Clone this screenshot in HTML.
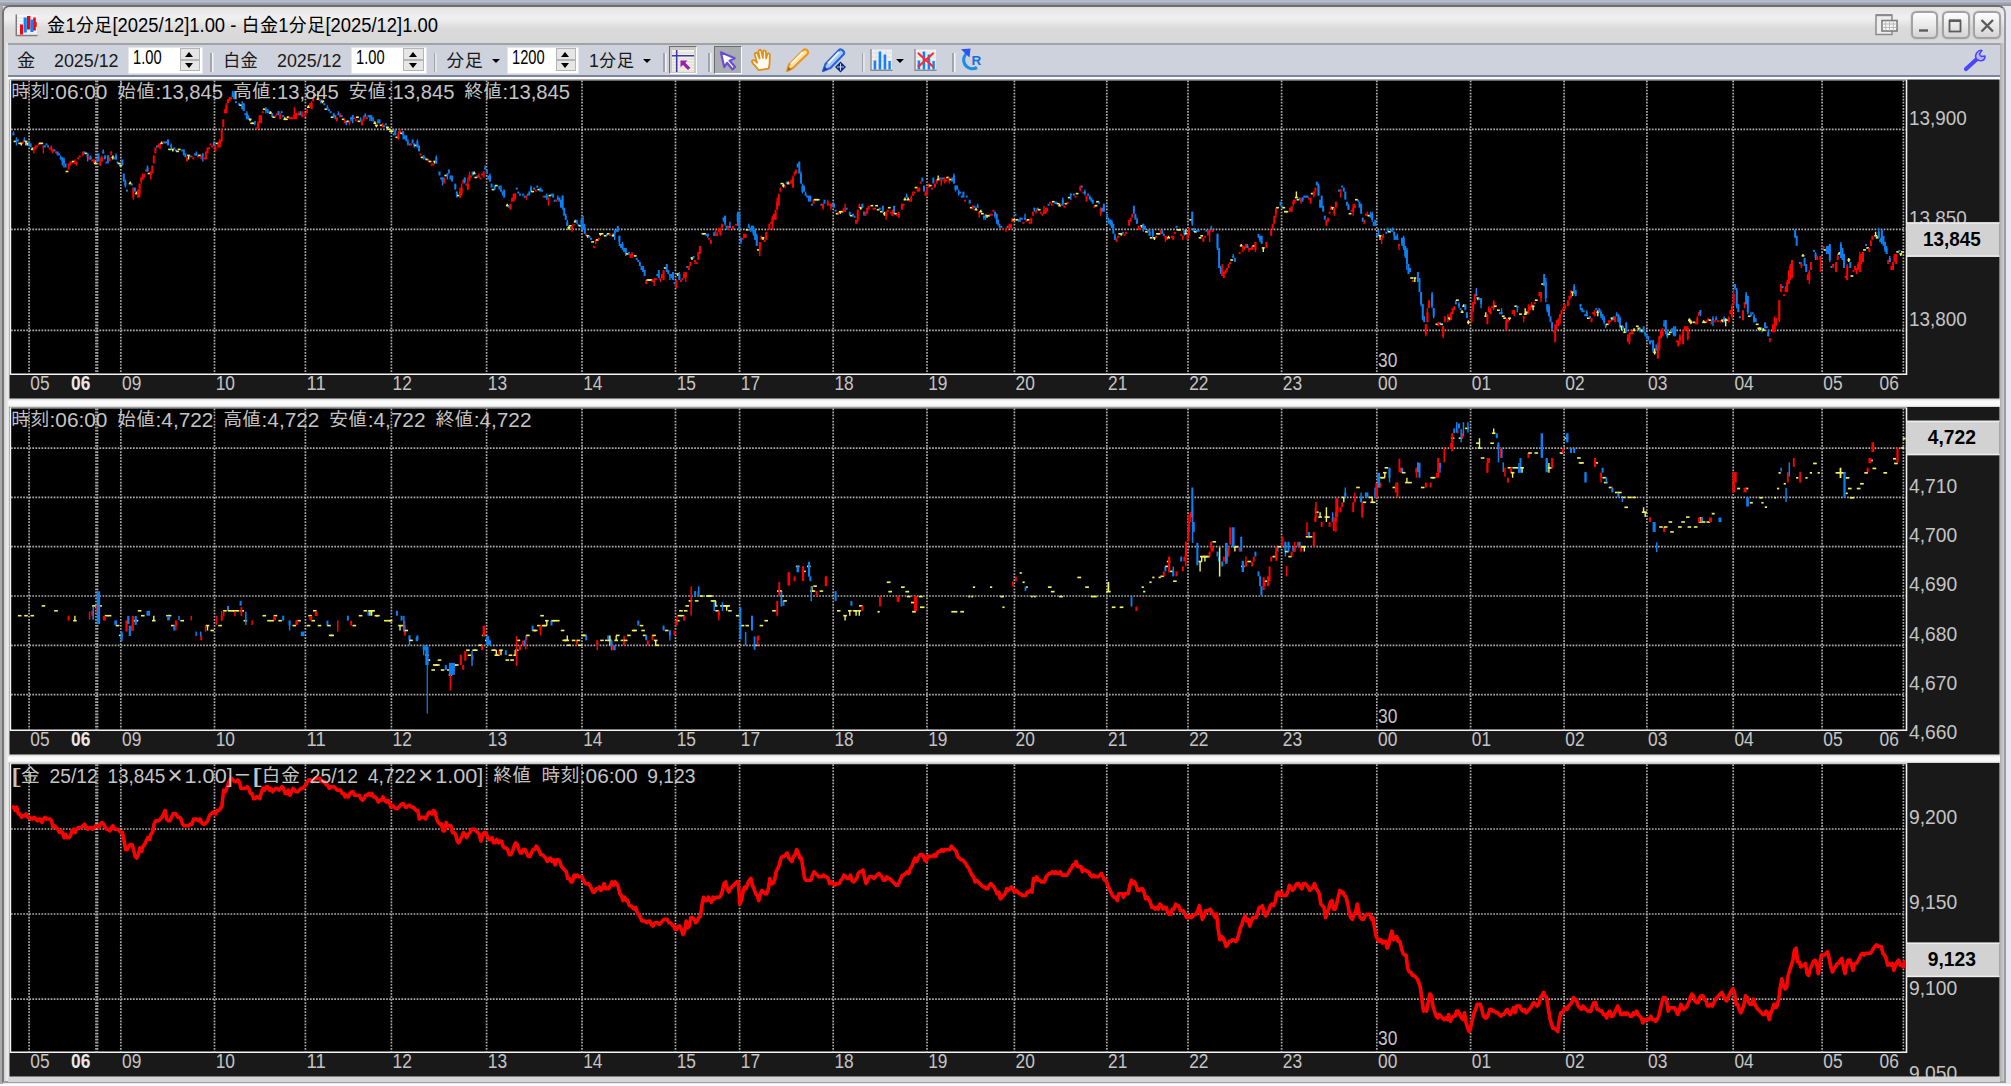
<!DOCTYPE html><html lang="ja"><head><meta charset="utf-8"><title>金1分足[2025/12]1.00 - 白金1分足[2025/12]1.00</title><style>
html,body{margin:0;padding:0;overflow:hidden}
body{width:2011px;height:1086px;overflow:hidden;background:#e7e9f2;font-family:"Liberation Sans","IPAGothic",sans-serif;position:relative}
.abs{position:absolute}
#topstrip{left:0;top:0;width:2011px;height:6px;background:linear-gradient(#aeb4c4 0,#b9bfcf 1.5px,#a0a5b1 3px,#96999f 5px,#8a8a8a 6px)}
#leftstrip{left:0;top:5px;width:3px;height:1081px;background:#a9a9ab}
#win{left:1.5px;top:4.8px;width:2004px;height:1078.7px;box-sizing:border-box;border:2px solid #747474;border-top:2.6px solid #6e6e6e;border-radius:8px 8px 0 0;background:#e2e2e2;border-bottom-color:#a0a0a0;border-right-color:#9c9c9c}
#bottomstrip{left:0;top:1083.5px;width:2011px;height:2.5px;background:#fdfdfd}
#title{left:3.5px;top:7px;width:2000px;height:36px;border-radius:6px 6px 0 0;background:linear-gradient(#e0e0e0 0,#e7e7e7 2px,#efefef 10px,#ededed 13px,#dbdbdb 21px,#d8d8d8 36px)}
#titletext{left:47px;top:13.5px;font-size:20px;line-height:22px;color:#000;white-space:nowrap;transform-origin:0 0}
.wbtn{top:11.3px;width:27.5px;height:27.5px;box-sizing:border-box;border:2px solid #a2a2a2;border-radius:5.5px;background:linear-gradient(#fdfdfd 0,#ececec 45%,#d4d4d4 100%);box-shadow:0 0 1.5px rgba(120,120,120,.55)}
#toolbar{left:8px;top:43px;width:1991.5px;height:33.5px;box-sizing:border-box;border-top:2px solid #a3a3a3;border-bottom:2px solid #7b879e;background:#ced2dc}
#toolunder{left:8px;top:76.5px;width:1991.5px;height:3px;background:#fafafa}
.tl{top:49.5px;font-size:19px;line-height:22px;color:#1a1a1a;white-space:nowrap;transform-origin:0 0}
.spin{top:47px;height:27px;background:#fff;box-sizing:border-box;border:1px solid #e4e6ea}
.spin span{position:absolute;left:4px;top:-0.8px;font-size:19.5px;line-height:20px;color:#000;transform-origin:0 0;white-space:nowrap}
.sb{position:absolute;right:2px;width:20.5px;box-sizing:border-box;border:1px solid #b4b4b4;background:#e6e6e6}
.sb.u{top:0.4px;height:11.3px}
.sb.d{top:12.2px;height:10.8px}
.sb i{position:absolute;left:4.6px;width:0;height:0;border-left:4.8px solid transparent;border-right:4.8px solid transparent}
.sb.u i{top:2.2px;border-bottom:5.2px solid #000}
.sb.d i{top:2.2px;border-top:5.2px solid #000}
.sep{top:53px;width:1.5px;height:19px;background:#a2a4aa;box-shadow:1.5px 0 0 #f4f4f6}
.dd{top:58.5px;width:0;height:0;border-left:4.4px solid transparent;border-right:4.4px solid transparent;border-top:4.6px solid #000}
.pressed{top:45.5px;width:28px;height:28.5px;box-sizing:border-box;border:1.6px solid;border-color:#6c6c6c #fbfbfb #fbfbfb #6c6c6c}
.ico{top:47px;width:26px;height:26px}
.panel{left:9px;width:1992px;overflow:hidden}
.panel svg{display:block}
.gap{left:8px;width:1991.5px;background:#fafafa}
</style></head><body><div class="abs" id="topstrip"></div><div class="abs" id="leftstrip"></div><div class="abs" id="bottomstrip"></div><div class="abs" id="win"></div><div class="abs" id="title"></div><svg class="abs" style="left:15px;top:14px" width="24" height="24" viewBox="0 0 24 24">
<rect x="2" y="1" width="20" height="20" fill="#f7f7f7"/><path d="M2 4H22M2 7H22M2 10H22M2 13H22M2 16H22M2 19H22" stroke="#d9e6e6" stroke-width="1"/>
<path d="M1.3 0.5V21.6H22.5" stroke="#7c7c7c" stroke-width="1.5" fill="none"/>
<rect x="5" y="10.5" width="3" height="10" fill="#ff0000"/><rect x="8.6" y="3.5" width="3.2" height="15" fill="#0a84ff"/><rect x="12" y="2" width="3.4" height="13.5" fill="#ff0000"/><rect x="15.4" y="5.5" width="3" height="12.5" fill="#0a84ff"/><rect x="18.2" y="3.5" width="2.6" height="13" fill="#ff0000"/><rect x="20.3" y="8" width="1.4" height="5" fill="#ff0000"/>
</svg><div class="abs" id="titletext" style="transform:scaleX(0.9207)">金1分足[2025/12]1.00 - 白金1分足[2025/12]1.00</div><svg class="abs" style="left:1875px;top:13px" width="24" height="24" viewBox="0 0 24 24">
<rect x="1" y="2" width="16" height="19.5" fill="#eee" stroke="#8a8a8a" stroke-width="1.5"/><rect x="1" y="1.2" width="16" height="2" fill="#8a8a8a"/>
<rect x="7" y="7.5" width="15" height="10.5" fill="#f4f4f4" stroke="#7a7a7a" stroke-width="1.6"/><path d="M7 11H22M7 14.5H22M10.7 7.5V18M14.5 7.5V18M18.3 7.5V18" stroke="#b4b4b4" stroke-width="0.9"/></svg><div class="abs wbtn" style="left:1910.5px"></div><div class="abs wbtn" style="left:1942px"></div><div class="abs wbtn" style="left:1973px"></div><svg class="abs" style="left:1910.5px;top:11.5px" width="90" height="27" viewBox="0 0 90 27">
<path d="M8 18.5H17" stroke="#5c5c5c" stroke-width="2.4"/>
<rect x="38.5" y="9" width="11" height="10.5" fill="none" stroke="#5c5c5c" stroke-width="1.8"/><path d="M38 8.6H50" stroke="#5c5c5c" stroke-width="2.6"/>
<path d="M70.5 8L82 19.5M82 8L70.5 19.5" stroke="#5c5c5c" stroke-width="2.4"/></svg><div class="abs" id="toolbar"></div><div class="abs" id="toolunder"></div><div class="abs tl" id="t1" style="left:17px;transform:scaleX(0.9789)">金</div><div class="abs tl" id="t2" style="left:53.5px;transform:scaleX(0.939)">2025/12</div><div class="abs spin" style="left:128px;width:75px"><span style="transform:scaleX(0.7536)">1.00</span><div class="sb u"><i></i></div><div class="sb d"><i></i></div></div><div class="abs sep" style="left:210px"></div><div class="abs tl" id="t3" style="left:222.8px;transform:scaleX(0.9263)">白金</div><div class="abs tl" id="t4" style="left:277px;transform:scaleX(0.939)">2025/12</div><div class="abs spin" style="left:351px;width:75.5px"><span style="transform:scaleX(0.7536)">1.00</span><div class="sb u"><i></i></div><div class="sb d"><i></i></div></div><div class="abs sep" style="left:433.7px"></div><div class="abs tl" id="t5" style="left:445.5px;transform:scaleX(0.9737)">分足</div><div class="abs dd" style="left:492px"></div><div class="abs spin" style="left:507px;width:72px"><span style="transform:scaleX(0.7536)">1200</span><div class="sb u"><i></i></div><div class="sb d"><i></i></div></div><div class="abs tl" id="t6" style="left:588.5px;transform:scaleX(0.9305)">1分足</div><div class="abs dd" style="left:643px"></div><div class="abs sep" style="left:663px"></div><div class="abs sep" style="left:708px"></div><div class="abs sep" style="left:861.5px"></div><div class="abs sep" style="left:952px"></div><div class="abs pressed" style="left:668.5px;background:#c9c9c9"></div><svg class="abs" style="left:672px;top:49.5px" width="22" height="22" viewBox="0 0 22 22">
<rect width="22" height="22" fill="#f3f1e4"/><path d="M0 3H22M0 6H22M0 9H22M0 12H22M0 15H22M0 18H22M0 21H22" stroke="#dcdacd" stroke-width="1"/>
<path d="M4.7 0V22M0 5.7H22" stroke="#3b3bb4" stroke-width="1.6"/>
<path d="M8.5 10.5H15.5L13.3 12.7L18.3 17.7L16 20L11 15L8.5 17.3Z" fill="#9a1fb0"/></svg><div class="abs pressed" style="left:713.5px;background:#a9acb0"></div><svg class="abs" style="left:716px;top:48px" width="24" height="24" viewBox="0 0 24 24">
<path transform="translate(1.2 1.5) scale(0.92)" d="M4 3L19 9.5L13.5 12.2L19.5 19L16.5 21.5L10.8 14.6L7.6 19Z" fill="#fff" stroke="#6a4fd0" stroke-width="2.4" stroke-linejoin="round"/></svg><svg class="abs" style="left:749px;top:47px" width="26" height="26" viewBox="0 0 26 26">
<path transform="rotate(-9 13 13) translate(0.5 0.5) scale(0.96)" d="M8 23C6 19 3.5 16.5 2.5 13.5C2 11.8 4 11 5.5 12.5L7.5 15L6.5 6.5C6.3 4.3 9 4 9.5 6L10.7 11L10.8 3.8C10.8 1.6 13.6 1.6 13.8 3.8L14.2 11L15.6 4.8C16 2.8 18.6 3.2 18.4 5.4L17.6 12L19.3 8.2C20.2 6.4 22.4 7.2 21.9 9.2C21 13 21 18 18.5 23Z" fill="#fffaf0" stroke="#e0901c" stroke-width="1.9" stroke-linejoin="round"/></svg><svg class="abs" style="left:785px;top:47px" width="26" height="26" viewBox="0 0 26 26">
<path d="M2 24L4 17.5L18.5 3C20.5 1 24.5 4.5 22.5 7L8 21Z" fill="#ffe1a8" stroke="#e8961e" stroke-width="2" stroke-linejoin="round"/><path d="M2 24L3.4 19.4L6.4 22.4Z" fill="#b06a10"/><path d="M6 17L18 5" stroke="#fff6e0" stroke-width="2"/></svg><svg class="abs" style="left:821px;top:47px" width="27" height="26" viewBox="0 0 27 26">
<path d="M2 24L4.5 17L18 3C20 1 25 5 22.5 7.5L9.5 21Z" fill="#a8c8ff" stroke="#2a66d8" stroke-width="2.2" stroke-linejoin="round"/><path d="M2 24L3.6 19.6L6.6 22.4Z" fill="#1a3f9c"/><path d="M7 16.5L18 5" stroke="#eef4ff" stroke-width="2"/>
<path d="M19.5 14.5L25 20L19.5 25.5L14 20Z" fill="#0b2a7a"/><path d="M19.5 16.5V23.5M16 20H23" stroke="#c8d6ff" stroke-width="1"/></svg><svg class="abs" style="left:869.5px;top:49px" width="23" height="23" viewBox="0 0 23 23">
<rect x="1" y="0.5" width="21" height="20.5" fill="#f0f0f0"/><path d="M1 4H22M1 8H22M1 12H22M1 16H22M6 0.5V21M11 0.5V21M16 0.5V21" stroke="#dcdcdc" stroke-width="0.8"/>
<path d="M1 0V21.3H22.5" stroke="#8c8c8c" stroke-width="1.4" fill="none"/>
<rect x="3.6" y="11.5" width="2.6" height="9" fill="#1482ff"/><rect x="8.6" y="2.5" width="2.6" height="18" fill="#1482ff"/><rect x="13.6" y="5.5" width="2.6" height="15" fill="#1482ff"/><rect x="18.4" y="12" width="2.4" height="8.5" fill="#1482ff"/></svg><div class="abs dd" style="left:896px"></div><svg class="abs" style="left:913.5px;top:49px" width="23" height="23" viewBox="0 0 23 23">
<rect x="1" y="0.5" width="21" height="20.5" fill="#f0f0f0"/><path d="M1 4H22M1 8H22M1 12H22M1 16H22" stroke="#dcdcdc" stroke-width="0.8"/>
<path d="M1 0V21.3H22.5" stroke="#8c8c8c" stroke-width="1.4" fill="none"/>
<rect x="3.6" y="11.5" width="2.6" height="9" fill="#1482ff"/><rect x="8.6" y="2.5" width="2.6" height="18" fill="#1482ff"/><rect x="13.6" y="5.5" width="2.6" height="15" fill="#1482ff"/><rect x="18.4" y="12" width="2.4" height="8.5" fill="#1482ff"/>
<path d="M4.5 4.5L19 17.5M19 4.5L4.5 17.5" stroke="#ff2a2a" stroke-width="2.2" stroke-linecap="round"/></svg><svg class="abs" style="left:958px;top:47px" width="26" height="26" viewBox="0 0 26 26">
<path d="M10 5.2A8.6 8.6 0 1 0 19 20.5" fill="none" stroke="#1a8fe6" stroke-width="3.2"/><path d="M3 2.2L12.5 1.5L11.5 10.5Z" fill="#2a50ff"/>
<text x="13.6" y="17.5" font-family="Liberation Sans, sans-serif" font-weight="bold" font-size="13.5" fill="#1470dc">R</text></svg><svg class="abs" style="left:1963px;top:48px" width="26" height="24" viewBox="0 0 26 24">
<path d="M3 21L14.5 10.5" stroke="#4a46ff" stroke-width="4.2" stroke-linecap="round"/><path d="M13.2 10.8C11.4 6.6 14.4 2 19 2.4L16.4 6L18.2 8.6L22 8C22.4 12.4 17.6 14.6 13.2 10.8Z" fill="#b8b8ff" stroke="#4a46ff" stroke-width="1.5" stroke-linejoin="round"/></svg><div class="abs panel" style="top:79px;height:320px"><svg width="1992" height="320" viewBox="9 79 1992 320" font-family="Liberation Sans, IPAGothic, sans-serif"><rect x="9.5" y="79.5" width="1990" height="319" fill="#191919"/><rect x="10" y="79.5" width="1896.5" height="294.8" fill="#000"/><path d="M10 79.9H1906.5" stroke="#c8c8c8" stroke-width="1.3" fill="none"/><path d="M10.4 79.5V374.3H1906.5V79.5" stroke="#f4f4f4" stroke-width="1.6" fill="none"/><clipPath id="c1"><rect x="11" y="79.5" width="1895" height="294.3"/></clipPath><g stroke="#acacac" stroke-width="1.7" stroke-dasharray="1.7 1.35" fill="none"><path d="M29.1 80.5V374.3"/><path d="M120.8 80.5V374.3"/><path d="M214.5 80.5V374.3"/><path d="M305.4 80.5V374.3"/><path d="M391.4 80.5V374.3"/><path d="M486.6 80.5V374.3"/><path d="M582 80.5V374.3"/><path d="M675.5 80.5V374.3"/><path d="M739.6 80.5V374.3"/><path d="M833.2 80.5V374.3"/><path d="M927 80.5V374.3"/><path d="M1014.4 80.5V374.3"/><path d="M1106.8 80.5V374.3"/><path d="M1188 80.5V374.3"/><path d="M1281.6 80.5V374.3"/><path d="M1376.8 80.5V374.3"/><path d="M1470.6 80.5V374.3"/><path d="M1564.1 80.5V374.3"/><path d="M1646.9 80.5V374.3"/><path d="M1733.2 80.5V374.3"/><path d="M1822.1 80.5V374.3"/><path d="M1903.4 80.5V374.3"/><path d="M96 80.5V374.3"/><path d="M97.5 80.5V374.3"/><path d="M11 129.3H1905.5"/><path d="M11 229.3H1905.5"/><path d="M11 330.3H1905.5"/></g><g clip-path="url(#c1)"><path d="M13.4 131.3V135.3" stroke="#0a80f4" stroke-width="1.4"/><rect x="12.4" y="133.3" width="2" height="2" fill="#0a80f4"/><rect x="13.6" y="140.6" width="2.8" height="1.6" fill="#f0f060"/><path d="M16.5 137.3V145.4" stroke="#0a80f4" stroke-width="1.4"/><rect x="15.5" y="139.4" width="2" height="2" fill="#0a80f4"/><rect x="17.1" y="139.4" width="2" height="2" fill="#0a80f4"/><rect x="18.3" y="142.6" width="2.8" height="1.6" fill="#f0f060"/><path d="M21.3 143.4V145.4" stroke="#f0f060" stroke-width="1.4"/><rect x="19.9" y="142.6" width="2.8" height="1.6" fill="#f0f060"/><rect x="21.8" y="141.4" width="2" height="2" fill="#ff0000"/><path d="M24.4 137.3V141.4" stroke="#0a80f4" stroke-width="1.4"/><rect x="23.4" y="139.4" width="2" height="2" fill="#0a80f4"/><path d="M26 141.4V145.4" stroke="#f0f060" stroke-width="1.4"/><rect x="24.6" y="140.6" width="2.8" height="1.6" fill="#f0f060"/><path d="M27.6 143.4V145.4" stroke="#f0f060" stroke-width="1.4"/><rect x="26.2" y="142.6" width="2.8" height="1.6" fill="#f0f060"/><rect x="28.2" y="141.4" width="2" height="4" fill="#0a80f4"/><rect x="29.7" y="143.4" width="2" height="4" fill="#0a80f4"/><path d="M32.3 147.4V149.4" stroke="#f0f060" stroke-width="1.4"/><rect x="30.9" y="148.6" width="2.8" height="1.6" fill="#f0f060"/><path d="M33.9 147.4V153.4" stroke="#ff0000" stroke-width="1.4"/><rect x="32.9" y="147.4" width="2" height="2" fill="#ff0000"/><rect x="34.5" y="145.4" width="2" height="4" fill="#ff0000"/><rect x="36.1" y="145.4" width="2" height="2" fill="#ff0000"/><rect x="37.6" y="143.4" width="2" height="2" fill="#ff0000"/><rect x="38.8" y="142.6" width="2.8" height="1.6" fill="#f0f060"/><rect x="40.4" y="142.6" width="2.8" height="1.6" fill="#f0f060"/><path d="M43.4 145.4V153.4" stroke="#ff0000" stroke-width="1.4"/><rect x="42.4" y="145.4" width="2" height="2" fill="#ff0000"/><rect x="43.9" y="145.4" width="2" height="2" fill="#0a80f4"/><rect x="45.5" y="143.4" width="2" height="2" fill="#0a80f4"/><rect x="47.1" y="145.4" width="2" height="2" fill="#0a80f4"/><rect x="48.7" y="147.4" width="2" height="2" fill="#ff0000"/><path d="M51.3 145.4V151.4" stroke="#ff0000" stroke-width="1.4"/><rect x="50.3" y="147.4" width="2" height="2" fill="#ff0000"/><path d="M52.8 149.4V153.4" stroke="#ff0000" stroke-width="1.4"/><rect x="51.8" y="149.4" width="2" height="2" fill="#ff0000"/><rect x="53.4" y="149.4" width="2" height="2" fill="#0a80f4"/><rect x="55" y="151.4" width="2" height="2" fill="#ff0000"/><rect x="56.6" y="151.4" width="2" height="4" fill="#0a80f4"/><rect x="58.1" y="153.4" width="2" height="2" fill="#0a80f4"/><path d="M60.7 155.4V159.5" stroke="#0a80f4" stroke-width="1.4"/><rect x="59.7" y="157.4" width="2" height="2" fill="#0a80f4"/><path d="M62.3 157.4V165.5" stroke="#0a80f4" stroke-width="1.4"/><rect x="61.3" y="157.4" width="2" height="4" fill="#0a80f4"/><path d="M63.9 157.4V167.5" stroke="#0a80f4" stroke-width="1.4"/><rect x="62.9" y="159.5" width="2" height="4" fill="#0a80f4"/><rect x="64.5" y="163.5" width="2" height="4" fill="#0a80f4"/><rect x="65.6" y="170.7" width="2.8" height="1.6" fill="#f0f060"/><rect x="67.6" y="163.5" width="2" height="6" fill="#ff0000"/><rect x="69.2" y="161.5" width="2" height="4" fill="#ff0000"/><rect x="70.8" y="161.5" width="2" height="2" fill="#ff0000"/><rect x="71.9" y="160.7" width="2.8" height="1.6" fill="#f0f060"/><path d="M74.9 159.5V163.5" stroke="#ff0000" stroke-width="1.4"/><rect x="73.9" y="161.5" width="2" height="2" fill="#ff0000"/><rect x="75.5" y="161.5" width="2" height="4" fill="#ff0000"/><rect x="77.1" y="157.4" width="2" height="2" fill="#ff0000"/><rect x="78.7" y="155.4" width="2" height="2" fill="#ff0000"/><path d="M82.8 151.4V155.4" stroke="#ff0000" stroke-width="1.4"/><rect x="81.8" y="153.4" width="2" height="2" fill="#ff0000"/><rect x="83.4" y="151.4" width="2" height="2" fill="#0a80f4"/><rect x="84.6" y="152.6" width="2.8" height="1.6" fill="#f0f060"/><path d="M87.6 153.4V161.5" stroke="#0a80f4" stroke-width="1.4"/><rect x="86.6" y="153.4" width="2" height="4" fill="#0a80f4"/><path d="M89.1 155.4V159.5" stroke="#ff0000" stroke-width="1.4"/><rect x="88.1" y="157.4" width="2" height="2" fill="#ff0000"/><path d="M90.7 155.4V159.5" stroke="#0a80f4" stroke-width="1.4"/><rect x="89.7" y="157.4" width="2" height="2" fill="#0a80f4"/><rect x="91.3" y="159.5" width="2" height="2" fill="#ff0000"/><path d="M93.9 159.5V163.5" stroke="#ff0000" stroke-width="1.4"/><rect x="92.9" y="159.5" width="2" height="2" fill="#ff0000"/><path d="M95.4 161.5V163.5" stroke="#f0f060" stroke-width="1.4"/><rect x="94" y="162.7" width="2.8" height="1.6" fill="#f0f060"/><rect x="96" y="159.5" width="2" height="2" fill="#0a80f4"/><rect x="97.6" y="153.4" width="2" height="8" fill="#0a80f4"/><path d="M100.2 157.4V165.5" stroke="#ff0000" stroke-width="1.4"/><rect x="99.2" y="161.5" width="2" height="4" fill="#ff0000"/><path d="M101.8 155.4V161.5" stroke="#ff0000" stroke-width="1.4"/><rect x="100.8" y="157.4" width="2" height="4" fill="#ff0000"/><path d="M103.3 149.4V153.4" stroke="#0a80f4" stroke-width="1.4"/><rect x="102.3" y="151.4" width="2" height="2" fill="#0a80f4"/><rect x="103.9" y="155.4" width="2" height="4" fill="#0a80f4"/><rect x="105.5" y="161.5" width="2" height="2" fill="#0a80f4"/><path d="M108.1 155.4V163.5" stroke="#0a80f4" stroke-width="1.4"/><rect x="107.1" y="155.4" width="2" height="6" fill="#0a80f4"/><rect x="108.6" y="157.4" width="2" height="4" fill="#ff0000"/><path d="M111.2 151.4V155.4" stroke="#ff0000" stroke-width="1.4"/><rect x="110.2" y="151.4" width="2" height="2" fill="#ff0000"/><path d="M112.8 155.4V159.5" stroke="#f0f060" stroke-width="1.4"/><rect x="111.4" y="156.6" width="2.8" height="1.6" fill="#f0f060"/><rect x="113.4" y="157.4" width="2" height="2" fill="#0a80f4"/><path d="M116 153.4V159.5" stroke="#0a80f4" stroke-width="1.4"/><rect x="115" y="155.4" width="2" height="4" fill="#0a80f4"/><rect x="116.5" y="161.5" width="2" height="2" fill="#0a80f4"/><rect x="117.7" y="162.7" width="2.8" height="1.6" fill="#f0f060"/><rect x="119.3" y="164.7" width="2.8" height="1.6" fill="#f0f060"/><rect x="121.3" y="159.5" width="2" height="6" fill="#0a80f4"/><rect x="122.8" y="173.5" width="2" height="8" fill="#0a80f4"/><path d="M125.4 179.6V187.6" stroke="#0a80f4" stroke-width="1.4"/><rect x="124.4" y="181.6" width="2" height="4" fill="#0a80f4"/><rect x="126" y="189.6" width="2" height="2" fill="#0a80f4"/><path d="M130.2 181.6V183.6" stroke="#f0f060" stroke-width="1.4"/><rect x="128.8" y="182.8" width="2.8" height="1.6" fill="#f0f060"/><rect x="130.7" y="183.6" width="2" height="2" fill="#0a80f4"/><path d="M133.3 187.6V199.7" stroke="#ff0000" stroke-width="1.4"/><rect x="132.3" y="187.6" width="2" height="10" fill="#ff0000"/><rect x="133.9" y="187.6" width="2" height="4" fill="#0a80f4"/><path d="M136.5 191.6V193.6" stroke="#f0f060" stroke-width="1.4"/><rect x="135.1" y="192.8" width="2.8" height="1.6" fill="#f0f060"/><rect x="137.1" y="189.6" width="2" height="8" fill="#ff0000"/><path d="M139.6 183.6V197.6" stroke="#ff0000" stroke-width="1.4"/><rect x="138.6" y="183.6" width="2" height="10.1" fill="#ff0000"/><path d="M141.2 177.5V183.6" stroke="#ff0000" stroke-width="1.4"/><rect x="140.2" y="177.5" width="2" height="4" fill="#ff0000"/><path d="M142.8 173.5V179.6" stroke="#ff0000" stroke-width="1.4"/><rect x="141.8" y="175.5" width="2" height="4" fill="#ff0000"/><rect x="143.4" y="173.5" width="2" height="4" fill="#ff0000"/><rect x="144.9" y="169.5" width="2" height="2" fill="#ff0000"/><path d="M147.5 165.5V171.5" stroke="#0a80f4" stroke-width="1.4"/><rect x="146.5" y="167.5" width="2" height="4" fill="#0a80f4"/><rect x="147.7" y="172.7" width="2.8" height="1.6" fill="#f0f060"/><path d="M150.7 171.5V179.6" stroke="#ff0000" stroke-width="1.4"/><rect x="149.7" y="171.5" width="2" height="4" fill="#ff0000"/><rect x="151.3" y="165.5" width="2" height="8" fill="#ff0000"/><rect x="152.8" y="155.4" width="2" height="8" fill="#ff0000"/><rect x="154.4" y="147.4" width="2" height="6" fill="#ff0000"/><rect x="156" y="145.4" width="2" height="2" fill="#0a80f4"/><path d="M158.6 143.4V147.4" stroke="#ff0000" stroke-width="1.4"/><rect x="157.6" y="145.4" width="2" height="2" fill="#ff0000"/><path d="M160.1 143.4V149.4" stroke="#ff0000" stroke-width="1.4"/><rect x="159.1" y="143.4" width="2" height="2" fill="#ff0000"/><path d="M161.7 141.4V143.4" stroke="#f0f060" stroke-width="1.4"/><rect x="160.3" y="142.6" width="2.8" height="1.6" fill="#f0f060"/><rect x="162.3" y="141.4" width="2" height="2" fill="#ff0000"/><rect x="163.9" y="141.4" width="2" height="2" fill="#0a80f4"/><rect x="165.5" y="141.4" width="2" height="2" fill="#0a80f4"/><rect x="167" y="139.4" width="2" height="6" fill="#0a80f4"/><rect x="168.2" y="148.6" width="2.8" height="1.6" fill="#f0f060"/><path d="M171.2 143.4V149.4" stroke="#0a80f4" stroke-width="1.4"/><rect x="170.2" y="145.4" width="2" height="2" fill="#0a80f4"/><path d="M172.8 149.4V151.4" stroke="#f0f060" stroke-width="1.4"/><rect x="171.4" y="148.6" width="2.8" height="1.6" fill="#f0f060"/><rect x="173.3" y="147.4" width="2" height="2" fill="#0a80f4"/><rect x="174.9" y="149.4" width="2" height="2" fill="#0a80f4"/><rect x="176.1" y="150.6" width="2.8" height="1.6" fill="#f0f060"/><rect x="177.7" y="148.6" width="2.8" height="1.6" fill="#f0f060"/><rect x="181.2" y="149.4" width="2" height="2" fill="#0a80f4"/><rect x="182.8" y="149.4" width="2" height="6" fill="#0a80f4"/><rect x="184.4" y="153.4" width="2" height="4" fill="#0a80f4"/><rect x="186" y="157.4" width="2" height="4" fill="#ff0000"/><path d="M188.6 155.4V159.5" stroke="#f0f060" stroke-width="1.4"/><rect x="187.2" y="154.6" width="2.8" height="1.6" fill="#f0f060"/><rect x="189.1" y="155.4" width="2" height="2" fill="#0a80f4"/><rect x="190.7" y="155.4" width="2" height="2" fill="#ff0000"/><rect x="192.3" y="157.4" width="2" height="2" fill="#ff0000"/><rect x="193.9" y="153.4" width="2" height="2" fill="#0a80f4"/><path d="M196.4 151.4V155.4" stroke="#0a80f4" stroke-width="1.4"/><rect x="195.4" y="153.4" width="2" height="2" fill="#0a80f4"/><rect x="197" y="155.4" width="2" height="2" fill="#ff0000"/><rect x="198.2" y="154.6" width="2.8" height="1.6" fill="#f0f060"/><path d="M201.2 155.4V159.5" stroke="#ff0000" stroke-width="1.4"/><rect x="200.2" y="155.4" width="2" height="2" fill="#ff0000"/><path d="M202.8 153.4V161.5" stroke="#0a80f4" stroke-width="1.4"/><rect x="201.8" y="153.4" width="2" height="2" fill="#0a80f4"/><rect x="203.3" y="157.4" width="2" height="2" fill="#ff0000"/><rect x="204.9" y="151.4" width="2" height="8" fill="#ff0000"/><rect x="206.5" y="147.4" width="2" height="6" fill="#ff0000"/><rect x="208.1" y="147.4" width="2" height="2" fill="#ff0000"/><rect x="209.6" y="143.4" width="2" height="2" fill="#ff0000"/><rect x="211.2" y="145.4" width="2" height="2" fill="#ff0000"/><path d="M213.8 141.4V145.4" stroke="#0a80f4" stroke-width="1.4"/><rect x="212.8" y="143.4" width="2" height="2" fill="#0a80f4"/><rect x="214.4" y="145.4" width="2" height="6" fill="#ff0000"/><rect x="215.6" y="142.6" width="2.8" height="1.6" fill="#f0f060"/><path d="M218.5 141.4V147.4" stroke="#ff0000" stroke-width="1.4"/><rect x="217.5" y="143.4" width="2" height="4" fill="#ff0000"/><path d="M220.1 139.4V147.4" stroke="#ff0000" stroke-width="1.4"/><rect x="219.1" y="139.4" width="2" height="4" fill="#ff0000"/><rect x="220.7" y="129.3" width="2" height="12.1" fill="#ff0000"/><rect x="222.3" y="119.3" width="2" height="8" fill="#ff0000"/><rect x="223.9" y="109.2" width="2" height="4" fill="#ff0000"/><path d="M226.4 103.2V113.2" stroke="#ff0000" stroke-width="1.4"/><rect x="225.4" y="105.2" width="2" height="8" fill="#ff0000"/><rect x="227" y="99.2" width="2" height="4" fill="#ff0000"/><rect x="228.6" y="97.1" width="2" height="4" fill="#ff0000"/><rect x="230.2" y="97.1" width="2" height="2" fill="#ff0000"/><path d="M232.7 91.1V97.1" stroke="#0a80f4" stroke-width="1.4"/><rect x="231.7" y="93.1" width="2" height="4" fill="#0a80f4"/><path d="M234.3 91.1V99.2" stroke="#0a80f4" stroke-width="1.4"/><rect x="233.3" y="93.1" width="2" height="6" fill="#0a80f4"/><rect x="234.9" y="101.2" width="2" height="2" fill="#0a80f4"/><rect x="238.1" y="103.2" width="2" height="2" fill="#0a80f4"/><rect x="239.2" y="104.4" width="2.8" height="1.6" fill="#f0f060"/><path d="M242.2 101.2V109.2" stroke="#0a80f4" stroke-width="1.4"/><rect x="241.2" y="105.2" width="2" height="4" fill="#0a80f4"/><rect x="242.8" y="103.2" width="2" height="8" fill="#0a80f4"/><rect x="244.4" y="113.2" width="2" height="2" fill="#0a80f4"/><path d="M246.9 111.2V119.3" stroke="#0a80f4" stroke-width="1.4"/><rect x="245.9" y="113.2" width="2" height="6" fill="#0a80f4"/><path d="M248.5 115.2V119.3" stroke="#0a80f4" stroke-width="1.4"/><rect x="247.5" y="117.2" width="2" height="2" fill="#0a80f4"/><path d="M250.1 119.3V121.3" stroke="#f0f060" stroke-width="1.4"/><rect x="248.7" y="118.5" width="2.8" height="1.6" fill="#f0f060"/><rect x="250.3" y="122.5" width="2.8" height="1.6" fill="#f0f060"/><rect x="251.9" y="122.5" width="2.8" height="1.6" fill="#f0f060"/><path d="M254.8 121.3V125.3" stroke="#0a80f4" stroke-width="1.4"/><rect x="253.8" y="121.3" width="2" height="2" fill="#0a80f4"/><rect x="255.4" y="127.3" width="2" height="2" fill="#ff0000"/><path d="M258 121.3V129.3" stroke="#ff0000" stroke-width="1.4"/><rect x="257" y="123.3" width="2" height="4" fill="#ff0000"/><rect x="258.6" y="115.2" width="2" height="8" fill="#ff0000"/><rect x="260.1" y="115.2" width="2" height="8" fill="#ff0000"/><rect x="261.7" y="111.2" width="2" height="2" fill="#ff0000"/><rect x="262.9" y="108.4" width="2.8" height="1.6" fill="#f0f060"/><path d="M265.9 107.2V113.2" stroke="#0a80f4" stroke-width="1.4"/><rect x="264.9" y="109.2" width="2" height="2" fill="#0a80f4"/><path d="M267.5 109.2V113.2" stroke="#0a80f4" stroke-width="1.4"/><rect x="266.5" y="109.2" width="2" height="2" fill="#0a80f4"/><rect x="268" y="111.2" width="2" height="2" fill="#0a80f4"/><path d="M270.6 111.2V113.2" stroke="#f0f060" stroke-width="1.4"/><rect x="269.2" y="112.4" width="2.8" height="1.6" fill="#f0f060"/><rect x="271.2" y="113.2" width="2" height="4" fill="#0a80f4"/><rect x="272.4" y="116.4" width="2.8" height="1.6" fill="#f0f060"/><rect x="274.4" y="115.2" width="2" height="2" fill="#ff0000"/><rect x="275.9" y="113.2" width="2" height="2" fill="#ff0000"/><path d="M278.5 111.2V115.2" stroke="#0a80f4" stroke-width="1.4"/><rect x="277.5" y="111.2" width="2" height="2" fill="#0a80f4"/><rect x="279.1" y="113.2" width="2" height="6" fill="#ff0000"/><rect x="280.7" y="111.2" width="2" height="2" fill="#0a80f4"/><rect x="282.2" y="115.2" width="2" height="2" fill="#0a80f4"/><path d="M284.8 117.2V119.3" stroke="#f0f060" stroke-width="1.4"/><rect x="283.4" y="118.5" width="2.8" height="1.6" fill="#f0f060"/><rect x="285" y="118.5" width="2.8" height="1.6" fill="#f0f060"/><rect x="286.6" y="116.4" width="2.8" height="1.6" fill="#f0f060"/><rect x="288.6" y="117.2" width="2" height="2" fill="#ff0000"/><rect x="290.1" y="117.2" width="2" height="2" fill="#ff0000"/><rect x="291.7" y="117.2" width="2" height="2" fill="#ff0000"/><path d="M294.3 107.2V119.3" stroke="#ff0000" stroke-width="1.4"/><rect x="293.3" y="115.2" width="2" height="2" fill="#ff0000"/><rect x="294.9" y="113.2" width="2" height="6" fill="#ff0000"/><rect x="296.4" y="113.2" width="2" height="2" fill="#ff0000"/><path d="M299 111.2V115.2" stroke="#ff0000" stroke-width="1.4"/><rect x="298" y="113.2" width="2" height="2" fill="#ff0000"/><path d="M300.6 111.2V115.2" stroke="#0a80f4" stroke-width="1.4"/><rect x="299.6" y="113.2" width="2" height="2" fill="#0a80f4"/><path d="M302.2 111.2V117.2" stroke="#ff0000" stroke-width="1.4"/><rect x="301.2" y="115.2" width="2" height="2" fill="#ff0000"/><rect x="304.3" y="113.2" width="2" height="4" fill="#ff0000"/><rect x="305.9" y="109.2" width="2" height="4" fill="#ff0000"/><path d="M308.5 105.2V107.2" stroke="#f0f060" stroke-width="1.4"/><rect x="307.1" y="106.4" width="2.8" height="1.6" fill="#f0f060"/><rect x="309.1" y="103.2" width="2" height="4" fill="#ff0000"/><path d="M311.6 101.2V109.2" stroke="#ff0000" stroke-width="1.4"/><rect x="310.6" y="103.2" width="2" height="6" fill="#ff0000"/><path d="M313.2 97.1V101.2" stroke="#ff0000" stroke-width="1.4"/><rect x="312.2" y="99.2" width="2" height="2" fill="#ff0000"/><rect x="313.4" y="94.3" width="2.8" height="1.6" fill="#f0f060"/><path d="M318 91.1V99.2" stroke="#f0f060" stroke-width="1.4"/><rect x="316.6" y="98.4" width="2.8" height="1.6" fill="#f0f060"/><rect x="318.5" y="99.2" width="2" height="2" fill="#ff0000"/><path d="M321.1 99.2V103.2" stroke="#0a80f4" stroke-width="1.4"/><rect x="320.1" y="101.2" width="2" height="2" fill="#0a80f4"/><path d="M322.7 101.2V103.2" stroke="#f0f060" stroke-width="1.4"/><rect x="321.3" y="100.4" width="2.8" height="1.6" fill="#f0f060"/><rect x="323.3" y="103.2" width="2" height="2" fill="#0a80f4"/><rect x="324.5" y="108.4" width="2.8" height="1.6" fill="#f0f060"/><path d="M327.4 105.2V109.2" stroke="#0a80f4" stroke-width="1.4"/><rect x="326.4" y="107.2" width="2" height="2" fill="#0a80f4"/><rect x="328" y="109.2" width="2" height="2" fill="#0a80f4"/><rect x="329.6" y="111.2" width="2" height="2" fill="#0a80f4"/><rect x="330.8" y="116.4" width="2.8" height="1.6" fill="#f0f060"/><rect x="332.7" y="113.2" width="2" height="4" fill="#0a80f4"/><path d="M335.3 115.2V119.3" stroke="#0a80f4" stroke-width="1.4"/><rect x="334.3" y="115.2" width="2" height="2" fill="#0a80f4"/><rect x="335.9" y="117.2" width="2" height="4" fill="#ff0000"/><path d="M338.5 111.2V115.2" stroke="#0a80f4" stroke-width="1.4"/><rect x="337.5" y="113.2" width="2" height="2" fill="#0a80f4"/><path d="M340.1 113.2V117.2" stroke="#ff0000" stroke-width="1.4"/><rect x="339.1" y="115.2" width="2" height="2" fill="#ff0000"/><rect x="340.6" y="115.2" width="2" height="2" fill="#0a80f4"/><rect x="341.8" y="118.5" width="2.8" height="1.6" fill="#f0f060"/><rect x="343.8" y="119.3" width="2" height="4" fill="#ff0000"/><path d="M346.4 121.3V125.3" stroke="#0a80f4" stroke-width="1.4"/><rect x="345.4" y="121.3" width="2" height="2" fill="#0a80f4"/><rect x="346.5" y="120.5" width="2.8" height="1.6" fill="#f0f060"/><path d="M349.5 121.3V125.3" stroke="#ff0000" stroke-width="1.4"/><rect x="348.5" y="121.3" width="2" height="2" fill="#ff0000"/><path d="M351.1 117.2V121.3" stroke="#0a80f4" stroke-width="1.4"/><rect x="350.1" y="117.2" width="2" height="2" fill="#0a80f4"/><path d="M352.7 115.2V123.3" stroke="#0a80f4" stroke-width="1.4"/><rect x="351.7" y="115.2" width="2" height="4" fill="#0a80f4"/><rect x="353.3" y="117.2" width="2" height="2" fill="#ff0000"/><rect x="354.8" y="119.3" width="2" height="2" fill="#ff0000"/><rect x="356" y="116.4" width="2.8" height="1.6" fill="#f0f060"/><rect x="357.6" y="120.5" width="2.8" height="1.6" fill="#f0f060"/><path d="M360.6 117.2V121.3" stroke="#0a80f4" stroke-width="1.4"/><rect x="359.6" y="119.3" width="2" height="2" fill="#0a80f4"/><path d="M362.1 119.3V125.3" stroke="#ff0000" stroke-width="1.4"/><rect x="361.1" y="121.3" width="2" height="4" fill="#ff0000"/><path d="M363.7 115.2V121.3" stroke="#ff0000" stroke-width="1.4"/><rect x="362.7" y="117.2" width="2" height="2" fill="#ff0000"/><path d="M365.3 113.2V117.2" stroke="#0a80f4" stroke-width="1.4"/><rect x="364.3" y="115.2" width="2" height="2" fill="#0a80f4"/><rect x="365.9" y="117.2" width="2" height="2" fill="#ff0000"/><rect x="367.5" y="115.2" width="2" height="2" fill="#0a80f4"/><path d="M370 115.2V121.3" stroke="#0a80f4" stroke-width="1.4"/><rect x="369" y="115.2" width="2" height="2" fill="#0a80f4"/><path d="M371.6 115.2V121.3" stroke="#0a80f4" stroke-width="1.4"/><rect x="370.6" y="117.2" width="2" height="2" fill="#0a80f4"/><path d="M373.2 117.2V121.3" stroke="#0a80f4" stroke-width="1.4"/><rect x="372.2" y="119.3" width="2" height="2" fill="#0a80f4"/><path d="M374.8 121.3V123.3" stroke="#f0f060" stroke-width="1.4"/><rect x="373.4" y="122.5" width="2.8" height="1.6" fill="#f0f060"/><path d="M376.4 125.3V127.3" stroke="#f0f060" stroke-width="1.4"/><rect x="375" y="124.5" width="2.8" height="1.6" fill="#f0f060"/><path d="M377.9 119.3V123.3" stroke="#0a80f4" stroke-width="1.4"/><rect x="376.9" y="121.3" width="2" height="2" fill="#0a80f4"/><rect x="378.5" y="119.3" width="2" height="4" fill="#0a80f4"/><rect x="379.7" y="124.5" width="2.8" height="1.6" fill="#f0f060"/><path d="M382.7 123.3V127.3" stroke="#ff0000" stroke-width="1.4"/><rect x="381.7" y="125.3" width="2" height="2" fill="#ff0000"/><rect x="383.2" y="125.3" width="2" height="2" fill="#0a80f4"/><rect x="384.8" y="123.3" width="2" height="2" fill="#0a80f4"/><path d="M387.4 127.3V129.3" stroke="#f0f060" stroke-width="1.4"/><rect x="386" y="126.5" width="2.8" height="1.6" fill="#f0f060"/><rect x="387.6" y="128.5" width="2.8" height="1.6" fill="#f0f060"/><rect x="389.2" y="130.5" width="2.8" height="1.6" fill="#f0f060"/><rect x="390.7" y="130.5" width="2.8" height="1.6" fill="#f0f060"/><rect x="392.7" y="133.3" width="2" height="2" fill="#0a80f4"/><rect x="394.3" y="129.3" width="2" height="6" fill="#0a80f4"/><rect x="395.5" y="136.5" width="2.8" height="1.6" fill="#f0f060"/><path d="M398.4 131.3V139.4" stroke="#ff0000" stroke-width="1.4"/><rect x="397.4" y="133.3" width="2" height="6" fill="#ff0000"/><path d="M400 129.3V133.3" stroke="#ff0000" stroke-width="1.4"/><rect x="399" y="131.3" width="2" height="2" fill="#ff0000"/><rect x="400.2" y="132.5" width="2.8" height="1.6" fill="#f0f060"/><path d="M403.2 131.3V139.4" stroke="#0a80f4" stroke-width="1.4"/><rect x="402.2" y="131.3" width="2" height="4" fill="#0a80f4"/><rect x="403.8" y="135.3" width="2" height="4" fill="#0a80f4"/><rect x="405.3" y="135.3" width="2" height="6" fill="#0a80f4"/><path d="M407.9 139.4V145.4" stroke="#0a80f4" stroke-width="1.4"/><rect x="406.9" y="141.4" width="2" height="2" fill="#0a80f4"/><rect x="408.5" y="143.4" width="2" height="2" fill="#0a80f4"/><rect x="410.1" y="143.4" width="2" height="2" fill="#ff0000"/><rect x="411.6" y="139.4" width="2" height="4" fill="#0a80f4"/><path d="M414.2 143.4V147.4" stroke="#0a80f4" stroke-width="1.4"/><rect x="413.2" y="143.4" width="2" height="2" fill="#0a80f4"/><rect x="414.4" y="144.6" width="2.8" height="1.6" fill="#f0f060"/><path d="M417.4 139.4V147.4" stroke="#0a80f4" stroke-width="1.4"/><rect x="416.4" y="141.4" width="2" height="6" fill="#0a80f4"/><rect x="418" y="145.4" width="2" height="6" fill="#0a80f4"/><rect x="419.5" y="153.4" width="2" height="2" fill="#ff0000"/><rect x="420.7" y="156.6" width="2.8" height="1.6" fill="#f0f060"/><path d="M423.7 155.4V159.5" stroke="#0a80f4" stroke-width="1.4"/><rect x="422.7" y="155.4" width="2" height="2" fill="#0a80f4"/><rect x="424.3" y="157.4" width="2" height="2" fill="#0a80f4"/><rect x="425.5" y="158.7" width="2.8" height="1.6" fill="#f0f060"/><rect x="427.4" y="159.5" width="2" height="2" fill="#ff0000"/><rect x="428.6" y="160.7" width="2.8" height="1.6" fill="#f0f060"/><rect x="430.6" y="163.5" width="2" height="2" fill="#ff0000"/><rect x="432.2" y="163.5" width="2" height="2" fill="#ff0000"/><path d="M434.7 161.5V163.5" stroke="#f0f060" stroke-width="1.4"/><rect x="433.3" y="160.7" width="2.8" height="1.6" fill="#f0f060"/><path d="M436.3 155.4V163.5" stroke="#0a80f4" stroke-width="1.4"/><rect x="435.3" y="157.4" width="2" height="6" fill="#0a80f4"/><rect x="438.5" y="171.5" width="2" height="4" fill="#0a80f4"/><rect x="440.1" y="177.5" width="2" height="2" fill="#0a80f4"/><path d="M442.6 177.5V185.6" stroke="#0a80f4" stroke-width="1.4"/><rect x="441.6" y="177.5" width="2" height="4" fill="#0a80f4"/><rect x="443.2" y="177.5" width="2" height="6" fill="#ff0000"/><rect x="444.4" y="174.7" width="2.8" height="1.6" fill="#f0f060"/><path d="M447.4 173.5V179.6" stroke="#0a80f4" stroke-width="1.4"/><rect x="446.4" y="173.5" width="2" height="2" fill="#0a80f4"/><rect x="447.9" y="169.5" width="2" height="4" fill="#0a80f4"/><rect x="449.5" y="175.5" width="2" height="4" fill="#0a80f4"/><rect x="451.1" y="175.5" width="2" height="6" fill="#0a80f4"/><rect x="454.3" y="183.6" width="2" height="6" fill="#0a80f4"/><path d="M456.8 191.6V197.6" stroke="#0a80f4" stroke-width="1.4"/><rect x="455.8" y="191.6" width="2" height="4" fill="#0a80f4"/><rect x="457" y="194.8" width="2.8" height="1.6" fill="#f0f060"/><path d="M460 187.6V197.6" stroke="#ff0000" stroke-width="1.4"/><rect x="459" y="191.6" width="2" height="6" fill="#ff0000"/><path d="M461.6 183.6V195.6" stroke="#ff0000" stroke-width="1.4"/><rect x="460.6" y="187.6" width="2" height="6" fill="#ff0000"/><rect x="462.2" y="179.6" width="2" height="4" fill="#ff0000"/><path d="M464.7 177.5V183.6" stroke="#0a80f4" stroke-width="1.4"/><rect x="463.7" y="177.5" width="2" height="4" fill="#0a80f4"/><rect x="465.3" y="183.6" width="2" height="2" fill="#ff0000"/><path d="M467.9 177.5V189.6" stroke="#ff0000" stroke-width="1.4"/><rect x="466.9" y="183.6" width="2" height="6" fill="#ff0000"/><path d="M469.5 171.5V181.6" stroke="#ff0000" stroke-width="1.4"/><rect x="468.5" y="175.5" width="2" height="4" fill="#ff0000"/><rect x="470" y="175.5" width="2" height="2" fill="#ff0000"/><rect x="471.6" y="171.5" width="2" height="4" fill="#0a80f4"/><path d="M474.2 171.5V173.5" stroke="#f0f060" stroke-width="1.4"/><rect x="472.8" y="172.7" width="2.8" height="1.6" fill="#f0f060"/><rect x="474.4" y="176.7" width="2.8" height="1.6" fill="#f0f060"/><rect x="476.4" y="175.5" width="2" height="2" fill="#0a80f4"/><path d="M478.9 173.5V177.5" stroke="#ff0000" stroke-width="1.4"/><rect x="477.9" y="175.5" width="2" height="2" fill="#ff0000"/><rect x="479.5" y="177.5" width="2" height="2" fill="#ff0000"/><rect x="481.1" y="173.5" width="2" height="2" fill="#ff0000"/><rect x="482.7" y="171.5" width="2" height="6" fill="#ff0000"/><path d="M485.2 165.5V169.5" stroke="#0a80f4" stroke-width="1.4"/><rect x="484.2" y="167.5" width="2" height="2" fill="#0a80f4"/><rect x="485.8" y="169.5" width="2" height="4" fill="#0a80f4"/><rect x="487.4" y="175.5" width="2" height="4" fill="#0a80f4"/><path d="M490 173.5V181.6" stroke="#0a80f4" stroke-width="1.4"/><rect x="489" y="175.5" width="2" height="6" fill="#0a80f4"/><rect x="490.6" y="183.6" width="2" height="4" fill="#0a80f4"/><rect x="491.7" y="188.8" width="2.8" height="1.6" fill="#f0f060"/><rect x="493.7" y="185.6" width="2" height="4" fill="#0a80f4"/><rect x="494.9" y="184.8" width="2.8" height="1.6" fill="#f0f060"/><rect x="498.4" y="185.6" width="2" height="4" fill="#0a80f4"/><path d="M501 185.6V191.6" stroke="#0a80f4" stroke-width="1.4"/><rect x="500" y="189.6" width="2" height="2" fill="#0a80f4"/><path d="M502.6 191.6V195.6" stroke="#0a80f4" stroke-width="1.4"/><rect x="501.6" y="191.6" width="2" height="2" fill="#0a80f4"/><rect x="503.2" y="189.6" width="2" height="8" fill="#0a80f4"/><path d="M507.3 203.7V205.7" stroke="#f0f060" stroke-width="1.4"/><rect x="505.9" y="204.9" width="2.8" height="1.6" fill="#f0f060"/><rect x="507.9" y="205.7" width="2" height="2" fill="#0a80f4"/><rect x="509.5" y="203.7" width="2" height="6" fill="#ff0000"/><rect x="511.1" y="197.6" width="2" height="4" fill="#ff0000"/><rect x="512.7" y="193.6" width="2" height="8" fill="#ff0000"/><path d="M515.2 193.6V199.7" stroke="#ff0000" stroke-width="1.4"/><rect x="514.2" y="193.6" width="2" height="4" fill="#ff0000"/><rect x="515.8" y="187.6" width="2" height="2" fill="#0a80f4"/><rect x="517.4" y="191.6" width="2" height="2" fill="#0a80f4"/><rect x="519" y="193.6" width="2" height="2" fill="#0a80f4"/><rect x="522.1" y="193.6" width="2" height="2" fill="#0a80f4"/><rect x="523.7" y="195.6" width="2" height="2" fill="#0a80f4"/><path d="M526.3 195.6V199.7" stroke="#ff0000" stroke-width="1.4"/><rect x="525.3" y="195.6" width="2" height="2" fill="#ff0000"/><rect x="526.9" y="193.6" width="2" height="2" fill="#0a80f4"/><path d="M529.4 191.6V195.6" stroke="#0a80f4" stroke-width="1.4"/><rect x="528.4" y="191.6" width="2" height="2" fill="#0a80f4"/><path d="M531 185.6V191.6" stroke="#0a80f4" stroke-width="1.4"/><rect x="530" y="187.6" width="2" height="4" fill="#0a80f4"/><rect x="531.2" y="190.8" width="2.8" height="1.6" fill="#f0f060"/><rect x="533.2" y="187.6" width="2" height="2" fill="#0a80f4"/><rect x="534.7" y="189.6" width="2" height="2" fill="#ff0000"/><rect x="536.3" y="185.6" width="2" height="2" fill="#0a80f4"/><rect x="537.5" y="188.8" width="2.8" height="1.6" fill="#f0f060"/><rect x="539.5" y="187.6" width="2" height="4" fill="#0a80f4"/><rect x="541.1" y="189.6" width="2" height="2" fill="#0a80f4"/><rect x="542.6" y="195.6" width="2" height="2" fill="#ff0000"/><rect x="544.2" y="195.6" width="2" height="2" fill="#0a80f4"/><path d="M546.8 193.6V199.7" stroke="#0a80f4" stroke-width="1.4"/><rect x="545.8" y="195.6" width="2" height="2" fill="#0a80f4"/><path d="M548.4 197.6V205.7" stroke="#ff0000" stroke-width="1.4"/><rect x="547.4" y="197.6" width="2" height="2" fill="#ff0000"/><rect x="548.5" y="194.8" width="2.8" height="1.6" fill="#f0f060"/><rect x="550.5" y="193.6" width="2" height="2" fill="#0a80f4"/><rect x="552.1" y="193.6" width="2" height="4" fill="#0a80f4"/><rect x="553.7" y="199.7" width="2" height="2" fill="#0a80f4"/><rect x="555.3" y="199.7" width="2" height="2" fill="#ff0000"/><path d="M557.8 195.6V199.7" stroke="#0a80f4" stroke-width="1.4"/><rect x="556.8" y="197.6" width="2" height="2" fill="#0a80f4"/><rect x="558.4" y="197.6" width="2" height="4" fill="#0a80f4"/><rect x="560" y="199.7" width="2" height="8" fill="#0a80f4"/><path d="M562.6 195.6V209.7" stroke="#0a80f4" stroke-width="1.4"/><rect x="561.6" y="195.6" width="2" height="12.1" fill="#0a80f4"/><rect x="563.2" y="207.7" width="2" height="8" fill="#0a80f4"/><path d="M565.7 213.7V219.8" stroke="#0a80f4" stroke-width="1.4"/><rect x="564.7" y="215.7" width="2" height="4" fill="#0a80f4"/><path d="M567.3 219.8V225.8" stroke="#0a80f4" stroke-width="1.4"/><rect x="566.3" y="221.8" width="2" height="4" fill="#0a80f4"/><path d="M568.9 225.8V229.8" stroke="#f0f060" stroke-width="1.4"/><rect x="567.5" y="227" width="2.8" height="1.6" fill="#f0f060"/><rect x="569.1" y="225" width="2.8" height="1.6" fill="#f0f060"/><path d="M572 225.8V231.8" stroke="#ff0000" stroke-width="1.4"/><rect x="571" y="225.8" width="2" height="4" fill="#ff0000"/><rect x="572.6" y="223.8" width="2" height="2" fill="#ff0000"/><path d="M575.2 219.8V221.8" stroke="#f0f060" stroke-width="1.4"/><rect x="573.8" y="221" width="2.8" height="1.6" fill="#f0f060"/><rect x="575.8" y="219.8" width="2" height="4" fill="#0a80f4"/><rect x="577.4" y="223.8" width="2" height="2" fill="#0a80f4"/><rect x="578.5" y="225" width="2.8" height="1.6" fill="#f0f060"/><path d="M581.5 217.7V229.8" stroke="#0a80f4" stroke-width="1.4"/><rect x="580.5" y="219.8" width="2" height="6" fill="#0a80f4"/><path d="M583.1 215.7V229.8" stroke="#0a80f4" stroke-width="1.4"/><rect x="582.1" y="223.8" width="2" height="6" fill="#0a80f4"/><path d="M584.7 223.8V233.8" stroke="#0a80f4" stroke-width="1.4"/><rect x="583.7" y="227.8" width="2" height="6" fill="#0a80f4"/><rect x="585.2" y="233.8" width="2" height="2" fill="#ff0000"/><path d="M587.8 235.8V237.8" stroke="#f0f060" stroke-width="1.4"/><rect x="586.4" y="235" width="2.8" height="1.6" fill="#f0f060"/><rect x="588.4" y="235.8" width="2" height="2" fill="#0a80f4"/><rect x="590" y="237.8" width="2" height="2" fill="#0a80f4"/><rect x="591.2" y="241.1" width="2.8" height="1.6" fill="#f0f060"/><rect x="593.1" y="245.9" width="2" height="2" fill="#ff0000"/><path d="M595.7 239.9V243.9" stroke="#ff0000" stroke-width="1.4"/><rect x="594.7" y="239.9" width="2" height="2" fill="#ff0000"/><rect x="595.9" y="239.1" width="2.8" height="1.6" fill="#f0f060"/><rect x="597.9" y="237.8" width="2" height="2" fill="#ff0000"/><path d="M600.4 233.8V235.8" stroke="#f0f060" stroke-width="1.4"/><rect x="599" y="233" width="2.8" height="1.6" fill="#f0f060"/><rect x="600.6" y="233" width="2.8" height="1.6" fill="#f0f060"/><rect x="603.8" y="235" width="2.8" height="1.6" fill="#f0f060"/><rect x="605.8" y="233.8" width="2" height="2" fill="#0a80f4"/><rect x="606.9" y="233" width="2.8" height="1.6" fill="#f0f060"/><rect x="608.9" y="233.8" width="2" height="2" fill="#ff0000"/><path d="M613.1 233.8V235.8" stroke="#f0f060" stroke-width="1.4"/><rect x="611.7" y="235" width="2.8" height="1.6" fill="#f0f060"/><path d="M614.7 229.8V239.9" stroke="#0a80f4" stroke-width="1.4"/><rect x="613.7" y="231.8" width="2" height="2" fill="#0a80f4"/><rect x="615.2" y="229.8" width="2" height="2" fill="#0a80f4"/><rect x="616.8" y="225.8" width="2" height="6" fill="#0a80f4"/><path d="M619.4 235.8V245.9" stroke="#0a80f4" stroke-width="1.4"/><rect x="618.4" y="235.8" width="2" height="6" fill="#0a80f4"/><rect x="620" y="243.9" width="2" height="4" fill="#0a80f4"/><path d="M622.5 241.9V249.9" stroke="#0a80f4" stroke-width="1.4"/><rect x="621.5" y="243.9" width="2" height="4" fill="#0a80f4"/><rect x="623.1" y="247.9" width="2" height="4" fill="#0a80f4"/><path d="M625.7 247.9V255.9" stroke="#0a80f4" stroke-width="1.4"/><rect x="624.7" y="247.9" width="2" height="6" fill="#0a80f4"/><rect x="625.9" y="253.1" width="2.8" height="1.6" fill="#f0f060"/><rect x="627.9" y="251.9" width="2" height="2" fill="#0a80f4"/><path d="M630.4 253.9V257.9" stroke="#ff0000" stroke-width="1.4"/><rect x="629.4" y="253.9" width="2" height="2" fill="#ff0000"/><path d="M632 251.9V257.9" stroke="#ff0000" stroke-width="1.4"/><rect x="631" y="253.9" width="2" height="2" fill="#ff0000"/><rect x="633.8" y="255.1" width="2.8" height="1.6" fill="#f0f060"/><rect x="635.7" y="257.9" width="2" height="2" fill="#0a80f4"/><rect x="637.3" y="260" width="2" height="2" fill="#0a80f4"/><rect x="638.9" y="262" width="2" height="4" fill="#0a80f4"/><rect x="640.5" y="266" width="2" height="4" fill="#0a80f4"/><rect x="642.1" y="266" width="2" height="6" fill="#0a80f4"/><rect x="643.6" y="270" width="2" height="6" fill="#0a80f4"/><rect x="645.2" y="280.1" width="2" height="4" fill="#ff0000"/><rect x="646.4" y="279.2" width="2.8" height="1.6" fill="#f0f060"/><rect x="648" y="279.2" width="2.8" height="1.6" fill="#f0f060"/><rect x="649.6" y="279.2" width="2.8" height="1.6" fill="#f0f060"/><rect x="651.5" y="280.1" width="2" height="2" fill="#ff0000"/><path d="M654.1 278V286.1" stroke="#ff0000" stroke-width="1.4"/><rect x="653.1" y="280.1" width="2" height="2" fill="#ff0000"/><rect x="654.7" y="278" width="2" height="2" fill="#ff0000"/><rect x="656.3" y="274" width="2" height="2" fill="#0a80f4"/><rect x="657.8" y="270" width="2" height="8" fill="#0a80f4"/><path d="M660.4 278V282.1" stroke="#ff0000" stroke-width="1.4"/><rect x="659.4" y="278" width="2" height="2" fill="#ff0000"/><rect x="661" y="274" width="2" height="4" fill="#ff0000"/><rect x="662.6" y="270" width="2" height="10.1" fill="#ff0000"/><rect x="663.8" y="267.2" width="2.8" height="1.6" fill="#f0f060"/><rect x="665.7" y="264" width="2" height="8" fill="#0a80f4"/><rect x="667.3" y="270" width="2" height="4" fill="#0a80f4"/><path d="M669.9 274V280.1" stroke="#0a80f4" stroke-width="1.4"/><rect x="668.9" y="274" width="2" height="2" fill="#0a80f4"/><path d="M671.5 274V278" stroke="#0a80f4" stroke-width="1.4"/><rect x="670.5" y="276" width="2" height="2" fill="#0a80f4"/><rect x="672" y="272" width="2" height="8" fill="#0a80f4"/><rect x="673.6" y="282.1" width="2" height="2" fill="#0a80f4"/><rect x="675.2" y="280.1" width="2" height="8" fill="#ff0000"/><path d="M677.8 274V276" stroke="#f0f060" stroke-width="1.4"/><rect x="676.4" y="273.2" width="2.8" height="1.6" fill="#f0f060"/><path d="M679.4 272V280.1" stroke="#0a80f4" stroke-width="1.4"/><rect x="678.4" y="274" width="2" height="6" fill="#0a80f4"/><rect x="679.9" y="280.1" width="2" height="2" fill="#ff0000"/><rect x="681.5" y="278" width="2" height="2" fill="#ff0000"/><path d="M684.1 272V278" stroke="#ff0000" stroke-width="1.4"/><rect x="683.1" y="274" width="2" height="4" fill="#ff0000"/><path d="M685.7 272V282.1" stroke="#ff0000" stroke-width="1.4"/><rect x="684.7" y="272" width="2" height="6" fill="#ff0000"/><rect x="686.2" y="266" width="2" height="2" fill="#0a80f4"/><rect x="687.8" y="266" width="2" height="4" fill="#ff0000"/><rect x="689.4" y="262" width="2" height="4" fill="#ff0000"/><path d="M692 257.9V260" stroke="#f0f060" stroke-width="1.4"/><rect x="690.6" y="257.1" width="2.8" height="1.6" fill="#f0f060"/><rect x="692.6" y="255.9" width="2" height="2" fill="#0a80f4"/><path d="M695.1 260V264" stroke="#ff0000" stroke-width="1.4"/><rect x="694.1" y="260" width="2" height="2" fill="#ff0000"/><rect x="695.7" y="262" width="2" height="2" fill="#ff0000"/><rect x="697.3" y="251.9" width="2" height="8" fill="#ff0000"/><rect x="698.9" y="245.9" width="2" height="8" fill="#ff0000"/><rect x="701.6" y="233" width="2.8" height="1.6" fill="#f0f060"/><rect x="703.2" y="233" width="2.8" height="1.6" fill="#f0f060"/><rect x="705.2" y="233.8" width="2" height="2" fill="#0a80f4"/><path d="M707.8 233.8V237.8" stroke="#0a80f4" stroke-width="1.4"/><rect x="706.8" y="233.8" width="2" height="2" fill="#0a80f4"/><rect x="708.3" y="237.8" width="2" height="2" fill="#ff0000"/><rect x="709.9" y="239.9" width="2" height="4" fill="#ff0000"/><path d="M714.1 231.8V235.8" stroke="#0a80f4" stroke-width="1.4"/><rect x="713.1" y="233.8" width="2" height="2" fill="#0a80f4"/><path d="M715.7 229.8V235.8" stroke="#ff0000" stroke-width="1.4"/><rect x="714.7" y="233.8" width="2" height="2" fill="#ff0000"/><path d="M717.2 231.8V235.8" stroke="#ff0000" stroke-width="1.4"/><rect x="716.2" y="233.8" width="2" height="2" fill="#ff0000"/><path d="M718.8 227.8V231.8" stroke="#ff0000" stroke-width="1.4"/><rect x="717.8" y="229.8" width="2" height="2" fill="#ff0000"/><path d="M720.4 227.8V235.8" stroke="#ff0000" stroke-width="1.4"/><rect x="719.4" y="227.8" width="2" height="6" fill="#ff0000"/><rect x="721" y="223.8" width="2" height="4" fill="#ff0000"/><path d="M723.5 217.7V221.8" stroke="#0a80f4" stroke-width="1.4"/><rect x="722.5" y="217.7" width="2" height="2" fill="#0a80f4"/><path d="M725.1 215.7V225.8" stroke="#0a80f4" stroke-width="1.4"/><rect x="724.1" y="215.7" width="2" height="8" fill="#0a80f4"/><path d="M726.7 225.8V229.8" stroke="#0a80f4" stroke-width="1.4"/><rect x="725.7" y="225.8" width="2" height="2" fill="#0a80f4"/><path d="M728.3 225.8V229.8" stroke="#ff0000" stroke-width="1.4"/><rect x="727.3" y="227.8" width="2" height="2" fill="#ff0000"/><path d="M729.9 221.8V227.8" stroke="#0a80f4" stroke-width="1.4"/><rect x="728.9" y="225.8" width="2" height="2" fill="#0a80f4"/><rect x="732" y="225.8" width="2" height="4" fill="#ff0000"/><rect x="735.2" y="223.8" width="2" height="2" fill="#ff0000"/><path d="M737.7 211.7V225.8" stroke="#0a80f4" stroke-width="1.4"/><rect x="736.7" y="213.7" width="2" height="8" fill="#0a80f4"/><rect x="738.3" y="211.7" width="2" height="18.1" fill="#0a80f4"/><path d="M740.9 237.8V243.9" stroke="#0a80f4" stroke-width="1.4"/><rect x="739.9" y="237.8" width="2" height="4" fill="#0a80f4"/><rect x="741.5" y="237.8" width="2" height="2" fill="#ff0000"/><rect x="743.1" y="233.8" width="2" height="4" fill="#ff0000"/><rect x="744.6" y="233.8" width="2" height="4" fill="#ff0000"/><rect x="745.8" y="229" width="2.8" height="1.6" fill="#f0f060"/><path d="M748.8 223.8V227.8" stroke="#0a80f4" stroke-width="1.4"/><rect x="747.8" y="225.8" width="2" height="2" fill="#0a80f4"/><path d="M750.4 227.8V231.8" stroke="#0a80f4" stroke-width="1.4"/><rect x="749.4" y="227.8" width="2" height="2" fill="#0a80f4"/><path d="M752 225.8V231.8" stroke="#0a80f4" stroke-width="1.4"/><rect x="751" y="225.8" width="2" height="4" fill="#0a80f4"/><path d="M753.5 225.8V235.8" stroke="#0a80f4" stroke-width="1.4"/><rect x="752.5" y="227.8" width="2" height="6" fill="#0a80f4"/><rect x="754.1" y="229.8" width="2" height="10.1" fill="#0a80f4"/><path d="M756.7 233.8V245.9" stroke="#0a80f4" stroke-width="1.4"/><rect x="755.7" y="235.8" width="2" height="10" fill="#0a80f4"/><rect x="756.9" y="249.1" width="2.8" height="1.6" fill="#f0f060"/><path d="M759.8 241.9V255.9" stroke="#ff0000" stroke-width="1.4"/><rect x="758.8" y="241.9" width="2" height="8" fill="#ff0000"/><rect x="760.4" y="235.8" width="2" height="4" fill="#ff0000"/><path d="M763 237.8V239.9" stroke="#f0f060" stroke-width="1.4"/><rect x="761.6" y="237" width="2.8" height="1.6" fill="#f0f060"/><rect x="763.6" y="239.9" width="2" height="2" fill="#ff0000"/><rect x="765.2" y="231.8" width="2" height="8" fill="#ff0000"/><rect x="768.3" y="223.8" width="2" height="6" fill="#ff0000"/><rect x="769.9" y="221.8" width="2" height="2" fill="#ff0000"/><path d="M772.5 215.7V229.8" stroke="#ff0000" stroke-width="1.4"/><rect x="771.5" y="217.7" width="2" height="6" fill="#ff0000"/><rect x="773" y="213.7" width="2" height="6" fill="#ff0000"/><rect x="774.6" y="209.7" width="2" height="10.1" fill="#ff0000"/><path d="M777.2 197.6V209.7" stroke="#ff0000" stroke-width="1.4"/><rect x="776.2" y="201.7" width="2" height="8" fill="#ff0000"/><rect x="777.8" y="193.6" width="2" height="12.1" fill="#ff0000"/><rect x="779.4" y="187.6" width="2" height="4" fill="#ff0000"/><rect x="780.5" y="182.8" width="2.8" height="1.6" fill="#f0f060"/><path d="M783.5 183.6V187.6" stroke="#f0f060" stroke-width="1.4"/><rect x="782.1" y="184.8" width="2.8" height="1.6" fill="#f0f060"/><rect x="784.1" y="185.6" width="2" height="2" fill="#ff0000"/><rect x="785.7" y="181.6" width="2" height="2" fill="#0a80f4"/><path d="M788.2 181.6V183.6" stroke="#f0f060" stroke-width="1.4"/><rect x="786.8" y="182.8" width="2.8" height="1.6" fill="#f0f060"/><rect x="788.8" y="181.6" width="2" height="2" fill="#ff0000"/><rect x="790.4" y="179.6" width="2" height="4" fill="#ff0000"/><path d="M793 175.5V187.6" stroke="#ff0000" stroke-width="1.4"/><rect x="792" y="177.5" width="2" height="10.1" fill="#ff0000"/><rect x="793.6" y="171.5" width="2" height="4" fill="#ff0000"/><rect x="795.1" y="169.5" width="2" height="4" fill="#ff0000"/><rect x="796.7" y="163.5" width="2" height="4" fill="#0a80f4"/><rect x="798.3" y="161.5" width="2" height="12.1" fill="#0a80f4"/><path d="M800.9 171.5V183.6" stroke="#0a80f4" stroke-width="1.4"/><rect x="799.9" y="173.5" width="2" height="10" fill="#0a80f4"/><path d="M802.5 183.6V193.6" stroke="#0a80f4" stroke-width="1.4"/><rect x="801.5" y="185.6" width="2" height="6" fill="#0a80f4"/><rect x="803" y="185.6" width="2" height="6" fill="#0a80f4"/><path d="M805.6 191.6V195.6" stroke="#0a80f4" stroke-width="1.4"/><rect x="804.6" y="193.6" width="2" height="2" fill="#0a80f4"/><rect x="806.2" y="195.6" width="2" height="2" fill="#0a80f4"/><rect x="807.8" y="195.6" width="2" height="6" fill="#0a80f4"/><rect x="809.3" y="195.6" width="2" height="6" fill="#0a80f4"/><rect x="810.9" y="203.7" width="2" height="2" fill="#0a80f4"/><rect x="812.5" y="199.7" width="2" height="4" fill="#ff0000"/><rect x="813.7" y="198.9" width="2.8" height="1.6" fill="#f0f060"/><rect x="815.3" y="198.9" width="2.8" height="1.6" fill="#f0f060"/><rect x="816.8" y="198.9" width="2.8" height="1.6" fill="#f0f060"/><rect x="820.4" y="203.7" width="2" height="2" fill="#0a80f4"/><path d="M823 203.7V209.7" stroke="#ff0000" stroke-width="1.4"/><rect x="822" y="203.7" width="2" height="4" fill="#ff0000"/><rect x="823.5" y="199.7" width="2" height="4" fill="#0a80f4"/><path d="M827.7 199.7V205.7" stroke="#ff0000" stroke-width="1.4"/><rect x="826.7" y="201.7" width="2" height="2" fill="#ff0000"/><rect x="828.3" y="203.7" width="2" height="2" fill="#ff0000"/><path d="M830.9 203.7V209.7" stroke="#ff0000" stroke-width="1.4"/><rect x="829.9" y="203.7" width="2" height="4" fill="#ff0000"/><rect x="831.4" y="203.7" width="2" height="2" fill="#0a80f4"/><rect x="833" y="203.7" width="2" height="4" fill="#0a80f4"/><rect x="834.6" y="209.7" width="2" height="2" fill="#0a80f4"/><rect x="835.8" y="212.9" width="2.8" height="1.6" fill="#f0f060"/><rect x="837.7" y="211.7" width="2" height="2" fill="#ff0000"/><path d="M840.3 211.7V213.7" stroke="#f0f060" stroke-width="1.4"/><rect x="838.9" y="210.9" width="2.8" height="1.6" fill="#f0f060"/><rect x="840.5" y="210.9" width="2.8" height="1.6" fill="#f0f060"/><path d="M843.5 207.7V211.7" stroke="#ff0000" stroke-width="1.4"/><rect x="842.5" y="209.7" width="2" height="2" fill="#ff0000"/><path d="M845.1 203.7V211.7" stroke="#ff0000" stroke-width="1.4"/><rect x="844.1" y="209.7" width="2" height="2" fill="#ff0000"/><rect x="845.6" y="207.7" width="2" height="2" fill="#0a80f4"/><rect x="848.8" y="211.7" width="2" height="4" fill="#0a80f4"/><rect x="850" y="214.9" width="2.8" height="1.6" fill="#f0f060"/><rect x="852" y="213.7" width="2" height="2" fill="#0a80f4"/><rect x="853.5" y="215.7" width="2" height="2" fill="#0a80f4"/><rect x="855.1" y="219.8" width="2" height="4" fill="#ff0000"/><path d="M857.7 209.7V221.8" stroke="#ff0000" stroke-width="1.4"/><rect x="856.7" y="209.7" width="2" height="10.1" fill="#ff0000"/><path d="M859.3 203.7V207.7" stroke="#ff0000" stroke-width="1.4"/><rect x="858.3" y="205.7" width="2" height="2" fill="#ff0000"/><path d="M860.8 207.7V209.7" stroke="#f0f060" stroke-width="1.4"/><rect x="859.4" y="206.9" width="2.8" height="1.6" fill="#f0f060"/><rect x="861.4" y="203.7" width="2" height="4" fill="#0a80f4"/><path d="M864 211.7V215.7" stroke="#0a80f4" stroke-width="1.4"/><rect x="863" y="211.7" width="2" height="2" fill="#0a80f4"/><rect x="864.6" y="211.7" width="2" height="4" fill="#ff0000"/><rect x="866.2" y="207.7" width="2" height="6" fill="#ff0000"/><rect x="867.7" y="205.7" width="2" height="4" fill="#ff0000"/><rect x="870.5" y="204.9" width="2.8" height="1.6" fill="#f0f060"/><rect x="872.5" y="207.7" width="2" height="2" fill="#ff0000"/><rect x="874" y="207.7" width="2" height="2" fill="#ff0000"/><rect x="875.2" y="204.9" width="2.8" height="1.6" fill="#f0f060"/><rect x="876.8" y="208.9" width="2.8" height="1.6" fill="#f0f060"/><rect x="878.8" y="207.7" width="2" height="2" fill="#0a80f4"/><rect x="880" y="210.9" width="2.8" height="1.6" fill="#f0f060"/><rect x="881.9" y="205.7" width="2" height="6" fill="#0a80f4"/><path d="M884.5 211.7V215.7" stroke="#f0f060" stroke-width="1.4"/><rect x="883.1" y="212.9" width="2.8" height="1.6" fill="#f0f060"/><path d="M886.1 211.7V219.8" stroke="#ff0000" stroke-width="1.4"/><rect x="885.1" y="211.7" width="2" height="4" fill="#ff0000"/><rect x="886.7" y="209.7" width="2" height="2" fill="#ff0000"/><rect x="887.9" y="206.9" width="2.8" height="1.6" fill="#f0f060"/><rect x="889.8" y="211.7" width="2" height="2" fill="#ff0000"/><path d="M892.4 209.7V215.7" stroke="#ff0000" stroke-width="1.4"/><rect x="891.4" y="211.7" width="2" height="4" fill="#ff0000"/><rect x="893" y="205.7" width="2" height="8" fill="#0a80f4"/><rect x="894.2" y="212.9" width="2.8" height="1.6" fill="#f0f060"/><rect x="896.1" y="213.7" width="2" height="2" fill="#ff0000"/><rect x="897.7" y="211.7" width="2" height="6" fill="#ff0000"/><rect x="900.9" y="203.7" width="2" height="6" fill="#ff0000"/><rect x="902.5" y="203.7" width="2" height="2" fill="#ff0000"/><path d="M905 197.6V199.7" stroke="#f0f060" stroke-width="1.4"/><rect x="903.6" y="198.9" width="2.8" height="1.6" fill="#f0f060"/><path d="M906.6 193.6V197.6" stroke="#0a80f4" stroke-width="1.4"/><rect x="905.6" y="195.6" width="2" height="2" fill="#0a80f4"/><path d="M908.2 197.6V199.7" stroke="#f0f060" stroke-width="1.4"/><rect x="906.8" y="198.9" width="2.8" height="1.6" fill="#f0f060"/><rect x="908.8" y="199.7" width="2" height="2" fill="#ff0000"/><path d="M911.3 195.6V201.7" stroke="#ff0000" stroke-width="1.4"/><rect x="910.3" y="197.6" width="2" height="2" fill="#ff0000"/><path d="M912.9 191.6V195.6" stroke="#ff0000" stroke-width="1.4"/><rect x="911.9" y="193.6" width="2" height="2" fill="#ff0000"/><rect x="913.5" y="191.6" width="2" height="2" fill="#ff0000"/><rect x="914.7" y="186.8" width="2.8" height="1.6" fill="#f0f060"/><rect x="916.7" y="187.6" width="2" height="4" fill="#ff0000"/><rect x="918.2" y="187.6" width="2" height="4" fill="#ff0000"/><rect x="919.8" y="181.6" width="2" height="2" fill="#ff0000"/><rect x="921.4" y="177.5" width="2" height="4" fill="#0a80f4"/><rect x="923" y="185.6" width="2" height="6" fill="#0a80f4"/><path d="M925.5 191.6V195.6" stroke="#ff0000" stroke-width="1.4"/><rect x="924.5" y="193.6" width="2" height="2" fill="#ff0000"/><rect x="926.1" y="187.6" width="2" height="8" fill="#ff0000"/><rect x="927.7" y="183.6" width="2" height="4" fill="#ff0000"/><rect x="928.9" y="184.8" width="2.8" height="1.6" fill="#f0f060"/><rect x="930.9" y="187.6" width="2" height="2" fill="#ff0000"/><rect x="932.4" y="177.5" width="2" height="6" fill="#0a80f4"/><rect x="934" y="183.6" width="2" height="4" fill="#ff0000"/><rect x="935.6" y="179.6" width="2" height="4" fill="#ff0000"/><path d="M938.2 175.5V179.6" stroke="#f0f060" stroke-width="1.4"/><rect x="936.8" y="178.8" width="2.8" height="1.6" fill="#f0f060"/><rect x="938.8" y="177.5" width="2" height="2" fill="#0a80f4"/><path d="M941.3 177.5V185.6" stroke="#ff0000" stroke-width="1.4"/><rect x="940.3" y="179.6" width="2" height="2" fill="#ff0000"/><rect x="941.9" y="177.5" width="2" height="2" fill="#0a80f4"/><path d="M944.5 177.5V183.6" stroke="#ff0000" stroke-width="1.4"/><rect x="943.5" y="179.6" width="2" height="2" fill="#ff0000"/><rect x="945.1" y="179.6" width="2" height="2" fill="#ff0000"/><rect x="946.2" y="176.7" width="2.8" height="1.6" fill="#f0f060"/><path d="M949.2 177.5V183.6" stroke="#ff0000" stroke-width="1.4"/><rect x="948.2" y="177.5" width="2" height="2" fill="#ff0000"/><rect x="949.4" y="178.8" width="2.8" height="1.6" fill="#f0f060"/><rect x="951.4" y="177.5" width="2" height="4" fill="#0a80f4"/><path d="M954 173.5V183.6" stroke="#0a80f4" stroke-width="1.4"/><rect x="953" y="175.5" width="2" height="8" fill="#0a80f4"/><path d="M955.5 185.6V191.6" stroke="#0a80f4" stroke-width="1.4"/><rect x="954.5" y="185.6" width="2" height="4" fill="#0a80f4"/><rect x="956.1" y="185.6" width="2" height="4" fill="#0a80f4"/><path d="M958.7 189.6V195.6" stroke="#0a80f4" stroke-width="1.4"/><rect x="957.7" y="191.6" width="2" height="2" fill="#0a80f4"/><rect x="959.3" y="191.6" width="2" height="2" fill="#0a80f4"/><rect x="960.8" y="195.6" width="2" height="2" fill="#0a80f4"/><rect x="962.4" y="191.6" width="2" height="6" fill="#0a80f4"/><rect x="964" y="199.7" width="2" height="2" fill="#ff0000"/><rect x="965.6" y="195.6" width="2" height="2" fill="#0a80f4"/><rect x="968.7" y="199.7" width="2" height="4" fill="#0a80f4"/><rect x="969.9" y="206.9" width="2.8" height="1.6" fill="#f0f060"/><path d="M972.9 205.7V209.7" stroke="#ff0000" stroke-width="1.4"/><rect x="971.9" y="205.7" width="2" height="2" fill="#ff0000"/><rect x="973.5" y="205.7" width="2" height="2" fill="#0a80f4"/><path d="M976 207.7V209.7" stroke="#f0f060" stroke-width="1.4"/><rect x="974.6" y="208.9" width="2.8" height="1.6" fill="#f0f060"/><path d="M977.6 203.7V207.7" stroke="#0a80f4" stroke-width="1.4"/><rect x="976.6" y="205.7" width="2" height="2" fill="#0a80f4"/><path d="M979.2 211.7V217.7" stroke="#ff0000" stroke-width="1.4"/><rect x="978.2" y="211.7" width="2" height="2" fill="#ff0000"/><path d="M980.8 209.7V211.7" stroke="#f0f060" stroke-width="1.4"/><rect x="979.4" y="210.9" width="2.8" height="1.6" fill="#f0f060"/><rect x="981" y="212.9" width="2.8" height="1.6" fill="#f0f060"/><path d="M983.9 215.7V219.8" stroke="#0a80f4" stroke-width="1.4"/><rect x="982.9" y="215.7" width="2" height="2" fill="#0a80f4"/><path d="M985.5 213.7V219.8" stroke="#0a80f4" stroke-width="1.4"/><rect x="984.5" y="215.7" width="2" height="2" fill="#0a80f4"/><path d="M987.1 215.7V217.7" stroke="#f0f060" stroke-width="1.4"/><rect x="985.7" y="214.9" width="2.8" height="1.6" fill="#f0f060"/><rect x="987.3" y="214.9" width="2.8" height="1.6" fill="#f0f060"/><rect x="989.3" y="213.7" width="2" height="2" fill="#ff0000"/><rect x="990.8" y="213.7" width="2" height="2" fill="#ff0000"/><rect x="992.4" y="209.7" width="2" height="2" fill="#ff0000"/><path d="M995 211.7V217.7" stroke="#0a80f4" stroke-width="1.4"/><rect x="994" y="211.7" width="2" height="4" fill="#0a80f4"/><path d="M996.6 213.7V223.8" stroke="#0a80f4" stroke-width="1.4"/><rect x="995.6" y="213.7" width="2" height="6" fill="#0a80f4"/><path d="M998.1 219.8V225.8" stroke="#0a80f4" stroke-width="1.4"/><rect x="997.1" y="219.8" width="2" height="4" fill="#0a80f4"/><path d="M999.7 223.8V227.8" stroke="#0a80f4" stroke-width="1.4"/><rect x="998.7" y="225.8" width="2" height="2" fill="#0a80f4"/><rect x="1000.3" y="225.8" width="2" height="2" fill="#0a80f4"/><rect x="1001.9" y="227.8" width="2" height="2" fill="#ff0000"/><path d="M1006 227.8V231.8" stroke="#ff0000" stroke-width="1.4"/><rect x="1005" y="227.8" width="2" height="2" fill="#ff0000"/><rect x="1006.6" y="225.8" width="2" height="2" fill="#0a80f4"/><path d="M1009.2 223.8V227.8" stroke="#ff0000" stroke-width="1.4"/><rect x="1008.2" y="225.8" width="2" height="2" fill="#ff0000"/><path d="M1010.8 223.8V229.8" stroke="#ff0000" stroke-width="1.4"/><rect x="1009.8" y="223.8" width="2" height="4" fill="#ff0000"/><path d="M1012.3 217.7V221.8" stroke="#ff0000" stroke-width="1.4"/><rect x="1011.3" y="219.8" width="2" height="2" fill="#ff0000"/><rect x="1012.5" y="219" width="2.8" height="1.6" fill="#f0f060"/><rect x="1014.5" y="213.7" width="2" height="2" fill="#0a80f4"/><rect x="1015.7" y="219" width="2.8" height="1.6" fill="#f0f060"/><rect x="1017.7" y="219.8" width="2" height="2" fill="#0a80f4"/><path d="M1020.2 217.7V221.8" stroke="#0a80f4" stroke-width="1.4"/><rect x="1019.2" y="217.7" width="2" height="2" fill="#0a80f4"/><rect x="1020.8" y="217.7" width="2" height="2" fill="#0a80f4"/><rect x="1022.4" y="221.8" width="2" height="2" fill="#ff0000"/><path d="M1025 213.7V219.8" stroke="#0a80f4" stroke-width="1.4"/><rect x="1024" y="217.7" width="2" height="2" fill="#0a80f4"/><rect x="1025.5" y="219.8" width="2" height="2" fill="#ff0000"/><rect x="1026.7" y="219" width="2.8" height="1.6" fill="#f0f060"/><rect x="1028.7" y="221.8" width="2" height="2" fill="#ff0000"/><rect x="1030.3" y="217.7" width="2" height="6" fill="#ff0000"/><rect x="1031.9" y="211.7" width="2" height="4" fill="#ff0000"/><path d="M1034.4 207.7V211.7" stroke="#0a80f4" stroke-width="1.4"/><rect x="1033.4" y="207.7" width="2" height="2" fill="#0a80f4"/><path d="M1036 209.7V213.7" stroke="#ff0000" stroke-width="1.4"/><rect x="1035" y="209.7" width="2" height="2" fill="#ff0000"/><rect x="1036.6" y="207.7" width="2" height="2" fill="#0a80f4"/><rect x="1037.8" y="208.9" width="2.8" height="1.6" fill="#f0f060"/><rect x="1039.8" y="211.7" width="2" height="2" fill="#ff0000"/><rect x="1041.3" y="213.7" width="2" height="2" fill="#ff0000"/><path d="M1043.9 205.7V213.7" stroke="#ff0000" stroke-width="1.4"/><rect x="1042.9" y="211.7" width="2" height="2" fill="#ff0000"/><path d="M1045.5 207.7V213.7" stroke="#ff0000" stroke-width="1.4"/><rect x="1044.5" y="209.7" width="2" height="4" fill="#ff0000"/><rect x="1046.1" y="207.7" width="2" height="4" fill="#ff0000"/><rect x="1047.6" y="203.7" width="2" height="2" fill="#0a80f4"/><rect x="1049.2" y="201.7" width="2" height="2" fill="#ff0000"/><rect x="1050.8" y="203.7" width="2" height="2" fill="#ff0000"/><rect x="1052" y="200.9" width="2.8" height="1.6" fill="#f0f060"/><rect x="1054" y="201.7" width="2" height="2" fill="#0a80f4"/><rect x="1055.5" y="201.7" width="2" height="2" fill="#0a80f4"/><rect x="1056.7" y="202.9" width="2.8" height="1.6" fill="#f0f060"/><path d="M1059.7 203.7V205.7" stroke="#f0f060" stroke-width="1.4"/><rect x="1058.3" y="204.9" width="2.8" height="1.6" fill="#f0f060"/><rect x="1060.3" y="203.7" width="2" height="2" fill="#ff0000"/><path d="M1062.8 197.6V205.7" stroke="#0a80f4" stroke-width="1.4"/><rect x="1061.8" y="199.7" width="2" height="4" fill="#0a80f4"/><rect x="1063.4" y="205.7" width="2" height="2" fill="#ff0000"/><rect x="1064.6" y="202.9" width="2.8" height="1.6" fill="#f0f060"/><rect x="1066.6" y="201.7" width="2" height="2" fill="#ff0000"/><rect x="1067.8" y="196.8" width="2.8" height="1.6" fill="#f0f060"/><path d="M1070.7 193.6V199.7" stroke="#0a80f4" stroke-width="1.4"/><rect x="1069.7" y="193.6" width="2" height="2" fill="#0a80f4"/><rect x="1072.9" y="193.6" width="2" height="2" fill="#0a80f4"/><rect x="1074.5" y="195.6" width="2" height="2" fill="#ff0000"/><rect x="1075.7" y="192.8" width="2.8" height="1.6" fill="#f0f060"/><path d="M1080.2 185.6V191.6" stroke="#ff0000" stroke-width="1.4"/><rect x="1079.2" y="187.6" width="2" height="2" fill="#ff0000"/><rect x="1080.8" y="185.6" width="2" height="2" fill="#0a80f4"/><rect x="1082.4" y="191.6" width="2" height="2" fill="#ff0000"/><path d="M1084.9 189.6V195.6" stroke="#0a80f4" stroke-width="1.4"/><rect x="1083.9" y="191.6" width="2" height="2" fill="#0a80f4"/><rect x="1085.5" y="195.6" width="2" height="6" fill="#ff0000"/><rect x="1087.1" y="193.6" width="2" height="2" fill="#0a80f4"/><rect x="1088.7" y="195.6" width="2" height="4" fill="#0a80f4"/><rect x="1090.3" y="197.6" width="2" height="4" fill="#0a80f4"/><rect x="1091.8" y="199.7" width="2" height="4" fill="#0a80f4"/><rect x="1093.4" y="205.7" width="2" height="2" fill="#ff0000"/><rect x="1094.6" y="204.9" width="2.8" height="1.6" fill="#f0f060"/><rect x="1096.2" y="200.9" width="2.8" height="1.6" fill="#f0f060"/><rect x="1098.1" y="201.7" width="2" height="2" fill="#0a80f4"/><path d="M1100.7 207.7V215.7" stroke="#ff0000" stroke-width="1.4"/><rect x="1099.7" y="207.7" width="2" height="6" fill="#ff0000"/><rect x="1101.3" y="207.7" width="2" height="4" fill="#0a80f4"/><rect x="1102.9" y="203.7" width="2" height="8" fill="#0a80f4"/><rect x="1106" y="213.7" width="2" height="4" fill="#0a80f4"/><path d="M1108.6 217.7V223.8" stroke="#0a80f4" stroke-width="1.4"/><rect x="1107.6" y="219.8" width="2" height="2" fill="#0a80f4"/><path d="M1110.2 219.8V225.8" stroke="#0a80f4" stroke-width="1.4"/><rect x="1109.2" y="219.8" width="2" height="4" fill="#0a80f4"/><path d="M1111.8 219.8V227.8" stroke="#0a80f4" stroke-width="1.4"/><rect x="1110.8" y="221.8" width="2" height="6" fill="#0a80f4"/><rect x="1112.3" y="223.8" width="2" height="10" fill="#0a80f4"/><path d="M1114.9 233.8V239.9" stroke="#0a80f4" stroke-width="1.4"/><rect x="1113.9" y="235.8" width="2" height="4" fill="#0a80f4"/><rect x="1115.5" y="237.8" width="2" height="4" fill="#ff0000"/><rect x="1117.1" y="235.8" width="2" height="2" fill="#ff0000"/><rect x="1118.3" y="233" width="2.8" height="1.6" fill="#f0f060"/><path d="M1121.2 233.8V235.8" stroke="#f0f060" stroke-width="1.4"/><rect x="1119.8" y="233" width="2.8" height="1.6" fill="#f0f060"/><rect x="1121.8" y="231.8" width="2" height="2" fill="#0a80f4"/><rect x="1123.4" y="233.8" width="2" height="2" fill="#ff0000"/><rect x="1125" y="231.8" width="2" height="2" fill="#ff0000"/><rect x="1128.1" y="219.8" width="2" height="6" fill="#ff0000"/><rect x="1129.7" y="217.7" width="2" height="4" fill="#ff0000"/><rect x="1131.3" y="213.7" width="2" height="4" fill="#ff0000"/><rect x="1132.9" y="205.7" width="2" height="8" fill="#0a80f4"/><rect x="1134.4" y="213.7" width="2" height="6" fill="#0a80f4"/><path d="M1137 217.7V223.8" stroke="#0a80f4" stroke-width="1.4"/><rect x="1136" y="219.8" width="2" height="4" fill="#0a80f4"/><rect x="1137.6" y="225.8" width="2" height="4" fill="#ff0000"/><rect x="1139.2" y="227.8" width="2" height="2" fill="#ff0000"/><path d="M1141.8 225.8V227.8" stroke="#f0f060" stroke-width="1.4"/><rect x="1140.4" y="225" width="2.8" height="1.6" fill="#f0f060"/><path d="M1143.3 223.8V231.8" stroke="#0a80f4" stroke-width="1.4"/><rect x="1142.3" y="223.8" width="2" height="4" fill="#0a80f4"/><rect x="1143.9" y="225.8" width="2" height="4" fill="#0a80f4"/><rect x="1145.1" y="231" width="2.8" height="1.6" fill="#f0f060"/><rect x="1147.1" y="229.8" width="2" height="2" fill="#0a80f4"/><path d="M1149.6 229.8V235.8" stroke="#0a80f4" stroke-width="1.4"/><rect x="1148.6" y="231.8" width="2" height="4" fill="#0a80f4"/><rect x="1149.8" y="237" width="2.8" height="1.6" fill="#f0f060"/><path d="M1152.8 229.8V237.8" stroke="#0a80f4" stroke-width="1.4"/><rect x="1151.8" y="229.8" width="2" height="6" fill="#0a80f4"/><path d="M1154.4 237.8V239.9" stroke="#f0f060" stroke-width="1.4"/><rect x="1153" y="237" width="2.8" height="1.6" fill="#f0f060"/><rect x="1155" y="235.8" width="2" height="2" fill="#ff0000"/><rect x="1156.1" y="233" width="2.8" height="1.6" fill="#f0f060"/><rect x="1157.7" y="233" width="2.8" height="1.6" fill="#f0f060"/><path d="M1160.7 229.8V233.8" stroke="#ff0000" stroke-width="1.4"/><rect x="1159.7" y="229.8" width="2" height="2" fill="#ff0000"/><path d="M1162.3 229.8V233.8" stroke="#0a80f4" stroke-width="1.4"/><rect x="1161.3" y="231.8" width="2" height="2" fill="#0a80f4"/><rect x="1162.8" y="233.8" width="2" height="2" fill="#0a80f4"/><path d="M1165.4 235.8V241.9" stroke="#ff0000" stroke-width="1.4"/><rect x="1164.4" y="235.8" width="2" height="2" fill="#ff0000"/><path d="M1167 235.8V239.9" stroke="#ff0000" stroke-width="1.4"/><rect x="1166" y="237.8" width="2" height="2" fill="#ff0000"/><path d="M1168.6 235.8V237.8" stroke="#f0f060" stroke-width="1.4"/><rect x="1167.2" y="237" width="2.8" height="1.6" fill="#f0f060"/><rect x="1170.7" y="235.8" width="2" height="2" fill="#ff0000"/><rect x="1172.3" y="235.8" width="2" height="4" fill="#ff0000"/><rect x="1173.9" y="231.8" width="2" height="2" fill="#ff0000"/><rect x="1175.5" y="225.8" width="2" height="2" fill="#0a80f4"/><rect x="1176.7" y="229" width="2.8" height="1.6" fill="#f0f060"/><rect x="1178.2" y="229" width="2.8" height="1.6" fill="#f0f060"/><rect x="1180.2" y="233.8" width="2" height="2" fill="#ff0000"/><path d="M1182.8 235.8V239.9" stroke="#ff0000" stroke-width="1.4"/><rect x="1181.8" y="235.8" width="2" height="2" fill="#ff0000"/><path d="M1184.4 229.8V235.8" stroke="#0a80f4" stroke-width="1.4"/><rect x="1183.4" y="229.8" width="2" height="4" fill="#0a80f4"/><path d="M1185.9 229.8V233.8" stroke="#f0f060" stroke-width="1.4"/><rect x="1184.5" y="233" width="2.8" height="1.6" fill="#f0f060"/><rect x="1186.5" y="233.8" width="2" height="6" fill="#ff0000"/><rect x="1188.1" y="227.8" width="2" height="8" fill="#ff0000"/><rect x="1189.3" y="219" width="2.8" height="1.6" fill="#f0f060"/><path d="M1192.3 211.7V225.8" stroke="#0a80f4" stroke-width="1.4"/><rect x="1191.3" y="211.7" width="2" height="12.1" fill="#0a80f4"/><rect x="1192.8" y="227.8" width="2" height="4" fill="#0a80f4"/><rect x="1194" y="231" width="2.8" height="1.6" fill="#f0f060"/><rect x="1196" y="229.8" width="2" height="2" fill="#0a80f4"/><rect x="1197.6" y="229.8" width="2" height="2" fill="#0a80f4"/><rect x="1198.7" y="237" width="2.8" height="1.6" fill="#f0f060"/><rect x="1200.3" y="235" width="2.8" height="1.6" fill="#f0f060"/><rect x="1202.3" y="237.8" width="2" height="4" fill="#ff0000"/><rect x="1203.9" y="235.8" width="2" height="2" fill="#ff0000"/><rect x="1205.5" y="229.8" width="2" height="2" fill="#0a80f4"/><path d="M1208 229.8V235.8" stroke="#ff0000" stroke-width="1.4"/><rect x="1207" y="231.8" width="2" height="2" fill="#ff0000"/><path d="M1209.6 229.8V241.9" stroke="#ff0000" stroke-width="1.4"/><rect x="1208.6" y="229.8" width="2" height="2" fill="#ff0000"/><path d="M1211.2 225.8V229.8" stroke="#0a80f4" stroke-width="1.4"/><rect x="1210.2" y="227.8" width="2" height="2" fill="#0a80f4"/><rect x="1211.8" y="229.8" width="2" height="2" fill="#ff0000"/><path d="M1217.5 233.8V249.9" stroke="#0a80f4" stroke-width="1.4"/><rect x="1216.5" y="233.8" width="2" height="14.1" fill="#0a80f4"/><rect x="1218.1" y="247.9" width="2" height="20.1" fill="#0a80f4"/><path d="M1220.7 266V274" stroke="#0a80f4" stroke-width="1.4"/><rect x="1219.7" y="268" width="2" height="4" fill="#0a80f4"/><path d="M1222.2 264V276" stroke="#ff0000" stroke-width="1.4"/><rect x="1221.2" y="270" width="2" height="6" fill="#ff0000"/><rect x="1222.8" y="272" width="2" height="6" fill="#ff0000"/><rect x="1224.4" y="270" width="2" height="4" fill="#ff0000"/><path d="M1227 268V272" stroke="#ff0000" stroke-width="1.4"/><rect x="1226" y="268" width="2" height="2" fill="#ff0000"/><rect x="1227.6" y="264" width="2" height="4" fill="#ff0000"/><rect x="1229.1" y="262" width="2" height="2" fill="#ff0000"/><rect x="1230.3" y="259.2" width="2.8" height="1.6" fill="#f0f060"/><path d="M1233.3 253.9V257.9" stroke="#0a80f4" stroke-width="1.4"/><rect x="1232.3" y="255.9" width="2" height="2" fill="#0a80f4"/><rect x="1233.9" y="257.9" width="2" height="4" fill="#0a80f4"/><rect x="1238.6" y="251.9" width="2" height="2" fill="#ff0000"/><path d="M1241.2 243.9V245.9" stroke="#f0f060" stroke-width="1.4"/><rect x="1239.8" y="245.1" width="2.8" height="1.6" fill="#f0f060"/><path d="M1242.8 245.9V251.9" stroke="#ff0000" stroke-width="1.4"/><rect x="1241.8" y="245.9" width="2" height="2" fill="#ff0000"/><path d="M1244.3 245.9V249.9" stroke="#ff0000" stroke-width="1.4"/><rect x="1243.3" y="245.9" width="2" height="2" fill="#ff0000"/><rect x="1244.9" y="243.9" width="2" height="4" fill="#ff0000"/><path d="M1247.5 243.9V247.9" stroke="#0a80f4" stroke-width="1.4"/><rect x="1246.5" y="245.9" width="2" height="2" fill="#0a80f4"/><path d="M1249.1 247.9V251.9" stroke="#ff0000" stroke-width="1.4"/><rect x="1248.1" y="247.9" width="2" height="2" fill="#ff0000"/><rect x="1249.6" y="247.9" width="2" height="2" fill="#ff0000"/><rect x="1251.2" y="245.9" width="2" height="4" fill="#ff0000"/><rect x="1252.4" y="245.1" width="2.8" height="1.6" fill="#f0f060"/><path d="M1255.4 241.9V251.9" stroke="#ff0000" stroke-width="1.4"/><rect x="1254.4" y="241.9" width="2" height="8" fill="#ff0000"/><rect x="1257.5" y="233.8" width="2" height="4" fill="#0a80f4"/><path d="M1260.1 235.8V241.9" stroke="#0a80f4" stroke-width="1.4"/><rect x="1259.1" y="235.8" width="2" height="4" fill="#0a80f4"/><rect x="1260.7" y="235.8" width="2" height="8" fill="#0a80f4"/><path d="M1263.3 247.9V251.9" stroke="#f0f060" stroke-width="1.4"/><rect x="1261.9" y="247.1" width="2.8" height="1.6" fill="#f0f060"/><rect x="1265.4" y="241.9" width="2" height="6" fill="#ff0000"/><rect x="1270.2" y="229.8" width="2" height="6" fill="#ff0000"/><rect x="1271.7" y="223.8" width="2" height="6" fill="#ff0000"/><rect x="1273.3" y="215.7" width="2" height="8" fill="#ff0000"/><path d="M1275.9 207.7V217.7" stroke="#ff0000" stroke-width="1.4"/><rect x="1274.9" y="209.7" width="2" height="4" fill="#ff0000"/><rect x="1276.1" y="206.9" width="2.8" height="1.6" fill="#f0f060"/><rect x="1279.6" y="201.7" width="2" height="4" fill="#0a80f4"/><rect x="1281.2" y="205.7" width="2" height="2" fill="#0a80f4"/><rect x="1282.4" y="206.9" width="2.8" height="1.6" fill="#f0f060"/><rect x="1284" y="210.9" width="2.8" height="1.6" fill="#f0f060"/><rect x="1285.5" y="210.9" width="2.8" height="1.6" fill="#f0f060"/><rect x="1289.1" y="207.7" width="2" height="4" fill="#ff0000"/><rect x="1290.7" y="205.7" width="2" height="6" fill="#ff0000"/><path d="M1293.3 199.7V205.7" stroke="#ff0000" stroke-width="1.4"/><rect x="1292.3" y="201.7" width="2" height="2" fill="#ff0000"/><path d="M1294.8 199.7V203.7" stroke="#ff0000" stroke-width="1.4"/><rect x="1293.8" y="199.7" width="2" height="2" fill="#ff0000"/><path d="M1296.4 191.6V197.6" stroke="#f0f060" stroke-width="1.4"/><rect x="1295" y="196.8" width="2.8" height="1.6" fill="#f0f060"/><rect x="1296.6" y="198.9" width="2.8" height="1.6" fill="#f0f060"/><rect x="1298.6" y="197.6" width="2" height="2" fill="#0a80f4"/><path d="M1301.1 197.6V203.7" stroke="#ff0000" stroke-width="1.4"/><rect x="1300.1" y="199.7" width="2" height="2" fill="#ff0000"/><path d="M1302.7 197.6V201.7" stroke="#0a80f4" stroke-width="1.4"/><rect x="1301.7" y="197.6" width="2" height="2" fill="#0a80f4"/><rect x="1303.3" y="195.6" width="2" height="2" fill="#0a80f4"/><rect x="1304.9" y="195.6" width="2" height="2" fill="#0a80f4"/><rect x="1306.5" y="195.6" width="2" height="2" fill="#0a80f4"/><rect x="1308" y="197.6" width="2" height="2" fill="#ff0000"/><rect x="1309.6" y="197.6" width="2" height="6" fill="#ff0000"/><rect x="1310.8" y="192.8" width="2.8" height="1.6" fill="#f0f060"/><path d="M1313.8 191.6V197.6" stroke="#ff0000" stroke-width="1.4"/><rect x="1312.8" y="191.6" width="2" height="4" fill="#ff0000"/><rect x="1314.4" y="187.6" width="2" height="4" fill="#ff0000"/><rect x="1315.9" y="181.6" width="2" height="4" fill="#0a80f4"/><path d="M1318.5 183.6V195.6" stroke="#0a80f4" stroke-width="1.4"/><rect x="1317.5" y="185.6" width="2" height="10" fill="#0a80f4"/><rect x="1319.1" y="199.7" width="2" height="8" fill="#0a80f4"/><rect x="1320.7" y="195.6" width="2" height="12.1" fill="#0a80f4"/><rect x="1322.2" y="205.7" width="2" height="6" fill="#0a80f4"/><rect x="1323.8" y="215.7" width="2" height="4" fill="#0a80f4"/><rect x="1325.4" y="219.8" width="2" height="6" fill="#ff0000"/><rect x="1327" y="217.7" width="2" height="4" fill="#ff0000"/><rect x="1328.6" y="211.7" width="2" height="2" fill="#ff0000"/><path d="M1331.1 205.7V209.7" stroke="#ff0000" stroke-width="1.4"/><rect x="1330.1" y="207.7" width="2" height="2" fill="#ff0000"/><path d="M1332.7 207.7V209.7" stroke="#f0f060" stroke-width="1.4"/><rect x="1331.3" y="206.9" width="2.8" height="1.6" fill="#f0f060"/><path d="M1334.3 207.7V215.7" stroke="#ff0000" stroke-width="1.4"/><rect x="1333.3" y="207.7" width="2" height="6" fill="#ff0000"/><rect x="1334.9" y="201.7" width="2" height="6" fill="#ff0000"/><rect x="1338" y="189.6" width="2" height="2" fill="#0a80f4"/><path d="M1340.6 189.6V197.6" stroke="#ff0000" stroke-width="1.4"/><rect x="1339.6" y="189.6" width="2" height="2" fill="#ff0000"/><rect x="1341.2" y="185.6" width="2" height="2" fill="#0a80f4"/><rect x="1342.8" y="187.6" width="2" height="4" fill="#0a80f4"/><rect x="1344.3" y="191.6" width="2" height="8" fill="#0a80f4"/><rect x="1345.9" y="201.7" width="2" height="4" fill="#0a80f4"/><path d="M1348.5 203.7V209.7" stroke="#0a80f4" stroke-width="1.4"/><rect x="1347.5" y="205.7" width="2" height="4" fill="#0a80f4"/><rect x="1348.7" y="212.9" width="2.8" height="1.6" fill="#f0f060"/><rect x="1350.6" y="209.7" width="2" height="2" fill="#ff0000"/><path d="M1353.2 203.7V215.7" stroke="#ff0000" stroke-width="1.4"/><rect x="1352.2" y="207.7" width="2" height="4" fill="#ff0000"/><path d="M1354.8 203.7V207.7" stroke="#ff0000" stroke-width="1.4"/><rect x="1353.8" y="205.7" width="2" height="2" fill="#ff0000"/><rect x="1355" y="198.9" width="2.8" height="1.6" fill="#f0f060"/><rect x="1357" y="199.7" width="2" height="2" fill="#0a80f4"/><rect x="1358.5" y="201.7" width="2" height="6" fill="#0a80f4"/><rect x="1360.1" y="203.7" width="2" height="10.1" fill="#0a80f4"/><rect x="1361.7" y="217.7" width="2" height="4" fill="#0a80f4"/><rect x="1363.3" y="219.8" width="2" height="4" fill="#ff0000"/><rect x="1364.9" y="213.7" width="2" height="2" fill="#ff0000"/><path d="M1367.4 211.7V215.7" stroke="#ff0000" stroke-width="1.4"/><rect x="1366.4" y="213.7" width="2" height="2" fill="#ff0000"/><rect x="1367.6" y="214.9" width="2.8" height="1.6" fill="#f0f060"/><path d="M1370.6 211.7V217.7" stroke="#0a80f4" stroke-width="1.4"/><rect x="1369.6" y="213.7" width="2" height="4" fill="#0a80f4"/><path d="M1372.2 211.7V221.8" stroke="#0a80f4" stroke-width="1.4"/><rect x="1371.2" y="213.7" width="2" height="6" fill="#0a80f4"/><rect x="1372.7" y="221.8" width="2" height="4" fill="#0a80f4"/><rect x="1374.3" y="219.8" width="2" height="6" fill="#0a80f4"/><rect x="1375.9" y="233.8" width="2" height="2" fill="#0a80f4"/><path d="M1378.5 229.8V235.8" stroke="#0a80f4" stroke-width="1.4"/><rect x="1377.5" y="233.8" width="2" height="2" fill="#0a80f4"/><path d="M1380.1 235.8V239.9" stroke="#f0f060" stroke-width="1.4"/><rect x="1378.7" y="235" width="2.8" height="1.6" fill="#f0f060"/><path d="M1381.6 237.8V243.9" stroke="#ff0000" stroke-width="1.4"/><rect x="1380.6" y="237.8" width="2" height="2" fill="#ff0000"/><path d="M1383.2 233.8V237.8" stroke="#ff0000" stroke-width="1.4"/><rect x="1382.2" y="235.8" width="2" height="2" fill="#ff0000"/><rect x="1385.4" y="231.8" width="2" height="2" fill="#0a80f4"/><path d="M1387.9 227.8V231.8" stroke="#0a80f4" stroke-width="1.4"/><rect x="1386.9" y="229.8" width="2" height="2" fill="#0a80f4"/><rect x="1388.1" y="231" width="2.8" height="1.6" fill="#f0f060"/><rect x="1390.1" y="229.8" width="2" height="2" fill="#0a80f4"/><path d="M1392.7 227.8V231.8" stroke="#0a80f4" stroke-width="1.4"/><rect x="1391.7" y="227.8" width="2" height="2" fill="#0a80f4"/><path d="M1394.3 231.8V239.9" stroke="#0a80f4" stroke-width="1.4"/><rect x="1393.3" y="231.8" width="2" height="4" fill="#0a80f4"/><rect x="1394.8" y="235.8" width="2" height="4" fill="#0a80f4"/><path d="M1397.4 233.8V239.9" stroke="#0a80f4" stroke-width="1.4"/><rect x="1396.4" y="237.8" width="2" height="2" fill="#0a80f4"/><path d="M1399 243.9V249.9" stroke="#ff0000" stroke-width="1.4"/><rect x="1398" y="243.9" width="2" height="2" fill="#ff0000"/><path d="M1402.1 237.8V245.9" stroke="#0a80f4" stroke-width="1.4"/><rect x="1401.1" y="237.8" width="2" height="6" fill="#0a80f4"/><path d="M1403.7 235.8V249.9" stroke="#0a80f4" stroke-width="1.4"/><rect x="1402.7" y="237.8" width="2" height="10" fill="#0a80f4"/><path d="M1405.3 245.9V257.9" stroke="#0a80f4" stroke-width="1.4"/><rect x="1404.3" y="245.9" width="2" height="10" fill="#0a80f4"/><path d="M1406.9 247.9V270" stroke="#0a80f4" stroke-width="1.4"/><rect x="1405.9" y="249.9" width="2" height="14.1" fill="#0a80f4"/><rect x="1407.5" y="264" width="2" height="10.1" fill="#0a80f4"/><rect x="1409" y="268" width="2" height="4" fill="#0a80f4"/><rect x="1410.2" y="277.2" width="2.8" height="1.6" fill="#f0f060"/><rect x="1412.2" y="280.1" width="2" height="2" fill="#ff0000"/><path d="M1414.8 278V282.1" stroke="#f0f060" stroke-width="1.4"/><rect x="1413.4" y="277.2" width="2.8" height="1.6" fill="#f0f060"/><rect x="1416.9" y="272" width="2" height="10.1" fill="#0a80f4"/><rect x="1418.5" y="278" width="2" height="14.1" fill="#0a80f4"/><path d="M1421.1 292.1V306.2" stroke="#0a80f4" stroke-width="1.4"/><rect x="1420.1" y="292.1" width="2" height="12.1" fill="#0a80f4"/><path d="M1422.7 304.2V320.2" stroke="#0a80f4" stroke-width="1.4"/><rect x="1421.7" y="304.2" width="2" height="14.1" fill="#0a80f4"/><rect x="1423.2" y="316.2" width="2" height="6" fill="#0a80f4"/><path d="M1425.8 324.3V336.3" stroke="#ff0000" stroke-width="1.4"/><rect x="1424.8" y="324.3" width="2" height="10" fill="#ff0000"/><path d="M1427.4 308.2V322.3" stroke="#ff0000" stroke-width="1.4"/><rect x="1426.4" y="312.2" width="2" height="10" fill="#ff0000"/><rect x="1428" y="300.2" width="2" height="8" fill="#ff0000"/><path d="M1432.1 292.1V308.2" stroke="#0a80f4" stroke-width="1.4"/><rect x="1431.1" y="294.1" width="2" height="12.1" fill="#0a80f4"/><path d="M1433.7 308.2V318.2" stroke="#0a80f4" stroke-width="1.4"/><rect x="1432.7" y="308.2" width="2" height="8" fill="#0a80f4"/><rect x="1435.5" y="323.5" width="2.8" height="1.6" fill="#f0f060"/><path d="M1438.4 322.3V326.3" stroke="#ff0000" stroke-width="1.4"/><rect x="1437.4" y="322.3" width="2" height="2" fill="#ff0000"/><rect x="1439" y="322.3" width="2" height="2" fill="#0a80f4"/><rect x="1440.2" y="323.5" width="2.8" height="1.6" fill="#f0f060"/><path d="M1443.2 326.3V338.3" stroke="#ff0000" stroke-width="1.4"/><rect x="1442.2" y="326.3" width="2" height="10" fill="#ff0000"/><rect x="1443.8" y="316.2" width="2" height="6" fill="#ff0000"/><path d="M1447.9 314.2V322.3" stroke="#ff0000" stroke-width="1.4"/><rect x="1446.9" y="316.2" width="2" height="2" fill="#ff0000"/><path d="M1449.5 318.2V320.2" stroke="#f0f060" stroke-width="1.4"/><rect x="1448.1" y="317.4" width="2.8" height="1.6" fill="#f0f060"/><rect x="1450.1" y="312.2" width="2" height="8" fill="#ff0000"/><rect x="1451.6" y="308.2" width="2" height="6" fill="#ff0000"/><rect x="1453.2" y="306.2" width="2" height="4" fill="#ff0000"/><path d="M1455.8 300.2V304.2" stroke="#0a80f4" stroke-width="1.4"/><rect x="1454.8" y="302.2" width="2" height="2" fill="#0a80f4"/><rect x="1456" y="299.4" width="2.8" height="1.6" fill="#f0f060"/><path d="M1459 302.2V308.2" stroke="#0a80f4" stroke-width="1.4"/><rect x="1458" y="304.2" width="2" height="2" fill="#0a80f4"/><rect x="1459.5" y="308.2" width="2" height="2" fill="#0a80f4"/><path d="M1462.1 310.2V312.2" stroke="#f0f060" stroke-width="1.4"/><rect x="1460.7" y="311.4" width="2.8" height="1.6" fill="#f0f060"/><path d="M1463.7 304.2V306.2" stroke="#f0f060" stroke-width="1.4"/><rect x="1462.3" y="305.4" width="2.8" height="1.6" fill="#f0f060"/><rect x="1464.3" y="304.2" width="2" height="6" fill="#0a80f4"/><rect x="1465.9" y="312.2" width="2" height="6" fill="#0a80f4"/><path d="M1468.4 320.2V324.3" stroke="#f0f060" stroke-width="1.4"/><rect x="1467" y="321.5" width="2.8" height="1.6" fill="#f0f060"/><rect x="1470.6" y="310.2" width="2" height="12.1" fill="#ff0000"/><path d="M1473.2 302.2V312.2" stroke="#ff0000" stroke-width="1.4"/><rect x="1472.2" y="302.2" width="2" height="8" fill="#ff0000"/><rect x="1473.7" y="294.1" width="2" height="10.1" fill="#ff0000"/><path d="M1476.3 288.1V296.1" stroke="#0a80f4" stroke-width="1.4"/><rect x="1475.3" y="294.1" width="2" height="2" fill="#0a80f4"/><path d="M1477.9 298.1V300.2" stroke="#f0f060" stroke-width="1.4"/><rect x="1476.5" y="297.3" width="2.8" height="1.6" fill="#f0f060"/><rect x="1478.5" y="298.1" width="2" height="2" fill="#0a80f4"/><path d="M1481.1 298.1V308.2" stroke="#0a80f4" stroke-width="1.4"/><rect x="1480.1" y="298.1" width="2" height="6" fill="#0a80f4"/><path d="M1485.8 312.2V316.2" stroke="#f0f060" stroke-width="1.4"/><rect x="1484.4" y="315.4" width="2.8" height="1.6" fill="#f0f060"/><rect x="1486.4" y="314.2" width="2" height="10.1" fill="#ff0000"/><path d="M1488.9 306.2V312.2" stroke="#ff0000" stroke-width="1.4"/><rect x="1487.9" y="308.2" width="2" height="4" fill="#ff0000"/><path d="M1490.5 308.2V314.2" stroke="#ff0000" stroke-width="1.4"/><rect x="1489.5" y="310.2" width="2" height="4" fill="#ff0000"/><rect x="1491.1" y="306.2" width="2" height="2" fill="#ff0000"/><path d="M1493.7 300.2V310.2" stroke="#ff0000" stroke-width="1.4"/><rect x="1492.7" y="302.2" width="2" height="6" fill="#ff0000"/><rect x="1493.9" y="305.4" width="2.8" height="1.6" fill="#f0f060"/><rect x="1497" y="309.4" width="2.8" height="1.6" fill="#f0f060"/><rect x="1499" y="312.2" width="2" height="2" fill="#0a80f4"/><path d="M1501.6 308.2V314.2" stroke="#0a80f4" stroke-width="1.4"/><rect x="1500.6" y="312.2" width="2" height="2" fill="#0a80f4"/><rect x="1501.8" y="315.4" width="2.8" height="1.6" fill="#f0f060"/><rect x="1503.3" y="317.4" width="2.8" height="1.6" fill="#f0f060"/><path d="M1506.3 318.2V330.3" stroke="#ff0000" stroke-width="1.4"/><rect x="1505.3" y="320.2" width="2" height="10.1" fill="#ff0000"/><path d="M1507.9 318.2V322.3" stroke="#ff0000" stroke-width="1.4"/><rect x="1506.9" y="320.2" width="2" height="2" fill="#ff0000"/><path d="M1509.5 318.2V320.2" stroke="#f0f060" stroke-width="1.4"/><rect x="1508.1" y="317.4" width="2.8" height="1.6" fill="#f0f060"/><rect x="1511.6" y="310.2" width="2" height="4" fill="#ff0000"/><path d="M1514.2 310.2V316.2" stroke="#ff0000" stroke-width="1.4"/><rect x="1513.2" y="310.2" width="2" height="4" fill="#ff0000"/><rect x="1514.4" y="305.4" width="2.8" height="1.6" fill="#f0f060"/><path d="M1517.4 306.2V312.2" stroke="#0a80f4" stroke-width="1.4"/><rect x="1516.4" y="306.2" width="2" height="2" fill="#0a80f4"/><rect x="1519.1" y="313.4" width="2.8" height="1.6" fill="#f0f060"/><path d="M1523.7 316.2V322.3" stroke="#ff0000" stroke-width="1.4"/><rect x="1522.7" y="316.2" width="2" height="2" fill="#ff0000"/><path d="M1525.2 308.2V314.2" stroke="#f0f060" stroke-width="1.4"/><rect x="1523.8" y="313.4" width="2.8" height="1.6" fill="#f0f060"/><path d="M1526.8 312.2V314.2" stroke="#f0f060" stroke-width="1.4"/><rect x="1525.4" y="311.4" width="2.8" height="1.6" fill="#f0f060"/><path d="M1528.4 304.2V314.2" stroke="#ff0000" stroke-width="1.4"/><rect x="1527.4" y="310.2" width="2" height="2" fill="#ff0000"/><rect x="1529" y="306.2" width="2" height="4" fill="#ff0000"/><path d="M1531.6 302.2V308.2" stroke="#ff0000" stroke-width="1.4"/><rect x="1530.6" y="304.2" width="2" height="4" fill="#ff0000"/><path d="M1533.1 306.2V310.2" stroke="#f0f060" stroke-width="1.4"/><rect x="1531.7" y="305.4" width="2.8" height="1.6" fill="#f0f060"/><rect x="1533.7" y="302.2" width="2" height="2" fill="#ff0000"/><rect x="1534.9" y="299.4" width="2.8" height="1.6" fill="#f0f060"/><rect x="1538.4" y="292.1" width="2" height="4" fill="#ff0000"/><path d="M1541 292.1V302.2" stroke="#ff0000" stroke-width="1.4"/><rect x="1540" y="292.1" width="2" height="6" fill="#ff0000"/><rect x="1541.2" y="283.3" width="2.8" height="1.6" fill="#f0f060"/><rect x="1543.2" y="274" width="2" height="12.1" fill="#0a80f4"/><path d="M1545.8 278V302.2" stroke="#0a80f4" stroke-width="1.4"/><rect x="1544.8" y="282.1" width="2" height="16.1" fill="#0a80f4"/><path d="M1547.3 304.2V312.2" stroke="#0a80f4" stroke-width="1.4"/><rect x="1546.3" y="304.2" width="2" height="6" fill="#0a80f4"/><path d="M1548.9 304.2V316.2" stroke="#0a80f4" stroke-width="1.4"/><rect x="1547.9" y="306.2" width="2" height="10.1" fill="#0a80f4"/><rect x="1549.5" y="316.2" width="2" height="6" fill="#0a80f4"/><path d="M1552.1 322.3V330.3" stroke="#0a80f4" stroke-width="1.4"/><rect x="1551.1" y="322.3" width="2" height="6" fill="#0a80f4"/><rect x="1552.7" y="330.3" width="2" height="2" fill="#ff0000"/><rect x="1554.2" y="324.3" width="2" height="18.1" fill="#ff0000"/><path d="M1556.8 320.2V330.3" stroke="#ff0000" stroke-width="1.4"/><rect x="1555.8" y="320.2" width="2" height="2" fill="#ff0000"/><rect x="1557.4" y="318.2" width="2" height="8" fill="#ff0000"/><path d="M1560 314.2V324.3" stroke="#ff0000" stroke-width="1.4"/><rect x="1559" y="314.2" width="2" height="4" fill="#ff0000"/><rect x="1560.5" y="310.2" width="2" height="4" fill="#ff0000"/><rect x="1562.1" y="308.2" width="2" height="2" fill="#ff0000"/><path d="M1564.7 304.2V310.2" stroke="#ff0000" stroke-width="1.4"/><rect x="1563.7" y="304.2" width="2" height="4" fill="#ff0000"/><rect x="1566.9" y="300.2" width="2" height="6" fill="#ff0000"/><rect x="1568.4" y="296.1" width="2" height="4" fill="#ff0000"/><path d="M1571 290.1V298.1" stroke="#ff0000" stroke-width="1.4"/><rect x="1570" y="296.1" width="2" height="2" fill="#ff0000"/><path d="M1572.6 292.1V296.1" stroke="#f0f060" stroke-width="1.4"/><rect x="1571.2" y="291.3" width="2.8" height="1.6" fill="#f0f060"/><path d="M1574.2 284.1V294.1" stroke="#0a80f4" stroke-width="1.4"/><rect x="1573.2" y="286.1" width="2" height="6" fill="#0a80f4"/><rect x="1574.7" y="290.1" width="2" height="6" fill="#0a80f4"/><path d="M1580.5 304.2V310.2" stroke="#0a80f4" stroke-width="1.4"/><rect x="1579.5" y="304.2" width="2" height="2" fill="#0a80f4"/><path d="M1582.1 308.2V312.2" stroke="#0a80f4" stroke-width="1.4"/><rect x="1581.1" y="308.2" width="2" height="2" fill="#0a80f4"/><rect x="1582.6" y="310.2" width="2" height="2" fill="#0a80f4"/><rect x="1584.2" y="314.2" width="2" height="2" fill="#0a80f4"/><path d="M1586.8 310.2V316.2" stroke="#0a80f4" stroke-width="1.4"/><rect x="1585.8" y="312.2" width="2" height="4" fill="#0a80f4"/><rect x="1587" y="317.4" width="2.8" height="1.6" fill="#f0f060"/><rect x="1588.9" y="316.2" width="2" height="2" fill="#0a80f4"/><rect x="1590.5" y="318.2" width="2" height="4" fill="#ff0000"/><rect x="1592.1" y="312.2" width="2" height="2" fill="#ff0000"/><path d="M1594.7 310.2V316.2" stroke="#ff0000" stroke-width="1.4"/><rect x="1593.7" y="314.2" width="2" height="2" fill="#ff0000"/><rect x="1595.3" y="308.2" width="2" height="2" fill="#0a80f4"/><path d="M1597.8 310.2V316.2" stroke="#f0f060" stroke-width="1.4"/><rect x="1596.4" y="311.4" width="2.8" height="1.6" fill="#f0f060"/><rect x="1598.4" y="308.2" width="2" height="4" fill="#0a80f4"/><path d="M1601 310.2V318.2" stroke="#0a80f4" stroke-width="1.4"/><rect x="1600" y="312.2" width="2" height="4" fill="#0a80f4"/><path d="M1602.6 314.2V320.2" stroke="#0a80f4" stroke-width="1.4"/><rect x="1601.6" y="314.2" width="2" height="4" fill="#0a80f4"/><path d="M1604.2 316.2V324.3" stroke="#0a80f4" stroke-width="1.4"/><rect x="1603.2" y="318.2" width="2" height="4" fill="#0a80f4"/><path d="M1605.7 324.3V328.3" stroke="#0a80f4" stroke-width="1.4"/><rect x="1604.7" y="324.3" width="2" height="2" fill="#0a80f4"/><rect x="1605.9" y="323.5" width="2.8" height="1.6" fill="#f0f060"/><rect x="1607.9" y="320.2" width="2" height="4" fill="#ff0000"/><rect x="1609.5" y="320.2" width="2" height="2" fill="#ff0000"/><path d="M1612 318.2V320.2" stroke="#f0f060" stroke-width="1.4"/><rect x="1610.6" y="317.4" width="2.8" height="1.6" fill="#f0f060"/><path d="M1613.6 316.2V320.2" stroke="#0a80f4" stroke-width="1.4"/><rect x="1612.6" y="318.2" width="2" height="2" fill="#0a80f4"/><rect x="1614.2" y="316.2" width="2" height="6" fill="#ff0000"/><path d="M1616.8 312.2V316.2" stroke="#0a80f4" stroke-width="1.4"/><rect x="1615.8" y="314.2" width="2" height="2" fill="#0a80f4"/><rect x="1617.4" y="314.2" width="2" height="8" fill="#0a80f4"/><path d="M1619.9 316.2V328.3" stroke="#0a80f4" stroke-width="1.4"/><rect x="1618.9" y="318.2" width="2" height="8" fill="#0a80f4"/><path d="M1621.5 326.3V330.3" stroke="#f0f060" stroke-width="1.4"/><rect x="1620.1" y="325.5" width="2.8" height="1.6" fill="#f0f060"/><path d="M1623.1 326.3V330.3" stroke="#0a80f4" stroke-width="1.4"/><rect x="1622.1" y="326.3" width="2" height="2" fill="#0a80f4"/><path d="M1624.7 328.3V332.3" stroke="#f0f060" stroke-width="1.4"/><rect x="1623.3" y="331.5" width="2.8" height="1.6" fill="#f0f060"/><rect x="1625.2" y="322.3" width="2" height="10.1" fill="#0a80f4"/><path d="M1627.8 334.3V342.4" stroke="#ff0000" stroke-width="1.4"/><rect x="1626.8" y="338.3" width="2" height="2" fill="#ff0000"/><path d="M1629.4 332.3V344.4" stroke="#ff0000" stroke-width="1.4"/><rect x="1628.4" y="334.3" width="2" height="8" fill="#ff0000"/><rect x="1630" y="332.3" width="2" height="2" fill="#ff0000"/><rect x="1631.6" y="330.3" width="2" height="4" fill="#ff0000"/><path d="M1634.1 328.3V330.3" stroke="#f0f060" stroke-width="1.4"/><rect x="1632.7" y="329.5" width="2.8" height="1.6" fill="#f0f060"/><rect x="1635.9" y="325.5" width="2.8" height="1.6" fill="#f0f060"/><path d="M1638.9 328.3V330.3" stroke="#f0f060" stroke-width="1.4"/><rect x="1637.5" y="327.5" width="2.8" height="1.6" fill="#f0f060"/><rect x="1639.4" y="328.3" width="2" height="4" fill="#0a80f4"/><path d="M1642 330.3V332.3" stroke="#f0f060" stroke-width="1.4"/><rect x="1640.6" y="329.5" width="2.8" height="1.6" fill="#f0f060"/><rect x="1642.6" y="326.3" width="2" height="6" fill="#0a80f4"/><path d="M1645.2 332.3V336.3" stroke="#0a80f4" stroke-width="1.4"/><rect x="1644.2" y="332.3" width="2" height="2" fill="#0a80f4"/><path d="M1646.8 334.3V338.3" stroke="#0a80f4" stroke-width="1.4"/><rect x="1645.8" y="336.3" width="2" height="2" fill="#0a80f4"/><path d="M1648.3 336.3V340.4" stroke="#0a80f4" stroke-width="1.4"/><rect x="1647.3" y="336.3" width="2" height="2" fill="#0a80f4"/><rect x="1648.9" y="340.4" width="2" height="4" fill="#0a80f4"/><rect x="1650.5" y="340.4" width="2" height="2" fill="#0a80f4"/><path d="M1653.1 340.4V352.4" stroke="#0a80f4" stroke-width="1.4"/><rect x="1652.1" y="340.4" width="2" height="10.1" fill="#0a80f4"/><path d="M1654.7 348.4V354.4" stroke="#f0f060" stroke-width="1.4"/><rect x="1653.3" y="351.6" width="2.8" height="1.6" fill="#f0f060"/><path d="M1656.2 344.4V350.4" stroke="#0a80f4" stroke-width="1.4"/><rect x="1655.2" y="348.4" width="2" height="2" fill="#0a80f4"/><path d="M1657.8 342.4V358.4" stroke="#ff0000" stroke-width="1.4"/><rect x="1656.8" y="346.4" width="2" height="12.1" fill="#ff0000"/><path d="M1659.4 336.3V350.4" stroke="#ff0000" stroke-width="1.4"/><rect x="1658.4" y="336.3" width="2" height="12.1" fill="#ff0000"/><rect x="1660" y="330.3" width="2" height="8" fill="#ff0000"/><rect x="1661.5" y="328.3" width="2" height="8" fill="#ff0000"/><path d="M1664.1 320.2V326.3" stroke="#0a80f4" stroke-width="1.4"/><rect x="1663.1" y="324.3" width="2" height="2" fill="#0a80f4"/><path d="M1665.7 320.2V334.3" stroke="#0a80f4" stroke-width="1.4"/><rect x="1664.7" y="320.2" width="2" height="10.1" fill="#0a80f4"/><path d="M1667.3 330.3V338.3" stroke="#0a80f4" stroke-width="1.4"/><rect x="1666.3" y="330.3" width="2" height="6" fill="#0a80f4"/><rect x="1667.5" y="333.5" width="2.8" height="1.6" fill="#f0f060"/><rect x="1669" y="331.5" width="2.8" height="1.6" fill="#f0f060"/><rect x="1671" y="328.3" width="2" height="4" fill="#0a80f4"/><path d="M1673.6 326.3V336.3" stroke="#0a80f4" stroke-width="1.4"/><rect x="1672.6" y="330.3" width="2" height="4" fill="#0a80f4"/><rect x="1674.2" y="326.3" width="2" height="10" fill="#0a80f4"/><rect x="1675.7" y="340.4" width="2" height="2" fill="#ff0000"/><rect x="1677.3" y="340.4" width="2" height="6" fill="#ff0000"/><path d="M1679.9 334.3V344.4" stroke="#ff0000" stroke-width="1.4"/><rect x="1678.9" y="336.3" width="2" height="4" fill="#ff0000"/><rect x="1682.1" y="330.3" width="2" height="14.1" fill="#ff0000"/><path d="M1684.6 326.3V330.3" stroke="#ff0000" stroke-width="1.4"/><rect x="1683.6" y="328.3" width="2" height="2" fill="#ff0000"/><rect x="1685.2" y="326.3" width="2" height="4" fill="#ff0000"/><path d="M1687.8 326.3V340.4" stroke="#ff0000" stroke-width="1.4"/><rect x="1686.8" y="328.3" width="2" height="10.1" fill="#ff0000"/><path d="M1689.4 318.2V322.3" stroke="#f0f060" stroke-width="1.4"/><rect x="1688" y="319.4" width="2.8" height="1.6" fill="#f0f060"/><path d="M1690.9 320.2V324.3" stroke="#f0f060" stroke-width="1.4"/><rect x="1689.5" y="321.5" width="2.8" height="1.6" fill="#f0f060"/><rect x="1692.7" y="321.5" width="2.8" height="1.6" fill="#f0f060"/><rect x="1694.7" y="322.3" width="2" height="2" fill="#ff0000"/><path d="M1697.3 316.2V324.3" stroke="#ff0000" stroke-width="1.4"/><rect x="1696.3" y="318.2" width="2" height="6" fill="#ff0000"/><path d="M1698.8 312.2V316.2" stroke="#ff0000" stroke-width="1.4"/><rect x="1697.8" y="312.2" width="2" height="2" fill="#ff0000"/><path d="M1700.4 310.2V316.2" stroke="#0a80f4" stroke-width="1.4"/><rect x="1699.4" y="310.2" width="2" height="4" fill="#0a80f4"/><path d="M1703.6 320.2V322.3" stroke="#f0f060" stroke-width="1.4"/><rect x="1702.2" y="321.5" width="2.8" height="1.6" fill="#f0f060"/><rect x="1703.8" y="321.5" width="2.8" height="1.6" fill="#f0f060"/><rect x="1705.7" y="320.2" width="2" height="2" fill="#ff0000"/><rect x="1707.3" y="318.2" width="2" height="2" fill="#ff0000"/><rect x="1708.5" y="319.4" width="2.8" height="1.6" fill="#f0f060"/><path d="M1711.5 320.2V324.3" stroke="#ff0000" stroke-width="1.4"/><rect x="1710.5" y="322.3" width="2" height="2" fill="#ff0000"/><path d="M1713 316.2V326.3" stroke="#0a80f4" stroke-width="1.4"/><rect x="1712" y="318.2" width="2" height="2" fill="#0a80f4"/><rect x="1713.6" y="320.2" width="2" height="2" fill="#ff0000"/><path d="M1716.2 316.2V320.2" stroke="#0a80f4" stroke-width="1.4"/><rect x="1715.2" y="318.2" width="2" height="2" fill="#0a80f4"/><rect x="1716.8" y="320.2" width="2" height="2" fill="#ff0000"/><rect x="1719.9" y="320.2" width="2" height="2" fill="#ff0000"/><path d="M1722.5 320.2V322.3" stroke="#f0f060" stroke-width="1.4"/><rect x="1721.1" y="319.4" width="2.8" height="1.6" fill="#f0f060"/><path d="M1724.1 316.2V322.3" stroke="#0a80f4" stroke-width="1.4"/><rect x="1723.1" y="318.2" width="2" height="4" fill="#0a80f4"/><path d="M1725.7 318.2V326.3" stroke="#f0f060" stroke-width="1.4"/><rect x="1724.3" y="319.4" width="2.8" height="1.6" fill="#f0f060"/><rect x="1725.8" y="319.4" width="2.8" height="1.6" fill="#f0f060"/><path d="M1728.8 316.2V322.3" stroke="#ff0000" stroke-width="1.4"/><rect x="1727.8" y="318.2" width="2" height="4" fill="#ff0000"/><rect x="1729.4" y="310.2" width="2" height="4" fill="#ff0000"/><path d="M1732 304.2V318.2" stroke="#ff0000" stroke-width="1.4"/><rect x="1731" y="306.2" width="2" height="10.1" fill="#ff0000"/><path d="M1733.6 290.1V304.2" stroke="#ff0000" stroke-width="1.4"/><rect x="1732.6" y="294.1" width="2" height="10.1" fill="#ff0000"/><path d="M1735.1 284.1V290.1" stroke="#0a80f4" stroke-width="1.4"/><rect x="1734.1" y="284.1" width="2" height="4" fill="#0a80f4"/><path d="M1736.7 288.1V308.2" stroke="#0a80f4" stroke-width="1.4"/><rect x="1735.7" y="290.1" width="2" height="16.1" fill="#0a80f4"/><rect x="1737.3" y="304.2" width="2" height="8" fill="#0a80f4"/><rect x="1738.9" y="316.2" width="2" height="2" fill="#0a80f4"/><rect x="1742" y="310.2" width="2" height="10.1" fill="#ff0000"/><path d="M1744.6 302.2V308.2" stroke="#ff0000" stroke-width="1.4"/><rect x="1743.6" y="302.2" width="2" height="2" fill="#ff0000"/><path d="M1746.2 292.1V304.2" stroke="#0a80f4" stroke-width="1.4"/><rect x="1745.2" y="294.1" width="2" height="10.1" fill="#0a80f4"/><path d="M1747.8 296.1V314.2" stroke="#0a80f4" stroke-width="1.4"/><rect x="1746.8" y="296.1" width="2" height="16.1" fill="#0a80f4"/><rect x="1747.9" y="315.4" width="2.8" height="1.6" fill="#f0f060"/><path d="M1750.9 312.2V316.2" stroke="#0a80f4" stroke-width="1.4"/><rect x="1749.9" y="314.2" width="2" height="2" fill="#0a80f4"/><rect x="1751.5" y="312.2" width="2" height="2" fill="#0a80f4"/><path d="M1754.1 314.2V322.3" stroke="#0a80f4" stroke-width="1.4"/><rect x="1753.1" y="316.2" width="2" height="6" fill="#0a80f4"/><rect x="1754.7" y="318.2" width="2" height="4" fill="#0a80f4"/><rect x="1755.8" y="323.5" width="2.8" height="1.6" fill="#f0f060"/><path d="M1758.8 328.3V330.3" stroke="#f0f060" stroke-width="1.4"/><rect x="1757.4" y="327.5" width="2.8" height="1.6" fill="#f0f060"/><path d="M1760.4 328.3V330.3" stroke="#f0f060" stroke-width="1.4"/><rect x="1759" y="327.5" width="2.8" height="1.6" fill="#f0f060"/><path d="M1762 328.3V332.3" stroke="#0a80f4" stroke-width="1.4"/><rect x="1761" y="328.3" width="2" height="2" fill="#0a80f4"/><path d="M1763.5 328.3V330.3" stroke="#f0f060" stroke-width="1.4"/><rect x="1762.1" y="329.5" width="2.8" height="1.6" fill="#f0f060"/><rect x="1764.1" y="322.3" width="2" height="6" fill="#0a80f4"/><rect x="1765.7" y="326.3" width="2" height="2" fill="#0a80f4"/><path d="M1768.3 330.3V336.3" stroke="#0a80f4" stroke-width="1.4"/><rect x="1767.3" y="332.3" width="2" height="4" fill="#0a80f4"/><path d="M1769.9 338.3V342.4" stroke="#ff0000" stroke-width="1.4"/><rect x="1768.9" y="338.3" width="2" height="2" fill="#ff0000"/><rect x="1772" y="324.3" width="2" height="8" fill="#ff0000"/><path d="M1774.6 316.2V332.3" stroke="#ff0000" stroke-width="1.4"/><rect x="1773.6" y="318.2" width="2" height="12.1" fill="#ff0000"/><path d="M1776.2 318.2V326.3" stroke="#ff0000" stroke-width="1.4"/><rect x="1775.2" y="318.2" width="2" height="6" fill="#ff0000"/><path d="M1779.3 300.2V322.3" stroke="#ff0000" stroke-width="1.4"/><rect x="1778.3" y="300.2" width="2" height="20.1" fill="#ff0000"/><rect x="1779.9" y="284.1" width="2" height="8" fill="#ff0000"/><rect x="1781.5" y="286.1" width="2" height="2" fill="#0a80f4"/><rect x="1783.1" y="294.1" width="2" height="2" fill="#ff0000"/><path d="M1785.6 286.1V292.1" stroke="#ff0000" stroke-width="1.4"/><rect x="1784.6" y="288.1" width="2" height="4" fill="#ff0000"/><path d="M1787.2 280.1V292.1" stroke="#ff0000" stroke-width="1.4"/><rect x="1786.2" y="282.1" width="2" height="10.1" fill="#ff0000"/><path d="M1788.8 270V284.1" stroke="#ff0000" stroke-width="1.4"/><rect x="1787.8" y="272" width="2" height="12.1" fill="#ff0000"/><path d="M1790.4 264V280.1" stroke="#ff0000" stroke-width="1.4"/><rect x="1789.4" y="266" width="2" height="12.1" fill="#ff0000"/><rect x="1791" y="260" width="2" height="18.1" fill="#ff0000"/><rect x="1794.1" y="229.8" width="2" height="8" fill="#0a80f4"/><rect x="1795.7" y="235.8" width="2" height="10" fill="#0a80f4"/><rect x="1798.8" y="262" width="2" height="2" fill="#0a80f4"/><path d="M1801.4 262V268" stroke="#ff0000" stroke-width="1.4"/><rect x="1800.4" y="264" width="2" height="2" fill="#ff0000"/><path d="M1803 253.9V255.9" stroke="#f0f060" stroke-width="1.4"/><rect x="1801.6" y="255.1" width="2.8" height="1.6" fill="#f0f060"/><rect x="1803.6" y="257.9" width="2" height="8" fill="#0a80f4"/><rect x="1805.2" y="264" width="2" height="8" fill="#0a80f4"/><path d="M1807.7 274V280.1" stroke="#ff0000" stroke-width="1.4"/><rect x="1806.7" y="276" width="2" height="4" fill="#ff0000"/><path d="M1809.3 270V284.1" stroke="#ff0000" stroke-width="1.4"/><rect x="1808.3" y="272" width="2" height="8" fill="#ff0000"/><rect x="1809.9" y="262" width="2" height="8" fill="#ff0000"/><rect x="1813" y="249.9" width="2" height="2" fill="#0a80f4"/><path d="M1815.6 251.9V260" stroke="#0a80f4" stroke-width="1.4"/><rect x="1814.6" y="253.9" width="2" height="4" fill="#0a80f4"/><path d="M1817.2 255.9V260" stroke="#ff0000" stroke-width="1.4"/><rect x="1816.2" y="257.9" width="2" height="2" fill="#ff0000"/><path d="M1820.4 255.9V272" stroke="#ff0000" stroke-width="1.4"/><rect x="1819.4" y="255.9" width="2" height="4" fill="#ff0000"/><rect x="1820.9" y="247.9" width="2" height="2" fill="#0a80f4"/><path d="M1823.5 245.9V249.9" stroke="#ff0000" stroke-width="1.4"/><rect x="1822.5" y="245.9" width="2" height="2" fill="#ff0000"/><rect x="1823.7" y="249.1" width="2.8" height="1.6" fill="#f0f060"/><path d="M1826.7 245.9V253.9" stroke="#0a80f4" stroke-width="1.4"/><rect x="1825.7" y="247.9" width="2" height="4" fill="#0a80f4"/><rect x="1827.2" y="245.9" width="2" height="8" fill="#0a80f4"/><path d="M1829.8 243.9V262" stroke="#0a80f4" stroke-width="1.4"/><rect x="1828.8" y="243.9" width="2" height="16.1" fill="#0a80f4"/><rect x="1830.4" y="266" width="2" height="2" fill="#0a80f4"/><path d="M1833 264V268" stroke="#ff0000" stroke-width="1.4"/><rect x="1832" y="264" width="2" height="2" fill="#ff0000"/><rect x="1835.1" y="262" width="2" height="10" fill="#ff0000"/><path d="M1837.7 253.9V260" stroke="#ff0000" stroke-width="1.4"/><rect x="1836.7" y="255.9" width="2" height="4" fill="#ff0000"/><path d="M1839.3 251.9V253.9" stroke="#f0f060" stroke-width="1.4"/><rect x="1837.9" y="253.1" width="2.8" height="1.6" fill="#f0f060"/><path d="M1840.9 241.9V257.9" stroke="#0a80f4" stroke-width="1.4"/><rect x="1839.9" y="243.9" width="2" height="14.1" fill="#0a80f4"/><rect x="1841.5" y="247.9" width="2" height="12.1" fill="#0a80f4"/><rect x="1843" y="253.9" width="2" height="14.1" fill="#0a80f4"/><rect x="1844.6" y="276" width="2" height="2" fill="#ff0000"/><path d="M1847.2 264V280.1" stroke="#ff0000" stroke-width="1.4"/><rect x="1846.2" y="266" width="2" height="14.1" fill="#ff0000"/><path d="M1848.8 257.9V262" stroke="#f0f060" stroke-width="1.4"/><rect x="1847.4" y="259.2" width="2.8" height="1.6" fill="#f0f060"/><rect x="1849.3" y="262" width="2" height="6" fill="#0a80f4"/><rect x="1850.5" y="275.2" width="2.8" height="1.6" fill="#f0f060"/><rect x="1852.5" y="270" width="2" height="2" fill="#ff0000"/><rect x="1854.1" y="266" width="2" height="4" fill="#ff0000"/><rect x="1855.7" y="268" width="2" height="6" fill="#ff0000"/><path d="M1858.2 262V270" stroke="#ff0000" stroke-width="1.4"/><rect x="1857.2" y="264" width="2" height="6" fill="#ff0000"/><path d="M1859.8 251.9V272" stroke="#ff0000" stroke-width="1.4"/><rect x="1858.8" y="255.9" width="2" height="16.1" fill="#ff0000"/><path d="M1861.4 253.9V264" stroke="#ff0000" stroke-width="1.4"/><rect x="1860.4" y="253.9" width="2" height="6" fill="#ff0000"/><rect x="1862" y="251.9" width="2" height="10.1" fill="#ff0000"/><rect x="1863.1" y="249.1" width="2.8" height="1.6" fill="#f0f060"/><rect x="1865.1" y="243.9" width="2" height="2" fill="#0a80f4"/><rect x="1866.3" y="247.1" width="2.8" height="1.6" fill="#f0f060"/><rect x="1868.3" y="247.9" width="2" height="4" fill="#ff0000"/><path d="M1870.9 239.9V245.9" stroke="#ff0000" stroke-width="1.4"/><rect x="1869.9" y="241.9" width="2" height="4" fill="#ff0000"/><rect x="1871.4" y="235.8" width="2" height="4" fill="#ff0000"/><path d="M1875.6 231.8V235.8" stroke="#f0f060" stroke-width="1.4"/><rect x="1874.2" y="235" width="2.8" height="1.6" fill="#f0f060"/><path d="M1877.2 235.8V237.8" stroke="#f0f060" stroke-width="1.4"/><rect x="1875.8" y="237" width="2.8" height="1.6" fill="#f0f060"/><path d="M1878.7 227.8V237.8" stroke="#0a80f4" stroke-width="1.4"/><rect x="1877.7" y="231.8" width="2" height="6" fill="#0a80f4"/><path d="M1880.3 237.8V241.9" stroke="#0a80f4" stroke-width="1.4"/><rect x="1879.3" y="239.9" width="2" height="2" fill="#0a80f4"/><rect x="1880.9" y="229.8" width="2" height="14.1" fill="#0a80f4"/><rect x="1882.5" y="235.8" width="2" height="10" fill="#0a80f4"/><path d="M1885.1 241.9V251.9" stroke="#0a80f4" stroke-width="1.4"/><rect x="1884.1" y="241.9" width="2" height="8" fill="#0a80f4"/><path d="M1886.6 245.9V253.9" stroke="#0a80f4" stroke-width="1.4"/><rect x="1885.6" y="247.9" width="2" height="6" fill="#0a80f4"/><rect x="1887.2" y="260" width="2" height="4" fill="#ff0000"/><path d="M1889.8 255.9V262" stroke="#0a80f4" stroke-width="1.4"/><rect x="1888.8" y="257.9" width="2" height="4" fill="#0a80f4"/><rect x="1890.4" y="266" width="2" height="4" fill="#ff0000"/><rect x="1892" y="262" width="2" height="8" fill="#ff0000"/><path d="M1894.5 253.9V262" stroke="#ff0000" stroke-width="1.4"/><rect x="1893.5" y="255.9" width="2" height="6" fill="#ff0000"/><rect x="1895.1" y="253.9" width="2" height="10.1" fill="#ff0000"/><rect x="1896.3" y="251.1" width="2.8" height="1.6" fill="#f0f060"/><rect x="1898.3" y="249.9" width="2" height="2" fill="#0a80f4"/><path d="M1900.8 253.9V255.9" stroke="#f0f060" stroke-width="1.4"/><rect x="1899.4" y="253.1" width="2.8" height="1.6" fill="#f0f060"/><rect x="1901" y="251.1" width="2.8" height="1.6" fill="#f0f060"/></g><text fill="#c4c4c4"><tspan x="11" y="98" font-size="19.2" textLength="38.4" lengthAdjust="spacingAndGlyphs">時刻</tspan><tspan x="49.6" y="98.5" font-size="20" textLength="57.8" lengthAdjust="spacingAndGlyphs">:06:00</tspan> <tspan x="117" y="98" font-size="19.2" textLength="38.4" lengthAdjust="spacingAndGlyphs">始値</tspan><tspan x="155.6" y="98.5" font-size="20" textLength="67.5" lengthAdjust="spacingAndGlyphs">:13,845</tspan> <tspan x="232.7" y="98" font-size="19.2" textLength="38.4" lengthAdjust="spacingAndGlyphs">高値</tspan><tspan x="271.3" y="98.5" font-size="20" textLength="67.5" lengthAdjust="spacingAndGlyphs">:13,845</tspan> <tspan x="348.4" y="98" font-size="19.2" textLength="38.4" lengthAdjust="spacingAndGlyphs">安値</tspan><tspan x="387" y="98.5" font-size="20" textLength="67.5" lengthAdjust="spacingAndGlyphs">:13,845</tspan> <tspan x="464.1" y="98" font-size="19.2" textLength="38.4" lengthAdjust="spacingAndGlyphs">終値</tspan><tspan x="502.6" y="98.5" font-size="20" textLength="67.5" lengthAdjust="spacingAndGlyphs">:13,845</tspan></text><text x="1909" y="124.7" font-size="20.6" fill="#c4c4c4" textLength="57.8" lengthAdjust="spacingAndGlyphs">13,900</text><text x="1909" y="224.7" font-size="20.6" fill="#c4c4c4" textLength="57.8" lengthAdjust="spacingAndGlyphs">13,850</text><text x="1909" y="325.7" font-size="20.6" fill="#c4c4c4" textLength="57.8" lengthAdjust="spacingAndGlyphs">13,800</text><text x="30.3" y="389.8" font-size="20" fill="#c4c4c4" textLength="19.3" lengthAdjust="spacingAndGlyphs">05</text><text x="122" y="389.8" font-size="20" fill="#c4c4c4" textLength="19.3" lengthAdjust="spacingAndGlyphs">09</text><text x="215.7" y="389.8" font-size="20" fill="#c4c4c4" textLength="19.3" lengthAdjust="spacingAndGlyphs">10</text><text x="306.6" y="389.8" font-size="20" fill="#c4c4c4" textLength="19.3" lengthAdjust="spacingAndGlyphs">11</text><text x="392.6" y="389.8" font-size="20" fill="#c4c4c4" textLength="19.3" lengthAdjust="spacingAndGlyphs">12</text><text x="487.8" y="389.8" font-size="20" fill="#c4c4c4" textLength="19.3" lengthAdjust="spacingAndGlyphs">13</text><text x="583.2" y="389.8" font-size="20" fill="#c4c4c4" textLength="19.3" lengthAdjust="spacingAndGlyphs">14</text><text x="676.7" y="389.8" font-size="20" fill="#c4c4c4" textLength="19.3" lengthAdjust="spacingAndGlyphs">15</text><text x="740.8" y="389.8" font-size="20" fill="#c4c4c4" textLength="19.3" lengthAdjust="spacingAndGlyphs">17</text><text x="834.4" y="389.8" font-size="20" fill="#c4c4c4" textLength="19.3" lengthAdjust="spacingAndGlyphs">18</text><text x="928.2" y="389.8" font-size="20" fill="#c4c4c4" textLength="19.3" lengthAdjust="spacingAndGlyphs">19</text><text x="1015.6" y="389.8" font-size="20" fill="#c4c4c4" textLength="19.3" lengthAdjust="spacingAndGlyphs">20</text><text x="1108" y="389.8" font-size="20" fill="#c4c4c4" textLength="19.3" lengthAdjust="spacingAndGlyphs">21</text><text x="1189.2" y="389.8" font-size="20" fill="#c4c4c4" textLength="19.3" lengthAdjust="spacingAndGlyphs">22</text><text x="1282.8" y="389.8" font-size="20" fill="#c4c4c4" textLength="19.3" lengthAdjust="spacingAndGlyphs">23</text><text x="1378" y="389.8" font-size="20" fill="#c4c4c4" textLength="19.3" lengthAdjust="spacingAndGlyphs">00</text><text x="1471.8" y="389.8" font-size="20" fill="#c4c4c4" textLength="19.3" lengthAdjust="spacingAndGlyphs">01</text><text x="1565.3" y="389.8" font-size="20" fill="#c4c4c4" textLength="19.3" lengthAdjust="spacingAndGlyphs">02</text><text x="1648.1" y="389.8" font-size="20" fill="#c4c4c4" textLength="19.3" lengthAdjust="spacingAndGlyphs">03</text><text x="1734.4" y="389.8" font-size="20" fill="#c4c4c4" textLength="19.3" lengthAdjust="spacingAndGlyphs">04</text><text x="1823.3" y="389.8" font-size="20" fill="#c4c4c4" textLength="19.3" lengthAdjust="spacingAndGlyphs">05</text><text x="71" y="389.8" font-size="20" font-weight="bold" fill="#e8e8e8" textLength="19.3" lengthAdjust="spacingAndGlyphs">06</text><text x="1879.5" y="389.8" font-size="20" fill="#c4c4c4" textLength="19.3" lengthAdjust="spacingAndGlyphs">06</text><text x="1378" y="366.6" font-size="20" fill="#c4c4c4" textLength="19.3" lengthAdjust="spacingAndGlyphs">30</text><rect x="1906.5" y="222.3" width="93" height="34.5" fill="#d2d2d2"/><rect x="1906.5" y="222.3" width="93" height="1.5" fill="#ededed"/><rect x="1906.5" y="255.3" width="93" height="1.5" fill="#ededed"/><text x="1922.9" y="245.5" font-size="20.5" font-weight="bold" fill="#000" textLength="57.8" lengthAdjust="spacingAndGlyphs">13,845</text></svg></div><div class="abs panel" style="top:406px;height:349px"><svg width="1992" height="349" viewBox="9 406 1992 349" font-family="Liberation Sans, IPAGothic, sans-serif"><rect x="9.5" y="406.8" width="1990" height="347.7" fill="#191919"/><rect x="10" y="407.5" width="1896.5" height="322.8" fill="#000"/><path d="M10 407.9H1906.5" stroke="#c8c8c8" stroke-width="1.3" fill="none"/><path d="M10.4 407.5V730.3H1906.5V407.5" stroke="#f4f4f4" stroke-width="1.6" fill="none"/><clipPath id="c2"><rect x="11" y="407.5" width="1895" height="322.3"/></clipPath><g stroke="#acacac" stroke-width="1.7" stroke-dasharray="1.7 1.35" fill="none"><path d="M29.1 408.5V730.3"/><path d="M120.8 408.5V730.3"/><path d="M214.5 408.5V730.3"/><path d="M305.4 408.5V730.3"/><path d="M391.4 408.5V730.3"/><path d="M486.6 408.5V730.3"/><path d="M582 408.5V730.3"/><path d="M675.5 408.5V730.3"/><path d="M739.6 408.5V730.3"/><path d="M833.2 408.5V730.3"/><path d="M927 408.5V730.3"/><path d="M1014.4 408.5V730.3"/><path d="M1106.8 408.5V730.3"/><path d="M1188 408.5V730.3"/><path d="M1281.6 408.5V730.3"/><path d="M1376.8 408.5V730.3"/><path d="M1470.6 408.5V730.3"/><path d="M1564.1 408.5V730.3"/><path d="M1646.9 408.5V730.3"/><path d="M1733.2 408.5V730.3"/><path d="M1822.1 408.5V730.3"/><path d="M1903.4 408.5V730.3"/><path d="M96 408.5V730.3"/><path d="M97.5 408.5V730.3"/><path d="M11 448.1H1905.5"/><path d="M11 497.4H1905.5"/><path d="M11 546.7H1905.5"/><path d="M11 596H1905.5"/><path d="M11 645.3H1905.5"/><path d="M11 694.6H1905.5"/></g><g clip-path="url(#c2)"><rect x="17.9" y="614.9" width="3.6" height="1.6" fill="#f0f060"/><rect x="24.2" y="614.9" width="3.6" height="1.6" fill="#f0f060"/><rect x="30.5" y="614.9" width="3.6" height="1.6" fill="#f0f060"/><rect x="41.6" y="605.1" width="3.6" height="1.6" fill="#f0f060"/><rect x="54.2" y="610" width="3.6" height="1.6" fill="#f0f060"/><rect x="67.6" y="615.7" width="2" height="4.9" fill="#ff0000"/><path d="M74.9 615.7V620.6" stroke="#f0f060" stroke-width="1.4"/><rect x="73.1" y="619.9" width="3.6" height="1.6" fill="#f0f060"/><rect x="91.3" y="610.8" width="2" height="4.9" fill="#ff0000"/><rect x="92.1" y="605.1" width="3.6" height="1.6" fill="#f0f060"/><rect x="96" y="605.9" width="2" height="4.9" fill="#ff0000"/><rect x="98.4" y="605.1" width="3.6" height="1.6" fill="#f0f060"/><rect x="104.7" y="614.9" width="3.6" height="1.6" fill="#f0f060"/><rect x="107.8" y="614.9" width="3.6" height="1.6" fill="#f0f060"/><rect x="115.7" y="624.8" width="3.6" height="1.6" fill="#f0f060"/><rect x="118.9" y="634.6" width="3.6" height="1.6" fill="#f0f060"/><rect x="130.7" y="625.6" width="2" height="4.9" fill="#ff0000"/><rect x="133.1" y="619.9" width="3.6" height="1.6" fill="#f0f060"/><rect x="134.7" y="619.9" width="3.6" height="1.6" fill="#f0f060"/><rect x="137.8" y="610" width="3.6" height="1.6" fill="#f0f060"/><rect x="141" y="614.9" width="3.6" height="1.6" fill="#f0f060"/><rect x="146.5" y="610.8" width="2" height="4.9" fill="#0a80f4"/><rect x="148.1" y="610.8" width="2" height="4.9" fill="#0a80f4"/><path d="M153.8 615.7V620.6" stroke="#f0f060" stroke-width="1.4"/><rect x="152" y="619.9" width="3.6" height="1.6" fill="#f0f060"/><rect x="166.2" y="614.9" width="3.6" height="1.6" fill="#f0f060"/><rect x="167.8" y="614.9" width="3.6" height="1.6" fill="#f0f060"/><rect x="171" y="624.8" width="3.6" height="1.6" fill="#f0f060"/><rect x="173.3" y="625.6" width="2" height="4.9" fill="#0a80f4"/><path d="M175.9 620.6V630.5" stroke="#ff0000" stroke-width="1.4"/><rect x="174.9" y="620.6" width="2" height="4.9" fill="#ff0000"/><rect x="180.4" y="619.9" width="3.6" height="1.6" fill="#f0f060"/><rect x="200.2" y="635.4" width="2" height="4.9" fill="#ff0000"/><path d="M207.5 625.6V630.5" stroke="#f0f060" stroke-width="1.4"/><rect x="205.7" y="624.8" width="3.6" height="1.6" fill="#f0f060"/><rect x="210.4" y="629.7" width="3.6" height="1.6" fill="#f0f060"/><rect x="218.3" y="624.8" width="3.6" height="1.6" fill="#f0f060"/><path d="M221.7 610.8V620.6" stroke="#ff0000" stroke-width="1.4"/><rect x="220.7" y="615.7" width="2" height="4.9" fill="#ff0000"/><rect x="223.1" y="610" width="3.6" height="1.6" fill="#f0f060"/><rect x="227" y="605.9" width="2" height="4.9" fill="#0a80f4"/><rect x="227.8" y="610" width="3.6" height="1.6" fill="#f0f060"/><rect x="230.9" y="610" width="3.6" height="1.6" fill="#f0f060"/><rect x="232.5" y="610" width="3.6" height="1.6" fill="#f0f060"/><rect x="235.7" y="610" width="3.6" height="1.6" fill="#f0f060"/><rect x="239.6" y="600.9" width="2" height="4.9" fill="#0a80f4"/><rect x="240.4" y="610" width="3.6" height="1.6" fill="#f0f060"/><rect x="243.6" y="619.9" width="3.6" height="1.6" fill="#f0f060"/><rect x="262.5" y="614.9" width="3.6" height="1.6" fill="#f0f060"/><rect x="267.2" y="619.9" width="3.6" height="1.6" fill="#f0f060"/><rect x="270.4" y="619.9" width="3.6" height="1.6" fill="#f0f060"/><rect x="273.6" y="614.9" width="3.6" height="1.6" fill="#f0f060"/><rect x="278.3" y="619.9" width="3.6" height="1.6" fill="#f0f060"/><rect x="282.2" y="615.7" width="2" height="4.9" fill="#0a80f4"/><path d="M289.6 620.6V630.5" stroke="#0a80f4" stroke-width="1.4"/><rect x="288.6" y="620.6" width="2" height="4.9" fill="#0a80f4"/><rect x="292.5" y="624.8" width="3.6" height="1.6" fill="#f0f060"/><rect x="297.2" y="619.9" width="3.6" height="1.6" fill="#f0f060"/><rect x="306.7" y="624.8" width="3.6" height="1.6" fill="#f0f060"/><rect x="308.3" y="614.9" width="3.6" height="1.6" fill="#f0f060"/><rect x="311.4" y="619.9" width="3.6" height="1.6" fill="#f0f060"/><rect x="313" y="610" width="3.6" height="1.6" fill="#f0f060"/><rect x="317.7" y="624.8" width="3.6" height="1.6" fill="#f0f060"/><rect x="326.4" y="620.6" width="2" height="4.9" fill="#0a80f4"/><rect x="327.2" y="624.8" width="3.6" height="1.6" fill="#f0f060"/><rect x="328.8" y="634.6" width="3.6" height="1.6" fill="#f0f060"/><rect x="330.4" y="634.6" width="3.6" height="1.6" fill="#f0f060"/><rect x="346.9" y="615.7" width="2" height="4.9" fill="#0a80f4"/><rect x="350.1" y="620.6" width="2" height="4.9" fill="#ff0000"/><rect x="352.5" y="624.8" width="3.6" height="1.6" fill="#f0f060"/><rect x="358.8" y="614.9" width="3.6" height="1.6" fill="#f0f060"/><rect x="363.5" y="610" width="3.6" height="1.6" fill="#f0f060"/><rect x="367.5" y="610.8" width="2" height="4.9" fill="#0a80f4"/><path d="M370 610.8V615.7" stroke="#f0f060" stroke-width="1.4"/><rect x="368.2" y="610" width="3.6" height="1.6" fill="#f0f060"/><path d="M371.6 610.8V615.7" stroke="#f0f060" stroke-width="1.4"/><rect x="369.8" y="610" width="3.6" height="1.6" fill="#f0f060"/><rect x="371.4" y="610" width="3.6" height="1.6" fill="#f0f060"/><rect x="374.6" y="614.9" width="3.6" height="1.6" fill="#f0f060"/><rect x="376.1" y="614.9" width="3.6" height="1.6" fill="#f0f060"/><rect x="384" y="619.9" width="3.6" height="1.6" fill="#f0f060"/><rect x="387.2" y="619.9" width="3.6" height="1.6" fill="#f0f060"/><rect x="388.8" y="619.9" width="3.6" height="1.6" fill="#f0f060"/><rect x="395.9" y="610.8" width="2" height="4.9" fill="#0a80f4"/><path d="M400 625.6V630.5" stroke="#f0f060" stroke-width="1.4"/><rect x="398.2" y="624.8" width="3.6" height="1.6" fill="#f0f060"/><rect x="400.6" y="615.7" width="2" height="4.9" fill="#0a80f4"/><rect x="401.4" y="624.8" width="3.6" height="1.6" fill="#f0f060"/><path d="M404.8 620.6V635.4" stroke="#ff0000" stroke-width="1.4"/><rect x="403.8" y="625.6" width="2" height="9.9" fill="#ff0000"/><rect x="404.5" y="629.7" width="3.6" height="1.6" fill="#f0f060"/><path d="M409.5 635.4V645.3" stroke="#0a80f4" stroke-width="1.4"/><rect x="408.5" y="635.4" width="2" height="4.9" fill="#0a80f4"/><rect x="409.3" y="639.6" width="3.6" height="1.6" fill="#f0f060"/><rect x="416.4" y="635.4" width="2" height="4.9" fill="#0a80f4"/><path d="M423.7 645.3V655.2" stroke="#0a80f4" stroke-width="1.4"/><rect x="422.7" y="645.3" width="2" height="4.9" fill="#0a80f4"/><rect x="424.3" y="645.3" width="2" height="4.9" fill="#0a80f4"/><rect x="425.1" y="654.4" width="3.6" height="1.6" fill="#f0f060"/><rect x="426.6" y="659.3" width="3.6" height="1.6" fill="#f0f060"/><rect x="431.4" y="669.2" width="3.6" height="1.6" fill="#f0f060"/><rect x="432.9" y="664.2" width="3.6" height="1.6" fill="#f0f060"/><rect x="434.5" y="664.2" width="3.6" height="1.6" fill="#f0f060"/><rect x="436.1" y="664.2" width="3.6" height="1.6" fill="#f0f060"/><rect x="437.7" y="659.3" width="3.6" height="1.6" fill="#f0f060"/><rect x="440.8" y="669.2" width="3.6" height="1.6" fill="#f0f060"/><rect x="444.8" y="665" width="2" height="4.9" fill="#0a80f4"/><rect x="447.1" y="669.2" width="3.6" height="1.6" fill="#f0f060"/><path d="M450.5 670V674.9" stroke="#f0f060" stroke-width="1.4"/><rect x="448.7" y="674.1" width="3.6" height="1.6" fill="#f0f060"/><path d="M452.1 665V674.9" stroke="#ff0000" stroke-width="1.4"/><rect x="451.1" y="670" width="2" height="4.9" fill="#ff0000"/><rect x="451.9" y="664.2" width="3.6" height="1.6" fill="#f0f060"/><rect x="455" y="664.2" width="3.6" height="1.6" fill="#f0f060"/><rect x="462.2" y="665" width="2" height="4.9" fill="#ff0000"/><rect x="466.1" y="649.4" width="3.6" height="1.6" fill="#f0f060"/><rect x="467.7" y="654.4" width="3.6" height="1.6" fill="#f0f060"/><rect x="471.6" y="655.2" width="2" height="4.9" fill="#ff0000"/><rect x="472.4" y="649.4" width="3.6" height="1.6" fill="#f0f060"/><rect x="474" y="649.4" width="3.6" height="1.6" fill="#f0f060"/><rect x="478.7" y="644.5" width="3.6" height="1.6" fill="#f0f060"/><rect x="481.1" y="645.3" width="2" height="4.9" fill="#ff0000"/><rect x="481.9" y="634.6" width="3.6" height="1.6" fill="#f0f060"/><rect x="485" y="639.6" width="3.6" height="1.6" fill="#f0f060"/><rect x="489" y="640.4" width="2" height="4.9" fill="#0a80f4"/><rect x="491.3" y="649.4" width="3.6" height="1.6" fill="#f0f060"/><rect x="492.9" y="649.4" width="3.6" height="1.6" fill="#f0f060"/><path d="M496.3 650.2V655.2" stroke="#f0f060" stroke-width="1.4"/><rect x="494.5" y="654.4" width="3.6" height="1.6" fill="#f0f060"/><rect x="496.1" y="654.4" width="3.6" height="1.6" fill="#f0f060"/><rect x="498.4" y="650.2" width="2" height="4.9" fill="#ff0000"/><path d="M501 650.2V655.2" stroke="#f0f060" stroke-width="1.4"/><rect x="499.2" y="649.4" width="3.6" height="1.6" fill="#f0f060"/><rect x="504.8" y="650.2" width="2" height="4.9" fill="#0a80f4"/><rect x="505.5" y="659.3" width="3.6" height="1.6" fill="#f0f060"/><rect x="508.7" y="654.4" width="3.6" height="1.6" fill="#f0f060"/><rect x="510.3" y="659.3" width="3.6" height="1.6" fill="#f0f060"/><path d="M515.2 650.2V655.2" stroke="#f0f060" stroke-width="1.4"/><rect x="513.4" y="654.4" width="3.6" height="1.6" fill="#f0f060"/><rect x="515" y="649.4" width="3.6" height="1.6" fill="#f0f060"/><rect x="516.6" y="639.6" width="3.6" height="1.6" fill="#f0f060"/><rect x="519" y="645.3" width="2" height="4.9" fill="#ff0000"/><rect x="522.1" y="640.4" width="2" height="4.9" fill="#ff0000"/><rect x="523.7" y="640.4" width="2" height="4.9" fill="#0a80f4"/><rect x="525.3" y="635.4" width="2" height="4.9" fill="#0a80f4"/><rect x="526.1" y="634.6" width="3.6" height="1.6" fill="#f0f060"/><rect x="531.6" y="625.6" width="2" height="4.9" fill="#0a80f4"/><rect x="532.4" y="629.7" width="3.6" height="1.6" fill="#f0f060"/><rect x="533.9" y="629.7" width="3.6" height="1.6" fill="#f0f060"/><rect x="537.1" y="624.8" width="3.6" height="1.6" fill="#f0f060"/><path d="M540.5 625.6V635.4" stroke="#ff0000" stroke-width="1.4"/><rect x="539.5" y="625.6" width="2" height="4.9" fill="#ff0000"/><rect x="540.3" y="614.9" width="3.6" height="1.6" fill="#f0f060"/><rect x="541.8" y="624.8" width="3.6" height="1.6" fill="#f0f060"/><rect x="543.4" y="624.8" width="3.6" height="1.6" fill="#f0f060"/><path d="M546.8 620.6V625.6" stroke="#f0f060" stroke-width="1.4"/><rect x="545" y="619.9" width="3.6" height="1.6" fill="#f0f060"/><rect x="550.5" y="620.6" width="2" height="4.9" fill="#0a80f4"/><rect x="551.3" y="619.9" width="3.6" height="1.6" fill="#f0f060"/><rect x="552.9" y="619.9" width="3.6" height="1.6" fill="#f0f060"/><rect x="556" y="619.9" width="3.6" height="1.6" fill="#f0f060"/><rect x="560.8" y="629.7" width="3.6" height="1.6" fill="#f0f060"/><rect x="562.4" y="639.6" width="3.6" height="1.6" fill="#f0f060"/><rect x="563.9" y="639.6" width="3.6" height="1.6" fill="#f0f060"/><path d="M567.3 635.4V640.4" stroke="#f0f060" stroke-width="1.4"/><rect x="565.5" y="639.6" width="3.6" height="1.6" fill="#f0f060"/><rect x="567.1" y="644.5" width="3.6" height="1.6" fill="#f0f060"/><rect x="571.8" y="639.6" width="3.6" height="1.6" fill="#f0f060"/><rect x="575.8" y="640.4" width="2" height="4.9" fill="#ff0000"/><rect x="576.6" y="639.6" width="3.6" height="1.6" fill="#f0f060"/><rect x="578.1" y="644.5" width="3.6" height="1.6" fill="#f0f060"/><rect x="581.3" y="634.6" width="3.6" height="1.6" fill="#f0f060"/><rect x="582.9" y="634.6" width="3.6" height="1.6" fill="#f0f060"/><rect x="585.2" y="635.4" width="2" height="4.9" fill="#0a80f4"/><path d="M597.3 640.4V650.2" stroke="#ff0000" stroke-width="1.4"/><rect x="596.3" y="640.4" width="2" height="4.9" fill="#ff0000"/><rect x="600.2" y="639.6" width="3.6" height="1.6" fill="#f0f060"/><rect x="605" y="639.6" width="3.6" height="1.6" fill="#f0f060"/><rect x="607.3" y="635.4" width="2" height="4.9" fill="#0a80f4"/><path d="M609.9 635.4V645.3" stroke="#f0f060" stroke-width="1.4"/><rect x="608.1" y="639.6" width="3.6" height="1.6" fill="#f0f060"/><path d="M611.5 640.4V650.2" stroke="#0a80f4" stroke-width="1.4"/><rect x="610.5" y="640.4" width="2" height="4.9" fill="#0a80f4"/><rect x="612.1" y="645.3" width="2" height="4.9" fill="#ff0000"/><rect x="613.7" y="645.3" width="2" height="4.9" fill="#0a80f4"/><path d="M616.2 635.4V640.4" stroke="#f0f060" stroke-width="1.4"/><rect x="614.4" y="639.6" width="3.6" height="1.6" fill="#f0f060"/><rect x="616" y="634.6" width="3.6" height="1.6" fill="#f0f060"/><rect x="620.7" y="639.6" width="3.6" height="1.6" fill="#f0f060"/><path d="M624.1 635.4V645.3" stroke="#ff0000" stroke-width="1.4"/><rect x="623.1" y="640.4" width="2" height="4.9" fill="#ff0000"/><rect x="623.9" y="639.6" width="3.6" height="1.6" fill="#f0f060"/><rect x="627.1" y="634.6" width="3.6" height="1.6" fill="#f0f060"/><rect x="631.8" y="629.7" width="3.6" height="1.6" fill="#f0f060"/><rect x="633.4" y="629.7" width="3.6" height="1.6" fill="#f0f060"/><rect x="637.3" y="620.6" width="2" height="4.9" fill="#0a80f4"/><rect x="639.7" y="624.8" width="3.6" height="1.6" fill="#f0f060"/><rect x="641.3" y="629.7" width="3.6" height="1.6" fill="#f0f060"/><rect x="642.8" y="634.6" width="3.6" height="1.6" fill="#f0f060"/><rect x="645.2" y="635.4" width="2" height="4.9" fill="#0a80f4"/><rect x="646.8" y="640.4" width="2" height="4.9" fill="#ff0000"/><rect x="651.5" y="635.4" width="2" height="4.9" fill="#ff0000"/><rect x="652.3" y="634.6" width="3.6" height="1.6" fill="#f0f060"/><path d="M655.7 640.4V645.3" stroke="#f0f060" stroke-width="1.4"/><rect x="653.9" y="639.6" width="3.6" height="1.6" fill="#f0f060"/><rect x="655.5" y="644.5" width="3.6" height="1.6" fill="#f0f060"/><rect x="662.6" y="625.6" width="2" height="4.9" fill="#0a80f4"/><rect x="664.9" y="629.7" width="3.6" height="1.6" fill="#f0f060"/><path d="M669.9 630.5V640.4" stroke="#0a80f4" stroke-width="1.4"/><rect x="668.9" y="630.5" width="2" height="4.9" fill="#0a80f4"/><rect x="673.6" y="630.5" width="2" height="4.9" fill="#ff0000"/><rect x="675.2" y="620.6" width="2" height="4.9" fill="#ff0000"/><rect x="676" y="619.9" width="3.6" height="1.6" fill="#f0f060"/><rect x="677.6" y="614.9" width="3.6" height="1.6" fill="#f0f060"/><rect x="679.1" y="610" width="3.6" height="1.6" fill="#f0f060"/><rect x="680.7" y="614.9" width="3.6" height="1.6" fill="#f0f060"/><rect x="683.1" y="615.7" width="2" height="4.9" fill="#ff0000"/><rect x="683.9" y="610" width="3.6" height="1.6" fill="#f0f060"/><rect x="685.4" y="605.1" width="3.6" height="1.6" fill="#f0f060"/><rect x="688.6" y="600.1" width="3.6" height="1.6" fill="#f0f060"/><rect x="694.1" y="591.1" width="2" height="4.9" fill="#0a80f4"/><rect x="694.9" y="600.1" width="3.6" height="1.6" fill="#f0f060"/><rect x="697.3" y="591.1" width="2" height="4.9" fill="#ff0000"/><rect x="699.7" y="595.2" width="3.6" height="1.6" fill="#f0f060"/><rect x="706" y="595.2" width="3.6" height="1.6" fill="#f0f060"/><rect x="707.5" y="595.2" width="3.6" height="1.6" fill="#f0f060"/><rect x="709.1" y="595.2" width="3.6" height="1.6" fill="#f0f060"/><rect x="710.7" y="600.1" width="3.6" height="1.6" fill="#f0f060"/><rect x="712.3" y="600.1" width="3.6" height="1.6" fill="#f0f060"/><path d="M715.7 600.9V605.9" stroke="#f0f060" stroke-width="1.4"/><rect x="713.9" y="605.1" width="3.6" height="1.6" fill="#f0f060"/><rect x="715.4" y="610" width="3.6" height="1.6" fill="#f0f060"/><path d="M718.8 610.8V620.6" stroke="#ff0000" stroke-width="1.4"/><rect x="717.8" y="610.8" width="2" height="4.9" fill="#ff0000"/><rect x="720.2" y="605.1" width="3.6" height="1.6" fill="#f0f060"/><rect x="721.7" y="605.1" width="3.6" height="1.6" fill="#f0f060"/><rect x="723.3" y="605.1" width="3.6" height="1.6" fill="#f0f060"/><path d="M726.7 605.9V610.8" stroke="#f0f060" stroke-width="1.4"/><rect x="724.9" y="605.1" width="3.6" height="1.6" fill="#f0f060"/><rect x="726.5" y="605.1" width="3.6" height="1.6" fill="#f0f060"/><rect x="728.1" y="610" width="3.6" height="1.6" fill="#f0f060"/><rect x="735.9" y="614.9" width="3.6" height="1.6" fill="#f0f060"/><rect x="740.7" y="624.8" width="3.6" height="1.6" fill="#f0f060"/><rect x="745.4" y="624.8" width="3.6" height="1.6" fill="#f0f060"/><rect x="751" y="615.7" width="2" height="14.8" fill="#0a80f4"/><rect x="754.9" y="644.5" width="3.6" height="1.6" fill="#f0f060"/><rect x="757.3" y="635.4" width="2" height="4.9" fill="#ff0000"/><rect x="759.6" y="624.8" width="3.6" height="1.6" fill="#f0f060"/><rect x="764.4" y="619.9" width="3.6" height="1.6" fill="#f0f060"/><rect x="772.2" y="610" width="3.6" height="1.6" fill="#f0f060"/><rect x="776.2" y="600.9" width="2" height="14.8" fill="#ff0000"/><rect x="777" y="590.3" width="3.6" height="1.6" fill="#f0f060"/><rect x="778.6" y="590.3" width="3.6" height="1.6" fill="#f0f060"/><rect x="780.1" y="595.2" width="3.6" height="1.6" fill="#f0f060"/><rect x="782.5" y="600.9" width="2" height="4.9" fill="#0a80f4"/><rect x="783.3" y="600.1" width="3.6" height="1.6" fill="#f0f060"/><rect x="793.6" y="576.3" width="2" height="4.9" fill="#ff0000"/><rect x="795.9" y="565.6" width="3.6" height="1.6" fill="#f0f060"/><rect x="802.2" y="570.6" width="3.6" height="1.6" fill="#f0f060"/><rect x="807" y="565.6" width="3.6" height="1.6" fill="#f0f060"/><rect x="809.3" y="576.3" width="2" height="4.9" fill="#0a80f4"/><path d="M811.9 586.1V591.1" stroke="#f0f060" stroke-width="1.4"/><rect x="810.1" y="590.3" width="3.6" height="1.6" fill="#f0f060"/><rect x="811.7" y="590.3" width="3.6" height="1.6" fill="#f0f060"/><rect x="813.3" y="585.3" width="3.6" height="1.6" fill="#f0f060"/><rect x="815.7" y="591.1" width="2" height="4.9" fill="#ff0000"/><rect x="819.6" y="590.3" width="3.6" height="1.6" fill="#f0f060"/><rect x="825.1" y="576.3" width="2" height="9.9" fill="#ff0000"/><rect x="834.6" y="591.1" width="2" height="9.9" fill="#0a80f4"/><rect x="836.9" y="610" width="3.6" height="1.6" fill="#f0f060"/><path d="M845.1 615.7V620.6" stroke="#f0f060" stroke-width="1.4"/><rect x="843.3" y="614.9" width="3.6" height="1.6" fill="#f0f060"/><path d="M849.8 610.8V615.7" stroke="#f0f060" stroke-width="1.4"/><rect x="848" y="610" width="3.6" height="1.6" fill="#f0f060"/><rect x="850.4" y="600.9" width="2" height="4.9" fill="#0a80f4"/><rect x="852.7" y="610" width="3.6" height="1.6" fill="#f0f060"/><path d="M856.1 610.8V615.7" stroke="#f0f060" stroke-width="1.4"/><rect x="854.3" y="610" width="3.6" height="1.6" fill="#f0f060"/><path d="M859.3 610.8V615.7" stroke="#f0f060" stroke-width="1.4"/><rect x="857.5" y="610" width="3.6" height="1.6" fill="#f0f060"/><rect x="859" y="605.1" width="3.6" height="1.6" fill="#f0f060"/><rect x="861.4" y="605.9" width="2" height="4.9" fill="#ff0000"/><rect x="1160.5" y="575.5" width="3.6" height="1.6" fill="#f0f060"/><rect x="1162.8" y="571.4" width="2" height="4.9" fill="#ff0000"/><rect x="1164.4" y="566.4" width="2" height="4.9" fill="#0a80f4"/><rect x="1165.2" y="565.6" width="3.6" height="1.6" fill="#f0f060"/><rect x="1166.8" y="560.7" width="3.6" height="1.6" fill="#f0f060"/><rect x="1169.9" y="570.6" width="3.6" height="1.6" fill="#f0f060"/><path d="M1173.3 566.4V576.3" stroke="#0a80f4" stroke-width="1.4"/><rect x="1172.3" y="571.4" width="2" height="4.9" fill="#0a80f4"/><rect x="1173.1" y="580.4" width="3.6" height="1.6" fill="#f0f060"/><rect x="1175.5" y="571.4" width="2" height="4.9" fill="#ff0000"/><rect x="1180.2" y="556.6" width="2" height="4.9" fill="#0a80f4"/><rect x="1181.8" y="566.4" width="2" height="4.9" fill="#ff0000"/><rect x="1183.4" y="556.6" width="2" height="4.9" fill="#ff0000"/><path d="M1185.9 541.8V566.4" stroke="#ff0000" stroke-width="1.4"/><rect x="1184.9" y="541.8" width="2" height="14.8" fill="#ff0000"/><rect x="1188.1" y="522" width="2" height="9.9" fill="#ff0000"/><path d="M1190.7 512.2V522" stroke="#ff0000" stroke-width="1.4"/><rect x="1189.7" y="512.2" width="2" height="4.9" fill="#ff0000"/><rect x="1191.3" y="487.5" width="2" height="29.6" fill="#0a80f4"/><rect x="1192.8" y="522" width="2" height="9.9" fill="#0a80f4"/><path d="M1200.1 561.5V571.4" stroke="#f0f060" stroke-width="1.4"/><rect x="1198.3" y="560.7" width="3.6" height="1.6" fill="#f0f060"/><path d="M1201.7 556.6V561.5" stroke="#f0f060" stroke-width="1.4"/><rect x="1199.9" y="555.8" width="3.6" height="1.6" fill="#f0f060"/><rect x="1201.5" y="555.8" width="3.6" height="1.6" fill="#f0f060"/><path d="M1204.9 556.6V561.5" stroke="#f0f060" stroke-width="1.4"/><rect x="1203.1" y="555.8" width="3.6" height="1.6" fill="#f0f060"/><rect x="1204.7" y="555.8" width="3.6" height="1.6" fill="#f0f060"/><rect x="1206.2" y="555.8" width="3.6" height="1.6" fill="#f0f060"/><rect x="1208.6" y="551.6" width="2" height="4.9" fill="#ff0000"/><path d="M1211.2 541.8V551.6" stroke="#ff0000" stroke-width="1.4"/><rect x="1210.2" y="541.8" width="2" height="4.9" fill="#ff0000"/><rect x="1211.8" y="546.7" width="2" height="4.9" fill="#ff0000"/><rect x="1212.5" y="541" width="3.6" height="1.6" fill="#f0f060"/><rect x="1216.5" y="551.6" width="2" height="4.9" fill="#0a80f4"/><rect x="1218.1" y="556.6" width="2" height="4.9" fill="#0a80f4"/><rect x="1221.2" y="561.5" width="2" height="4.9" fill="#0a80f4"/><rect x="1222.8" y="556.6" width="2" height="4.9" fill="#ff0000"/><rect x="1226" y="551.6" width="2" height="9.9" fill="#ff0000"/><path d="M1228.6 546.7V556.6" stroke="#ff0000" stroke-width="1.4"/><rect x="1227.6" y="546.7" width="2" height="4.9" fill="#ff0000"/><path d="M1234.9 546.7V551.6" stroke="#f0f060" stroke-width="1.4"/><rect x="1233.1" y="545.9" width="3.6" height="1.6" fill="#f0f060"/><rect x="1234.6" y="545.9" width="3.6" height="1.6" fill="#f0f060"/><rect x="1238.6" y="546.7" width="2" height="4.9" fill="#ff0000"/><rect x="1240.2" y="536.8" width="2" height="14.8" fill="#0a80f4"/><rect x="1241" y="565.6" width="3.6" height="1.6" fill="#f0f060"/><path d="M1245.9 556.6V566.4" stroke="#ff0000" stroke-width="1.4"/><rect x="1244.9" y="561.5" width="2" height="4.9" fill="#ff0000"/><rect x="1247.3" y="560.7" width="3.6" height="1.6" fill="#f0f060"/><rect x="1251.2" y="561.5" width="2" height="4.9" fill="#ff0000"/><rect x="1252.8" y="556.6" width="2" height="4.9" fill="#ff0000"/><rect x="1254.4" y="551.6" width="2" height="4.9" fill="#0a80f4"/><rect x="1257.5" y="571.4" width="2" height="4.9" fill="#0a80f4"/><rect x="1259.1" y="576.3" width="2" height="9.9" fill="#0a80f4"/><rect x="1263.8" y="581.2" width="2" height="4.9" fill="#ff0000"/><rect x="1264.6" y="580.4" width="3.6" height="1.6" fill="#f0f060"/><rect x="1267" y="576.3" width="2" height="9.9" fill="#ff0000"/><rect x="1268.6" y="566.4" width="2" height="14.8" fill="#ff0000"/><rect x="1270.2" y="556.6" width="2" height="4.9" fill="#ff0000"/><rect x="1272.5" y="555.8" width="3.6" height="1.6" fill="#f0f060"/><rect x="1274.9" y="551.6" width="2" height="4.9" fill="#ff0000"/><rect x="1276.5" y="546.7" width="2" height="4.9" fill="#0a80f4"/><rect x="1277.3" y="545.9" width="3.6" height="1.6" fill="#f0f060"/><rect x="1281.2" y="536.8" width="2" height="9.9" fill="#ff0000"/><path d="M1285.4 541.8V556.6" stroke="#0a80f4" stroke-width="1.4"/><rect x="1284.4" y="541.8" width="2" height="9.9" fill="#0a80f4"/><rect x="1285.1" y="550.8" width="3.6" height="1.6" fill="#f0f060"/><rect x="1287.5" y="541.8" width="2" height="9.9" fill="#0a80f4"/><rect x="1288.3" y="555.8" width="3.6" height="1.6" fill="#f0f060"/><rect x="1290.7" y="551.6" width="2" height="4.9" fill="#ff0000"/><rect x="1292.3" y="546.7" width="2" height="4.9" fill="#0a80f4"/><path d="M1294.8 541.8V551.6" stroke="#ff0000" stroke-width="1.4"/><rect x="1293.8" y="546.7" width="2" height="4.9" fill="#ff0000"/><rect x="1297" y="541.8" width="2" height="4.9" fill="#ff0000"/><rect x="1298.6" y="541.8" width="2" height="4.9" fill="#0a80f4"/><rect x="1300.1" y="546.7" width="2" height="4.9" fill="#ff0000"/><rect x="1300.9" y="545.9" width="3.6" height="1.6" fill="#f0f060"/><path d="M1304.3 546.7V551.6" stroke="#f0f060" stroke-width="1.4"/><rect x="1302.5" y="545.9" width="3.6" height="1.6" fill="#f0f060"/><rect x="1305.7" y="536" width="3.6" height="1.6" fill="#f0f060"/><rect x="1308" y="531.9" width="2" height="4.9" fill="#0a80f4"/><rect x="1308.8" y="536" width="3.6" height="1.6" fill="#f0f060"/><rect x="1312.8" y="531.9" width="2" height="14.8" fill="#ff0000"/><path d="M1315.4 507.3V522" stroke="#ff0000" stroke-width="1.4"/><rect x="1314.4" y="517.1" width="2" height="4.9" fill="#ff0000"/><rect x="1315.1" y="511.4" width="3.6" height="1.6" fill="#f0f060"/><path d="M1320.1 512.2V517.1" stroke="#f0f060" stroke-width="1.4"/><rect x="1318.3" y="516.3" width="3.6" height="1.6" fill="#f0f060"/><rect x="1320.7" y="522" width="2" height="4.9" fill="#ff0000"/><path d="M1326.4 507.3V522" stroke="#f0f060" stroke-width="1.4"/><rect x="1324.6" y="516.3" width="3.6" height="1.6" fill="#f0f060"/><rect x="1326.2" y="516.3" width="3.6" height="1.6" fill="#f0f060"/><rect x="1328.6" y="522" width="2" height="4.9" fill="#ff0000"/><path d="M1332.7 512.2V522" stroke="#0a80f4" stroke-width="1.4"/><rect x="1331.7" y="517.1" width="2" height="4.9" fill="#0a80f4"/><path d="M1335.9 512.2V531.9" stroke="#ff0000" stroke-width="1.4"/><rect x="1334.9" y="512.2" width="2" height="9.9" fill="#ff0000"/><path d="M1337.4 507.3V517.1" stroke="#ff0000" stroke-width="1.4"/><rect x="1336.4" y="507.3" width="2" height="4.9" fill="#ff0000"/><rect x="1339.6" y="507.3" width="2" height="4.9" fill="#ff0000"/><rect x="1341.2" y="502.3" width="2" height="4.9" fill="#ff0000"/><path d="M1343.8 497.4V502.3" stroke="#f0f060" stroke-width="1.4"/><rect x="1342" y="496.6" width="3.6" height="1.6" fill="#f0f060"/><path d="M1345.3 487.5V497.4" stroke="#0a80f4" stroke-width="1.4"/><rect x="1344.3" y="492.5" width="2" height="4.9" fill="#0a80f4"/><rect x="1352.2" y="502.3" width="2" height="9.9" fill="#ff0000"/><path d="M1354.8 492.5V502.3" stroke="#ff0000" stroke-width="1.4"/><rect x="1353.8" y="497.4" width="2" height="4.9" fill="#ff0000"/><rect x="1356.2" y="486.7" width="3.6" height="1.6" fill="#f0f060"/><path d="M1361.1 492.5V502.3" stroke="#0a80f4" stroke-width="1.4"/><rect x="1360.1" y="497.4" width="2" height="4.9" fill="#0a80f4"/><rect x="1361.7" y="507.3" width="2" height="4.9" fill="#ff0000"/><rect x="1362.5" y="501.5" width="3.6" height="1.6" fill="#f0f060"/><rect x="1364.9" y="492.5" width="2" height="4.9" fill="#0a80f4"/><rect x="1366.4" y="492.5" width="2" height="4.9" fill="#0a80f4"/><rect x="1368.8" y="496.6" width="3.6" height="1.6" fill="#f0f060"/><path d="M1372.2 497.4V502.3" stroke="#f0f060" stroke-width="1.4"/><rect x="1370.4" y="501.5" width="3.6" height="1.6" fill="#f0f060"/><rect x="1371.9" y="501.5" width="3.6" height="1.6" fill="#f0f060"/><rect x="1374.3" y="487.5" width="2" height="9.9" fill="#0a80f4"/><rect x="1375.9" y="487.5" width="2" height="9.9" fill="#ff0000"/><rect x="1379.1" y="482.6" width="2" height="4.9" fill="#ff0000"/><rect x="1379.8" y="476.9" width="3.6" height="1.6" fill="#f0f060"/><rect x="1381.4" y="476.9" width="3.6" height="1.6" fill="#f0f060"/><path d="M1384.8 472.8V477.7" stroke="#f0f060" stroke-width="1.4"/><rect x="1383" y="471.9" width="3.6" height="1.6" fill="#f0f060"/><rect x="1384.6" y="467" width="3.6" height="1.6" fill="#f0f060"/><path d="M1389.5 467.8V482.6" stroke="#0a80f4" stroke-width="1.4"/><rect x="1388.5" y="467.8" width="2" height="9.9" fill="#0a80f4"/><rect x="1392.5" y="486.7" width="3.6" height="1.6" fill="#f0f060"/><path d="M1395.8 482.6V492.5" stroke="#ff0000" stroke-width="1.4"/><rect x="1394.8" y="487.5" width="2" height="4.9" fill="#ff0000"/><rect x="1396.4" y="482.6" width="2" height="14.8" fill="#ff0000"/><rect x="1399.6" y="467.8" width="2" height="4.9" fill="#ff0000"/><rect x="1401.1" y="467.8" width="2" height="4.9" fill="#0a80f4"/><rect x="1401.9" y="471.9" width="3.6" height="1.6" fill="#f0f060"/><path d="M1406.9 477.7V482.6" stroke="#f0f060" stroke-width="1.4"/><rect x="1405.1" y="481.8" width="3.6" height="1.6" fill="#f0f060"/><rect x="1408.2" y="481.8" width="3.6" height="1.6" fill="#f0f060"/><path d="M1416.4 467.8V477.7" stroke="#ff0000" stroke-width="1.4"/><rect x="1415.4" y="467.8" width="2" height="4.9" fill="#ff0000"/><rect x="1418.5" y="462.9" width="2" height="14.8" fill="#0a80f4"/><rect x="1420.9" y="486.7" width="3.6" height="1.6" fill="#f0f060"/><rect x="1424.8" y="482.6" width="2" height="4.9" fill="#ff0000"/><rect x="1429.6" y="482.6" width="2" height="4.9" fill="#ff0000"/><rect x="1430.3" y="476.9" width="3.6" height="1.6" fill="#f0f060"/><rect x="1431.9" y="476.9" width="3.6" height="1.6" fill="#f0f060"/><rect x="1435.9" y="472.8" width="2" height="4.9" fill="#ff0000"/><path d="M1438.4 467.8V477.7" stroke="#ff0000" stroke-width="1.4"/><rect x="1437.4" y="467.8" width="2" height="4.9" fill="#ff0000"/><path d="M1440 462.9V472.8" stroke="#0a80f4" stroke-width="1.4"/><rect x="1439" y="462.9" width="2" height="4.9" fill="#0a80f4"/><rect x="1450.1" y="443.2" width="2" height="4.9" fill="#ff0000"/><rect x="1450.8" y="437.4" width="3.6" height="1.6" fill="#f0f060"/><rect x="1453.2" y="428.4" width="2" height="4.9" fill="#0a80f4"/><rect x="1456.4" y="428.4" width="2" height="4.9" fill="#ff0000"/><rect x="1458" y="423.5" width="2" height="4.9" fill="#0a80f4"/><rect x="1458.7" y="437.4" width="3.6" height="1.6" fill="#f0f060"/><rect x="1461.1" y="433.3" width="2" height="4.9" fill="#ff0000"/><rect x="1465.1" y="427.6" width="3.6" height="1.6" fill="#f0f060"/><rect x="1476.1" y="442.4" width="3.6" height="1.6" fill="#f0f060"/><path d="M1479.5 438.2V448.1" stroke="#f0f060" stroke-width="1.4"/><rect x="1477.7" y="447.3" width="3.6" height="1.6" fill="#f0f060"/><rect x="1480.8" y="457.2" width="3.6" height="1.6" fill="#f0f060"/><path d="M1487.4 458V472.8" stroke="#ff0000" stroke-width="1.4"/><rect x="1486.4" y="462.9" width="2" height="9.9" fill="#ff0000"/><rect x="1487.9" y="458" width="2" height="4.9" fill="#ff0000"/><rect x="1490.3" y="442.4" width="3.6" height="1.6" fill="#f0f060"/><path d="M1493.7 428.4V433.3" stroke="#f0f060" stroke-width="1.4"/><rect x="1491.9" y="432.5" width="3.6" height="1.6" fill="#f0f060"/><rect x="1495.8" y="433.3" width="2" height="4.9" fill="#0a80f4"/><rect x="1497.4" y="443.2" width="2" height="4.9" fill="#0a80f4"/><rect x="1500.6" y="448.1" width="2" height="9.9" fill="#0a80f4"/><rect x="1506.9" y="477.7" width="2" height="4.9" fill="#ff0000"/><rect x="1507.7" y="467" width="3.6" height="1.6" fill="#f0f060"/><rect x="1510" y="467.8" width="2" height="4.9" fill="#ff0000"/><path d="M1512.6 472.8V477.7" stroke="#f0f060" stroke-width="1.4"/><rect x="1510.8" y="471.9" width="3.6" height="1.6" fill="#f0f060"/><rect x="1512.4" y="467" width="3.6" height="1.6" fill="#f0f060"/><rect x="1515.6" y="467" width="3.6" height="1.6" fill="#f0f060"/><path d="M1518.9 462.9V472.8" stroke="#0a80f4" stroke-width="1.4"/><rect x="1517.9" y="467.8" width="2" height="4.9" fill="#0a80f4"/><rect x="1519.5" y="458" width="2" height="14.8" fill="#0a80f4"/><path d="M1522.1 467.8V472.8" stroke="#f0f060" stroke-width="1.4"/><rect x="1520.3" y="467" width="3.6" height="1.6" fill="#f0f060"/><rect x="1527.4" y="453" width="2" height="4.9" fill="#ff0000"/><rect x="1528.2" y="452.2" width="3.6" height="1.6" fill="#f0f060"/><rect x="1534.5" y="452.2" width="3.6" height="1.6" fill="#f0f060"/><path d="M1548.9 462.9V472.8" stroke="#f0f060" stroke-width="1.4"/><rect x="1547.1" y="467" width="3.6" height="1.6" fill="#f0f060"/><rect x="1548.7" y="467" width="3.6" height="1.6" fill="#f0f060"/><rect x="1551.1" y="458" width="2" height="9.9" fill="#ff0000"/><rect x="1559.7" y="452.2" width="3.6" height="1.6" fill="#f0f060"/><rect x="1562.1" y="448.1" width="2" height="4.9" fill="#ff0000"/><rect x="1564.5" y="437.4" width="3.6" height="1.6" fill="#f0f060"/><rect x="1570" y="448.1" width="2" height="4.9" fill="#0a80f4"/><rect x="1573.2" y="448.1" width="2" height="4.9" fill="#0a80f4"/><rect x="1577.1" y="457.2" width="3.6" height="1.6" fill="#f0f060"/><rect x="1578.7" y="462.1" width="3.6" height="1.6" fill="#f0f060"/><rect x="1580.3" y="462.1" width="3.6" height="1.6" fill="#f0f060"/><rect x="1594.5" y="462.1" width="3.6" height="1.6" fill="#f0f060"/><path d="M1601 472.8V482.6" stroke="#ff0000" stroke-width="1.4"/><rect x="1600" y="472.8" width="2" height="4.9" fill="#ff0000"/><rect x="1601.6" y="467.8" width="2" height="4.9" fill="#0a80f4"/><rect x="1602.4" y="476.9" width="3.6" height="1.6" fill="#f0f060"/><rect x="1603.9" y="481.8" width="3.6" height="1.6" fill="#f0f060"/><rect x="1608.7" y="486.7" width="3.6" height="1.6" fill="#f0f060"/><rect x="1611" y="487.5" width="2" height="4.9" fill="#ff0000"/><rect x="1615" y="491.7" width="3.6" height="1.6" fill="#f0f060"/><rect x="1617.4" y="492.5" width="2" height="4.9" fill="#0a80f4"/><rect x="1618.1" y="491.7" width="3.6" height="1.6" fill="#f0f060"/><rect x="1621.3" y="496.6" width="3.6" height="1.6" fill="#f0f060"/><rect x="1624.4" y="506.5" width="3.6" height="1.6" fill="#f0f060"/><rect x="1627.6" y="496.6" width="3.6" height="1.6" fill="#f0f060"/><rect x="1632.3" y="496.6" width="3.6" height="1.6" fill="#f0f060"/><path d="M1643.6 507.3V512.2" stroke="#f0f060" stroke-width="1.4"/><rect x="1641.8" y="511.4" width="3.6" height="1.6" fill="#f0f060"/><path d="M1645.2 512.2V517.1" stroke="#f0f060" stroke-width="1.4"/><rect x="1643.4" y="511.4" width="3.6" height="1.6" fill="#f0f060"/><rect x="1648.9" y="517.1" width="2" height="4.9" fill="#ff0000"/><rect x="1653.7" y="522" width="2" height="9.9" fill="#0a80f4"/><rect x="1659.2" y="526.2" width="3.6" height="1.6" fill="#f0f060"/><rect x="1663.1" y="527" width="2" height="4.9" fill="#ff0000"/><rect x="1663.9" y="526.2" width="3.6" height="1.6" fill="#f0f060"/><rect x="1668.6" y="521.2" width="3.6" height="1.6" fill="#f0f060"/><rect x="1670.2" y="531.1" width="3.6" height="1.6" fill="#f0f060"/><rect x="1678.1" y="526.2" width="3.6" height="1.6" fill="#f0f060"/><rect x="1681.3" y="521.2" width="3.6" height="1.6" fill="#f0f060"/><rect x="1686" y="516.3" width="3.6" height="1.6" fill="#f0f060"/><rect x="1687.6" y="526.2" width="3.6" height="1.6" fill="#f0f060"/><rect x="1693.9" y="526.2" width="3.6" height="1.6" fill="#f0f060"/><path d="M1700.4 517.1V522" stroke="#f0f060" stroke-width="1.4"/><rect x="1698.6" y="521.2" width="3.6" height="1.6" fill="#f0f060"/><rect x="1701" y="517.1" width="2" height="4.9" fill="#0a80f4"/><rect x="1701.8" y="521.2" width="3.6" height="1.6" fill="#f0f060"/><rect x="1706.5" y="521.2" width="3.6" height="1.6" fill="#f0f060"/><rect x="96.8" y="591.3" width="3.3" height="32.8" fill="#0a80f4"/><rect x="92.5" y="607" width="1.5" height="12.7" fill="#0a80f4"/><rect x="88.8" y="611.5" width="1.5" height="8.2" fill="#ff0000"/><rect x="102.9" y="615.9" width="3" height="4.5" fill="#ff0000"/><rect x="114.3" y="620.4" width="2.7" height="4.5" fill="#0a80f4"/><rect x="120.5" y="631.6" width="2.2" height="9.7" fill="#0a80f4"/><rect x="125.4" y="620.4" width="2.2" height="11.2" fill="#ff0000"/><rect x="127.2" y="615.9" width="2.2" height="8.2" fill="#0a80f4"/><rect x="128.7" y="625.6" width="2.2" height="10.4" fill="#0a80f4"/><rect x="131.7" y="615.9" width="2.2" height="14.9" fill="#ff0000"/><rect x="134.6" y="615.9" width="2.2" height="9" fill="#0a80f4"/><rect x="167.2" y="615.9" width="2.7" height="4.5" fill="#0a80f4"/><rect x="178.3" y="615.9" width="1.5" height="4.5" fill="#0a80f4"/><rect x="190.5" y="615.9" width="1.5" height="4.5" fill="#ff0000"/><rect x="195.4" y="631.6" width="1.5" height="4.5" fill="#0a80f4"/><rect x="199.9" y="631.6" width="1.5" height="4.5" fill="#0a80f4"/><rect x="204.8" y="625.6" width="1.5" height="6" fill="#ff0000"/><rect x="215.6" y="615.9" width="1.5" height="9" fill="#ff0000"/><rect x="223" y="611.5" width="1.5" height="4.5" fill="#ff0000"/><rect x="234.2" y="611.5" width="1.5" height="4.5" fill="#ff0000"/><rect x="240.5" y="607" width="1.8" height="9" fill="#ff0000"/><rect x="245.1" y="611.5" width="1.5" height="13.4" fill="#0a80f4"/><rect x="251.4" y="620.4" width="1.5" height="4.5" fill="#ff0000"/><rect x="273.2" y="615.9" width="2.7" height="4.5" fill="#ff0000"/><rect x="295.5" y="620.4" width="2.7" height="4.5" fill="#ff0000"/><rect x="426.7" y="646.5" width="1.2" height="67.1" fill="#0a80f4"/><rect x="425.3" y="646.5" width="3.3" height="18.6" fill="#0a80f4"/><rect x="449.6" y="671.1" width="1.5" height="19.4" fill="#ff0000"/><rect x="515.7" y="636.1" width="1.5" height="29.8" fill="#ff0000"/><rect x="403.1" y="615.9" width="1.5" height="15.7" fill="#0a80f4"/><rect x="337" y="620.4" width="1.5" height="11.2" fill="#ff0000"/><rect x="471.3" y="651" width="1.5" height="14.9" fill="#0a80f4"/><rect x="525" y="636.1" width="1.5" height="13.4" fill="#ff0000"/><rect x="482.6" y="625.6" width="2.7" height="10.4" fill="#ff0000"/><rect x="486.2" y="636.1" width="3" height="9" fill="#0a80f4"/><rect x="459.7" y="654.7" width="2.2" height="10.4" fill="#ff0000"/><rect x="464.2" y="651" width="2.2" height="9.7" fill="#ff0000"/><rect x="448.9" y="662.9" width="6" height="11.9" fill="#0a80f4"/><rect x="415.7" y="636.8" width="2.2" height="4.5" fill="#0a80f4"/><rect x="295.6" y="620.4" width="2.2" height="4.5" fill="#ff0000"/><rect x="300.8" y="631.6" width="3.7" height="4.5" fill="#0a80f4"/><rect x="309.5" y="615.9" width="2.7" height="4.5" fill="#ff0000"/><rect x="314.8" y="611.5" width="2.7" height="4.5" fill="#ff0000"/><rect x="690.4" y="586.4" width="1.5" height="29.1" fill="#ff0000"/><rect x="739.3" y="607.3" width="2.1" height="32.1" fill="#0a80f4"/><rect x="780.5" y="591.6" width="1.8" height="14.9" fill="#0a80f4"/><rect x="787.5" y="572.2" width="2.7" height="13.4" fill="#ff0000"/><rect x="801.9" y="566.2" width="2.2" height="14.9" fill="#ff0000"/><rect x="810.5" y="586.4" width="1.5" height="14.9" fill="#0a80f4"/><rect x="676.2" y="616.2" width="1.5" height="9" fill="#ff0000"/><rect x="744.9" y="631.9" width="1.5" height="13.4" fill="#0a80f4"/><rect x="753.7" y="636.4" width="1.8" height="13.4" fill="#0a80f4"/><rect x="824.7" y="576.7" width="1.5" height="9" fill="#ff0000"/><rect x="778.3" y="581.9" width="1.8" height="14.2" fill="#ff0000"/><rect x="796.5" y="566.2" width="2.7" height="6" fill="#0a80f4"/><rect x="808" y="561.8" width="2.1" height="14.9" fill="#0a80f4"/><rect x="756.6" y="636.4" width="1.8" height="9" fill="#ff0000"/><rect x="697.9" y="586.4" width="1.5" height="9.7" fill="#0a80f4"/><rect x="713.5" y="602.1" width="1.5" height="9" fill="#0a80f4"/><rect x="721.7" y="602.1" width="1.5" height="9" fill="#0a80f4"/><rect x="1191.8" y="507.1" width="1.5" height="35.8" fill="#0a80f4"/><rect x="1196.3" y="542.9" width="2.1" height="22.4" fill="#0a80f4"/><rect x="1168.2" y="557.1" width="1.5" height="14.9" fill="#ff0000"/><rect x="1218.9" y="547.4" width="1.5" height="29.1" fill="#f0f060"/><rect x="1229.2" y="527.3" width="1.8" height="17.2" fill="#ff0000"/><rect x="1231.6" y="527.3" width="3" height="19.4" fill="#0a80f4"/><rect x="1275.3" y="546.7" width="2.1" height="14.2" fill="#ff0000"/><rect x="1285.8" y="566.1" width="1.5" height="10.4" fill="#ff0000"/><rect x="1306.2" y="522.1" width="1.5" height="13.4" fill="#ff0000"/><rect x="1315.2" y="501.9" width="1.5" height="15.7" fill="#ff0000"/><rect x="1335.3" y="498.2" width="3" height="14.9" fill="#ff0000"/><rect x="1332.8" y="517.6" width="2.1" height="13.4" fill="#ff0000"/><rect x="1361.3" y="501.9" width="1.8" height="15.7" fill="#ff0000"/><rect x="1375.3" y="483.3" width="2.1" height="14.2" fill="#ff0000"/><rect x="1377.1" y="472.8" width="3" height="14.9" fill="#0a80f4"/><rect x="1398.5" y="458.6" width="1.8" height="13.4" fill="#ff0000"/><rect x="1417" y="462.4" width="2.1" height="9.7" fill="#0a80f4"/><rect x="1437.2" y="457.9" width="2.1" height="13.4" fill="#ff0000"/><rect x="1443.5" y="447.5" width="1.5" height="14.9" fill="#ff0000"/><rect x="1187.5" y="514.6" width="1.8" height="26.9" fill="#ff0000"/><rect x="1225" y="542.9" width="2.7" height="20.9" fill="#0a80f4"/><rect x="1241.6" y="560.8" width="2.4" height="11.2" fill="#0a80f4"/><rect x="1262.6" y="577.3" width="2.1" height="12.7" fill="#ff0000"/><rect x="1260.4" y="586.2" width="2.1" height="9" fill="#0a80f4"/><rect x="1456" y="422.2" width="1.5" height="10.4" fill="#0a80f4"/><rect x="1460.4" y="428.9" width="1.5" height="13.4" fill="#0a80f4"/><rect x="1462.7" y="422.2" width="1.5" height="14.2" fill="#0a80f4"/><rect x="1467.2" y="422.2" width="1.5" height="10.4" fill="#0a80f4"/><rect x="1451.2" y="433.3" width="2.1" height="17.9" fill="#ff0000"/><rect x="1497.7" y="442.3" width="1.5" height="20.1" fill="#0a80f4"/><rect x="1499.7" y="447.5" width="1.5" height="10.4" fill="#ff0000"/><rect x="1504.2" y="467.7" width="1.5" height="9" fill="#ff0000"/><rect x="1502.5" y="462.4" width="1.5" height="9.7" fill="#0a80f4"/><rect x="1540.6" y="433.3" width="2.4" height="24.6" fill="#0a80f4"/><rect x="1545.5" y="458" width="2.4" height="14.2" fill="#0a80f4"/><rect x="1565.8" y="433.3" width="2.7" height="9" fill="#0a80f4"/><rect x="1584.3" y="472.1" width="2.4" height="10.4" fill="#0a80f4"/><rect x="1594" y="458" width="2.1" height="9" fill="#ff0000"/><rect x="1605.6" y="477.4" width="1.5" height="5.2" fill="#0a80f4"/><rect x="1611.9" y="487.8" width="1.5" height="4.5" fill="#0a80f4"/><rect x="1621.6" y="497.5" width="1.5" height="4.5" fill="#0a80f4"/><rect x="1652.6" y="522.1" width="1.5" height="9.7" fill="#0a80f4"/><rect x="1655.9" y="542.3" width="1.5" height="9.7" fill="#0a80f4"/><rect x="1697.8" y="517.6" width="2.7" height="4.5" fill="#ff0000"/><rect x="1709" y="517.6" width="2.7" height="4.5" fill="#ff0000"/><rect x="877.5" y="610.9" width="2.2" height="1.7" fill="#f0f060"/><rect x="886.8" y="581.4" width="3.7" height="1.7" fill="#f0f060"/><rect x="888.3" y="590.8" width="3.7" height="1.7" fill="#f0f060"/><rect x="901" y="586.3" width="3.7" height="1.7" fill="#f0f060"/><rect x="905.4" y="590.8" width="3.7" height="1.7" fill="#f0f060"/><rect x="906.9" y="595.7" width="3.7" height="1.7" fill="#f0f060"/><rect x="911" y="601.7" width="3" height="1.7" fill="#f0f060"/><rect x="912.1" y="610.9" width="3.7" height="1.7" fill="#f0f060"/><rect x="918.9" y="595.7" width="3.7" height="1.7" fill="#f0f060"/><rect x="920" y="606.4" width="4.5" height="1.7" fill="#f0f060"/><rect x="951.3" y="610.9" width="6" height="1.7" fill="#f0f060"/><rect x="960.3" y="610.9" width="3.7" height="1.7" fill="#f0f060"/><rect x="968.3" y="595.7" width="1.8" height="1.7" fill="#f0f060"/><rect x="971.3" y="595.7" width="1.8" height="1.7" fill="#f0f060"/><rect x="972.9" y="586.3" width="2.2" height="1.7" fill="#f0f060"/><rect x="990" y="586.3" width="2.2" height="1.7" fill="#f0f060"/><rect x="1000.2" y="595.7" width="3.7" height="1.7" fill="#f0f060"/><rect x="1002.4" y="606.4" width="2.2" height="1.7" fill="#f0f060"/><rect x="1019.6" y="572.1" width="2.2" height="1.7" fill="#f0f060"/><rect x="1022.5" y="581.4" width="2.2" height="1.7" fill="#f0f060"/><rect x="1026" y="586.3" width="1.8" height="1.7" fill="#f0f060"/><rect x="1031" y="595.7" width="1.8" height="1.7" fill="#f0f060"/><rect x="1034" y="595.7" width="1.8" height="1.7" fill="#f0f060"/><rect x="1047.9" y="586.3" width="3.7" height="1.7" fill="#f0f060"/><rect x="1050.9" y="590.8" width="3.7" height="1.7" fill="#f0f060"/><rect x="1059.1" y="595.7" width="3.7" height="1.7" fill="#f0f060"/><rect x="1077.4" y="576.6" width="3.7" height="1.7" fill="#f0f060"/><rect x="1085.2" y="586.3" width="3.7" height="1.7" fill="#f0f060"/><rect x="1090.8" y="595.7" width="6" height="1.7" fill="#f0f060"/><rect x="1106.2" y="590.8" width="4.5" height="1.7" fill="#f0f060"/><rect x="1107.5" y="581.9" width="1.8" height="9.7" fill="#f0f060"/><rect x="1111.8" y="606.4" width="3.7" height="1.7" fill="#f0f060"/><rect x="1119.7" y="606.4" width="3.7" height="1.7" fill="#f0f060"/><rect x="1141.6" y="586.3" width="2.2" height="1.7" fill="#f0f060"/><rect x="1143.1" y="590.8" width="2.2" height="1.7" fill="#f0f060"/><rect x="1149.4" y="581.4" width="2.2" height="1.7" fill="#f0f060"/><rect x="1152.3" y="576.6" width="2.2" height="1.7" fill="#f0f060"/><rect x="1158.6" y="576.6" width="2.2" height="1.7" fill="#f0f060"/><rect x="879.1" y="596.1" width="1.8" height="10.4" fill="#ff0000"/><rect x="896.6" y="596.1" width="3" height="5.7" fill="#ff0000"/><rect x="914" y="596.1" width="3" height="14.9" fill="#ff0000"/><rect x="1012" y="581.5" width="1.8" height="4.9" fill="#ff0000"/><rect x="1015" y="576.7" width="1.8" height="4.8" fill="#ff0000"/><rect x="1135.4" y="606.5" width="1.8" height="4.5" fill="#ff0000"/><rect x="1168" y="556.6" width="2.2" height="15.7" fill="#ff0000"/><rect x="1024.6" y="586.4" width="1.8" height="4.5" fill="#0a80f4"/><rect x="1130.6" y="596.1" width="1.8" height="10.4" fill="#0a80f4"/><rect x="1711.7" y="512.8" width="3" height="1.7" fill="#f0f060"/><rect x="1737.1" y="487.7" width="3" height="1.7" fill="#f0f060"/><rect x="1745.3" y="487.7" width="3" height="1.7" fill="#f0f060"/><rect x="1749.8" y="501.9" width="3" height="1.7" fill="#f0f060"/><rect x="1759.5" y="496.9" width="3" height="1.7" fill="#f0f060"/><rect x="1761.4" y="501.9" width="2.2" height="1.7" fill="#f0f060"/><rect x="1764.8" y="506.3" width="2.2" height="1.7" fill="#f0f060"/><rect x="1774.3" y="496.9" width="1.8" height="1.7" fill="#f0f060"/><rect x="1777" y="487.7" width="2.2" height="1.7" fill="#f0f060"/><rect x="1778.5" y="472" width="2.2" height="1.7" fill="#f0f060"/><rect x="1783.7" y="482.9" width="2.2" height="1.7" fill="#f0f060"/><rect x="1796.1" y="477" width="2.2" height="1.7" fill="#f0f060"/><rect x="1805.4" y="477" width="2.2" height="1.7" fill="#f0f060"/><rect x="1809.8" y="472" width="2.2" height="1.7" fill="#f0f060"/><rect x="1813.1" y="462.6" width="3.7" height="1.7" fill="#f0f060"/><rect x="1817.6" y="472" width="2.2" height="1.7" fill="#f0f060"/><rect x="1845.6" y="477" width="3.7" height="1.7" fill="#f0f060"/><rect x="1847.9" y="487.7" width="3.7" height="1.7" fill="#f0f060"/><rect x="1845.6" y="492.5" width="2.2" height="1.7" fill="#f0f060"/><rect x="1849.7" y="496.9" width="4.5" height="1.7" fill="#f0f060"/><rect x="1856.8" y="487.7" width="3.7" height="1.7" fill="#f0f060"/><rect x="1860.1" y="482.9" width="3.7" height="1.7" fill="#f0f060"/><rect x="1864.3" y="472" width="3.7" height="1.7" fill="#f0f060"/><rect x="1872.5" y="467.6" width="3.7" height="1.7" fill="#f0f060"/><rect x="1870.7" y="459.6" width="2.2" height="1.7" fill="#f0f060"/><rect x="1883.4" y="472" width="3.7" height="1.7" fill="#f0f060"/><rect x="1893" y="457.9" width="3" height="1.7" fill="#f0f060"/><rect x="1894.1" y="462.6" width="3.7" height="1.7" fill="#f0f060"/><rect x="1901.2" y="447.1" width="3" height="1.7" fill="#f0f060"/><rect x="1902.7" y="437.7" width="3" height="1.7" fill="#f0f060"/><rect x="1835.6" y="472" width="9.7" height="1.7" fill="#f0f060"/><rect x="1839.6" y="467.7" width="1.8" height="10.4" fill="#f0f060"/><rect x="1732.5" y="472.1" width="4.2" height="10.4" fill="#ff0000"/><rect x="1732.3" y="482.6" width="2.7" height="9.7" fill="#ff0000"/><rect x="1743.5" y="487.8" width="3" height="4.5" fill="#ff0000"/><rect x="1786.9" y="472.1" width="1.8" height="10.4" fill="#ff0000"/><rect x="1792.9" y="458" width="1.8" height="9" fill="#ff0000"/><rect x="1799.2" y="472.1" width="1.8" height="10.4" fill="#ff0000"/><rect x="1866.6" y="467.7" width="2.1" height="4.5" fill="#ff0000"/><rect x="1868.4" y="458" width="3" height="5.2" fill="#ff0000"/><rect x="1871.5" y="442.3" width="2.7" height="9.7" fill="#ff0000"/><rect x="1896.4" y="447.5" width="2.2" height="14.9" fill="#ff0000"/><rect x="1710.1" y="517.6" width="1.8" height="4.5" fill="#ff0000"/><rect x="1718.5" y="517.6" width="3" height="4.5" fill="#0a80f4"/><rect x="1746.2" y="497.5" width="2.7" height="9" fill="#0a80f4"/><rect x="1780.4" y="467.7" width="1.5" height="3.7" fill="#0a80f4"/><rect x="1785.3" y="487.8" width="1.5" height="14.2" fill="#0a80f4"/><rect x="1788.6" y="462.4" width="1.5" height="14.2" fill="#0a80f4"/><rect x="1843.4" y="472.1" width="2.2" height="25.4" fill="#0a80f4"/></g><text fill="#c4c4c4"><tspan x="11" y="426" font-size="19.2" textLength="38.4" lengthAdjust="spacingAndGlyphs">時刻</tspan><tspan x="49.6" y="426.5" font-size="20" textLength="57.8" lengthAdjust="spacingAndGlyphs">:06:00</tspan> <tspan x="117" y="426" font-size="19.2" textLength="38.4" lengthAdjust="spacingAndGlyphs">始値</tspan><tspan x="155.6" y="426.5" font-size="20" textLength="57.8" lengthAdjust="spacingAndGlyphs">:4,722</tspan> <tspan x="223.1" y="426" font-size="19.2" textLength="38.4" lengthAdjust="spacingAndGlyphs">高値</tspan><tspan x="261.6" y="426.5" font-size="20" textLength="57.8" lengthAdjust="spacingAndGlyphs">:4,722</tspan> <tspan x="329.1" y="426" font-size="19.2" textLength="38.4" lengthAdjust="spacingAndGlyphs">安値</tspan><tspan x="367.7" y="426.5" font-size="20" textLength="57.8" lengthAdjust="spacingAndGlyphs">:4,722</tspan> <tspan x="435.2" y="426" font-size="19.2" textLength="38.4" lengthAdjust="spacingAndGlyphs">終値</tspan><tspan x="473.7" y="426.5" font-size="20" textLength="57.8" lengthAdjust="spacingAndGlyphs">:4,722</tspan></text><text x="1909" y="492.8" font-size="20.6" fill="#c4c4c4" textLength="48.2" lengthAdjust="spacingAndGlyphs">4,710</text><text x="1909" y="542.1" font-size="20.6" fill="#c4c4c4" textLength="48.2" lengthAdjust="spacingAndGlyphs">4,700</text><text x="1909" y="591.4" font-size="20.6" fill="#c4c4c4" textLength="48.2" lengthAdjust="spacingAndGlyphs">4,690</text><text x="1909" y="640.7" font-size="20.6" fill="#c4c4c4" textLength="48.2" lengthAdjust="spacingAndGlyphs">4,680</text><text x="1909" y="690" font-size="20.6" fill="#c4c4c4" textLength="48.2" lengthAdjust="spacingAndGlyphs">4,670</text><text x="1909" y="739.3" font-size="20.6" fill="#c4c4c4" textLength="48.2" lengthAdjust="spacingAndGlyphs">4,660</text><text x="30.3" y="745.8" font-size="20" fill="#c4c4c4" textLength="19.3" lengthAdjust="spacingAndGlyphs">05</text><text x="122" y="745.8" font-size="20" fill="#c4c4c4" textLength="19.3" lengthAdjust="spacingAndGlyphs">09</text><text x="215.7" y="745.8" font-size="20" fill="#c4c4c4" textLength="19.3" lengthAdjust="spacingAndGlyphs">10</text><text x="306.6" y="745.8" font-size="20" fill="#c4c4c4" textLength="19.3" lengthAdjust="spacingAndGlyphs">11</text><text x="392.6" y="745.8" font-size="20" fill="#c4c4c4" textLength="19.3" lengthAdjust="spacingAndGlyphs">12</text><text x="487.8" y="745.8" font-size="20" fill="#c4c4c4" textLength="19.3" lengthAdjust="spacingAndGlyphs">13</text><text x="583.2" y="745.8" font-size="20" fill="#c4c4c4" textLength="19.3" lengthAdjust="spacingAndGlyphs">14</text><text x="676.7" y="745.8" font-size="20" fill="#c4c4c4" textLength="19.3" lengthAdjust="spacingAndGlyphs">15</text><text x="740.8" y="745.8" font-size="20" fill="#c4c4c4" textLength="19.3" lengthAdjust="spacingAndGlyphs">17</text><text x="834.4" y="745.8" font-size="20" fill="#c4c4c4" textLength="19.3" lengthAdjust="spacingAndGlyphs">18</text><text x="928.2" y="745.8" font-size="20" fill="#c4c4c4" textLength="19.3" lengthAdjust="spacingAndGlyphs">19</text><text x="1015.6" y="745.8" font-size="20" fill="#c4c4c4" textLength="19.3" lengthAdjust="spacingAndGlyphs">20</text><text x="1108" y="745.8" font-size="20" fill="#c4c4c4" textLength="19.3" lengthAdjust="spacingAndGlyphs">21</text><text x="1189.2" y="745.8" font-size="20" fill="#c4c4c4" textLength="19.3" lengthAdjust="spacingAndGlyphs">22</text><text x="1282.8" y="745.8" font-size="20" fill="#c4c4c4" textLength="19.3" lengthAdjust="spacingAndGlyphs">23</text><text x="1378" y="745.8" font-size="20" fill="#c4c4c4" textLength="19.3" lengthAdjust="spacingAndGlyphs">00</text><text x="1471.8" y="745.8" font-size="20" fill="#c4c4c4" textLength="19.3" lengthAdjust="spacingAndGlyphs">01</text><text x="1565.3" y="745.8" font-size="20" fill="#c4c4c4" textLength="19.3" lengthAdjust="spacingAndGlyphs">02</text><text x="1648.1" y="745.8" font-size="20" fill="#c4c4c4" textLength="19.3" lengthAdjust="spacingAndGlyphs">03</text><text x="1734.4" y="745.8" font-size="20" fill="#c4c4c4" textLength="19.3" lengthAdjust="spacingAndGlyphs">04</text><text x="1823.3" y="745.8" font-size="20" fill="#c4c4c4" textLength="19.3" lengthAdjust="spacingAndGlyphs">05</text><text x="71" y="745.8" font-size="20" font-weight="bold" fill="#e8e8e8" textLength="19.3" lengthAdjust="spacingAndGlyphs">06</text><text x="1879.5" y="745.8" font-size="20" fill="#c4c4c4" textLength="19.3" lengthAdjust="spacingAndGlyphs">06</text><text x="1378" y="722.5" font-size="20" fill="#c4c4c4" textLength="19.3" lengthAdjust="spacingAndGlyphs">30</text><rect x="1906.5" y="420.7" width="93" height="34.5" fill="#d2d2d2"/><rect x="1906.5" y="420.7" width="93" height="1.5" fill="#ededed"/><rect x="1906.5" y="453.7" width="93" height="1.5" fill="#ededed"/><text x="1927.7" y="443.9" font-size="20.5" font-weight="bold" fill="#000" textLength="48.2" lengthAdjust="spacingAndGlyphs">4,722</text></svg></div><div class="abs panel" style="top:762px;height:315px"><svg width="1992" height="315" viewBox="9 762 1992 315" font-family="Liberation Sans, IPAGothic, sans-serif"><rect x="9.5" y="762.5" width="1990" height="314" fill="#191919"/><rect x="10" y="763.3" width="1896.5" height="288.9" fill="#000"/><path d="M10 763.7H1906.5" stroke="#c8c8c8" stroke-width="1.3" fill="none"/><path d="M10.4 763.3V1052.2H1906.5V763.3" stroke="#f4f4f4" stroke-width="1.6" fill="none"/><clipPath id="c3"><rect x="11" y="763.3" width="1895" height="288.4"/></clipPath><g stroke="#acacac" stroke-width="1.7" stroke-dasharray="1.7 1.35" fill="none"><path d="M29.1 764.3V1052.2"/><path d="M120.8 764.3V1052.2"/><path d="M214.5 764.3V1052.2"/><path d="M305.4 764.3V1052.2"/><path d="M391.4 764.3V1052.2"/><path d="M486.6 764.3V1052.2"/><path d="M582 764.3V1052.2"/><path d="M675.5 764.3V1052.2"/><path d="M739.6 764.3V1052.2"/><path d="M833.2 764.3V1052.2"/><path d="M927 764.3V1052.2"/><path d="M1014.4 764.3V1052.2"/><path d="M1106.8 764.3V1052.2"/><path d="M1188 764.3V1052.2"/><path d="M1281.6 764.3V1052.2"/><path d="M1376.8 764.3V1052.2"/><path d="M1470.6 764.3V1052.2"/><path d="M1564.1 764.3V1052.2"/><path d="M1646.9 764.3V1052.2"/><path d="M1733.2 764.3V1052.2"/><path d="M1822.1 764.3V1052.2"/><path d="M1903.4 764.3V1052.2"/><path d="M96 764.3V1052.2"/><path d="M97.5 764.3V1052.2"/><path d="M11 829H1905.5"/><path d="M11 914H1905.5"/><path d="M11 999.2H1905.5"/></g><path clip-path="url(#c3)" d="M12 807.1L13.6 807.1L15.2 810.5L16.7 807.1L18.3 813.9L19.9 813.9L21.5 817.3L23.1 815.6L24.6 815.6L26.2 813.9L27.8 817.3L29.4 817.3L30.9 819L32.5 819L34.1 817.3L35.7 819L37.3 820.7L38.8 819L40.4 819L42 822.4L43.6 819L45.2 817.3L46.7 819L48.3 819L49.9 819L51.5 820.7L53 827.5L54.6 825.8L56.2 827.5L57.8 829.2L59.4 832.6L60.9 830.9L62.5 832.6L64.1 837.7L65.7 834.3L67.3 837.7L68.8 837.7L70.4 836L72 830.9L73.6 829.2L75.2 832.6L76.7 829.2L78.3 827.5L79.9 827.5L81.5 827.5L83 825.8L84.6 824.1L86.2 827.5L87.8 829.2L89.4 827.5L90.9 827.5L92.5 829.2L94.1 827.5L95.7 825.8L97.3 825.8L98.8 827.5L100.4 824.1L102 822.4L103.6 824.1L105.2 827.5L106.7 829.2L108.3 829.2L109.9 830.9L111.5 827.5L113 825.8L114.6 829.2L116.2 829.2L117.8 829.2L119.4 830.9L120.9 832.6L122.5 832.6L124.1 841.1L125.7 849.6L127.3 849.6L128.8 846.2L130.4 844.5L132 844.5L133.6 849.6L135.1 856.4L136.7 858.1L138.3 854.7L139.9 847.9L141.5 851.3L143 846.2L144.6 844.5L146.2 841.1L147.8 837.7L149.4 839.4L150.9 834.3L152.5 832.6L154.1 824.1L155.7 820.7L157.3 820.7L158.8 820.7L160.4 819L162 817.3L163.6 813.9L165.1 810.5L166.7 819L168.3 820.7L169.9 820.7L171.5 817.3L173 813.9L174.6 813.9L176.2 813.9L177.8 817.3L179.4 817.3L180.9 819L182.5 824.1L184.1 825.8L185.7 825.8L187.2 825.8L188.8 825.8L190.4 824.1L192 824.1L193.6 819L195.1 819L196.7 819L198.3 820.7L199.9 819L201.5 822.4L203 824.1L204.6 824.1L206.2 822.4L207.8 820.7L209.4 815.6L210.9 813.9L212.5 812.2L214.1 812.2L215.7 813.9L217.2 810.5L218.8 810.5L220.4 808.8L222 805.4L223.6 790.1L225.1 791.8L226.7 788.4L228.3 783.3L229.9 779.9L231.5 778.2L233 779.9L234.6 781.6L236.2 781.6L237.8 779.9L239.3 781.6L240.9 788.4L242.5 788.4L244.1 788.4L245.7 788.4L247.2 786.7L248.8 788.4L250.4 793.5L252 793.5L253.6 798.6L255.1 798.6L256.7 796.9L258.3 796.9L259.9 798.6L261.5 791.8L263 788.4L264.6 790.1L266.2 786.7L267.8 786.7L269.3 790.1L270.9 788.4L272.5 791.8L274.1 790.1L275.7 788.4L277.2 788.4L278.8 790.1L280.4 788.4L282 786.7L283.6 788.4L285.1 793.5L286.7 793.5L288.3 790.1L289.9 795.2L291.5 791.8L293 788.4L294.6 790.1L296.2 791.8L297.8 791.8L299.3 790.1L300.9 788.4L302.5 788.4L304.1 786.7L305.7 785L307.2 781.6L308.8 779.9L310.4 779.9L312 781.6L313.6 779.9L315.1 778.2L316.7 778.2L318.3 778.2L319.9 778.2L321.4 781.6L323 781.6L324.6 781.6L326.2 785L327.8 785L329.3 788.4L330.9 786.7L332.5 786.7L334.1 786.7L335.7 788.4L337.2 790.1L338.8 790.1L340.4 790.1L342 793.5L343.6 793.5L345.1 796.9L346.7 795.2L348.3 796.9L349.9 793.5L351.4 791.8L353 791.8L354.6 795.2L356.2 795.2L357.8 795.2L359.3 795.2L360.9 798.6L362.5 800.3L364.1 798.6L365.7 795.2L367.2 795.2L368.8 793.5L370.4 795.2L372 793.5L373.5 796.9L375.1 796.9L376.7 798.6L378.3 802L379.9 800.3L381.4 800.3L383 796.9L384.6 800.3L386.2 802L387.8 800.3L389.3 802L390.9 807.1L392.5 805.4L394.1 807.1L395.7 808.8L397.2 808.8L398.8 807.1L400.4 805.4L402 803.7L403.5 803.7L405.1 807.1L406.7 807.1L408.3 805.4L409.9 805.4L411.4 807.1L413 807.1L414.6 808.8L416.2 810.5L417.8 810.5L419.3 819L420.9 817.3L422.5 817.3L424.1 817.3L425.6 819L427.2 815.6L428.8 812.2L430.4 812.2L432 813.9L433.5 810.5L435.1 812.2L436.7 819L438.3 822.4L439.9 824.1L441.4 824.1L443 830.9L444.6 830.9L446.2 822.4L447.8 825.8L449.3 825.8L450.9 825.8L452.5 832.6L454.1 832.6L455.6 834.3L457.2 841.1L458.8 842.8L460.4 839.4L462 836L463.5 832.6L465.1 834.3L466.7 837.7L468.3 834.3L469.9 832.6L471.4 829.2L473 829.2L474.6 829.2L476.2 830.9L477.8 832.6L479.3 834.3L480.9 841.1L482.5 836L484.1 832.6L485.6 832.6L487.2 836L488.8 839.4L490.4 839.4L492 837.7L493.5 842.8L495.1 842.8L496.7 839.4L498.3 842.8L499.9 841.1L501.4 841.1L503 846.2L504.6 847.9L506.2 847.9L507.7 849.6L509.3 854.7L510.9 854.7L512.5 851.3L514.1 846.2L515.6 842.8L517.2 844.5L518.8 849.6L520.4 853L522 853L523.5 849.6L525.1 849.6L526.7 853L528.3 856.4L529.9 856.4L531.4 853L533 849.6L534.6 849.6L536.2 846.2L537.7 847.9L539.3 851.3L540.9 854.7L542.5 854.7L544.1 856.4L545.6 858.1L547.2 861.5L548.8 859.8L550.4 858.1L552 861.5L553.5 859.8L555.1 864.9L556.7 859.8L558.3 859.8L559.8 861.5L561.4 866.6L563 868.3L564.6 870L566.2 871.7L567.7 878.5L569.3 878.5L570.9 881.9L572.5 881.9L574.1 875.1L575.6 876.8L577.2 875.1L578.8 876.8L580.4 876.8L582 876.8L583.5 880.2L585.1 883.6L586.7 883.6L588.3 883.6L589.8 885.3L591.4 888.7L593 892.1L594.6 892.1L596.2 888.7L597.7 888.7L599.3 887L600.9 890.4L602.5 888.7L604.1 883.6L605.6 888.7L607.2 888.7L608.8 888.7L610.4 885.3L611.9 881.9L613.5 885.3L615.1 881.9L616.7 883.6L618.3 887L619.8 893.8L621.4 895.5L623 900.6L624.6 897.2L626.2 900.6L627.7 900.6L629.3 905.7L630.9 905.7L632.5 907.4L634.1 909.1L635.6 907.4L637.2 912.5L638.8 914.2L640.4 917.6L641.9 921L643.5 921L645.1 921L646.7 922.7L648.3 921L649.8 921L651.4 924.4L653 926.1L654.6 922.7L656.2 922.7L657.7 922.7L659.3 924.4L660.9 922.7L662.5 921L664.1 919.3L665.6 919.3L667.2 919.3L668.8 922.7L670.4 922.7L671.9 924.4L673.5 926.1L675.1 929.5L676.7 929.5L678.3 926.1L679.8 926.1L681.4 929.5L683 934.6L684.6 931.2L686.2 921L687.7 927.8L689.3 926.1L690.9 917.6L692.5 917.6L694 919.3L695.6 922.7L697.2 921L698.8 917.6L700.4 915.9L701.9 905.7L703.5 897.2L705.1 900.6L706.7 900.6L708.3 897.2L709.8 900.6L711.4 902.3L713 897.2L714.6 898.9L716.2 897.2L717.7 897.2L719.3 897.2L720.9 895.5L722.5 890.4L724 883.6L725.6 881.9L727.2 888.7L728.8 892.1L730.4 888.7L731.9 887L733.5 885.3L735.1 883.6L736.7 881.9L738.3 881.9L739.8 904L741.4 900.6L743 892.1L744.6 887L746.1 888.7L747.7 883.6L749.3 880.2L750.9 878.5L752.5 885.3L754 888.7L755.6 893.8L757.2 895.5L758.8 900.6L760.4 893.8L761.9 890.4L763.5 892.1L765.1 893.8L766.7 893.8L768.3 888.7L769.8 878.5L771.4 883.6L773 883.6L774.6 880.2L776.1 871.7L777.7 868.3L779.3 864.9L780.9 858.1L782.5 856.4L784 856.4L785.6 854.7L787.2 853L788.8 858.1L790.4 859.8L791.9 861.5L793.5 856.4L795.1 854.7L796.7 849.6L798.3 853L799.8 858.1L801.4 858.1L803 868.3L804.6 878.5L806.1 880.2L807.7 880.2L809.3 880.2L810.9 880.2L812.5 875.1L814 871.7L815.6 873.4L817.2 875.1L818.8 876.8L820.4 876.8L821.9 876.8L823.5 875.1L825.1 876.8L826.7 876.8L828.2 878.5L829.8 883.6L831.4 881.9L833 883.6L834.6 885.3L836.1 883.6L837.7 883.6L839.3 883.6L840.9 880.2L842.5 878.5L844 875.1L845.6 876.8L847.2 878.5L848.8 878.5L850.4 875.1L851.9 880.2L853.5 881.9L855.1 880.2L856.7 878.5L858.2 873.4L859.8 871.7L861.4 871.7L863 870L864.6 878.5L866.1 883.6L867.7 880.2L869.3 876.8L870.9 876.8L872.5 876.8L874 878.5L875.6 876.8L877.2 875.1L878.8 873.4L880.3 875.1L881.9 876.8L883.5 880.2L885.1 880.2L886.7 876.8L888.2 878.5L889.8 878.5L891.4 880.2L893 881.9L894.6 883.6L896.1 885.3L897.7 885.3L899.3 881.9L900.9 878.5L902.5 875.1L904 875.1L905.6 873.4L907.2 871.7L908.8 873.4L910.3 868.3L911.9 866.6L913.5 861.5L915.1 858.1L916.7 861.5L918.2 858.1L919.8 854.7L921.4 854.7L923 854.7L924.6 859.8L926.1 861.5L927.7 856.4L929.3 856.4L930.9 856.4L932.4 856.4L934 854.7L935.6 856.4L937.2 853L938.8 851.3L940.3 851.3L941.9 849.6L943.5 851.3L945.1 849.6L946.7 849.6L948.2 849.6L949.8 849.6L951.4 846.2L953 847.9L954.6 849.6L956.1 851.3L957.7 856.4L959.3 858.1L960.9 859.8L962.4 859.8L964 861.5L965.6 863.2L967.2 866.6L968.8 868.3L970.3 871.7L971.9 875.1L973.5 876.8L975.1 881.9L976.7 880.2L978.2 881.9L979.8 883.6L981.4 885.3L983 887L984.6 887L986.1 888.7L987.7 888.7L989.3 885.3L990.9 883.6L992.4 885.3L994 887L995.6 890.4L997.2 893.8L998.8 892.1L1000.3 898.9L1001.9 897.2L1003.5 895.5L1005.1 893.8L1006.7 888.7L1008.2 890.4L1009.8 888.7L1011.4 887L1013 888.7L1014.5 892.1L1016.1 890.4L1017.7 892.1L1019.3 893.8L1020.9 893.8L1022.4 895.5L1024 895.5L1025.6 895.5L1027.2 892.1L1028.8 892.1L1030.3 890.4L1031.9 892.1L1033.5 878.5L1035.1 880.2L1036.7 876.8L1038.2 880.2L1039.8 880.2L1041.4 881.9L1043 881.9L1044.5 881.9L1046.1 876.8L1047.7 875.1L1049.3 873.4L1050.9 873.4L1052.4 871.7L1054 873.4L1055.6 871.7L1057.2 873.4L1058.8 873.4L1060.3 871.7L1061.9 875.1L1063.5 875.1L1065.1 875.1L1066.6 875.1L1068.2 873.4L1069.8 870L1071.4 868.3L1073 864.9L1074.5 864.9L1076.1 861.5L1077.7 866.6L1079.3 866.6L1080.9 866.6L1082.4 871.7L1084 870L1085.6 870L1087.2 871.7L1088.8 871.7L1090.3 875.1L1091.9 876.8L1093.5 875.1L1095.1 876.8L1096.6 876.8L1098.2 876.8L1099.8 875.1L1101.4 873.4L1103 876.8L1104.5 880.2L1106.1 880.2L1107.7 885.3L1109.3 888.7L1110.9 892.1L1112.4 895.5L1114 897.2L1115.6 897.2L1117.2 900.6L1118.7 893.8L1120.3 893.8L1121.9 893.8L1123.5 897.2L1125.1 893.8L1126.6 893.8L1128.2 893.8L1129.8 885.3L1131.4 880.2L1133 883.6L1134.5 881.9L1136.1 885.3L1137.7 890.4L1139.3 890.4L1140.9 888.7L1142.4 888.7L1144 892.1L1145.6 898.9L1147.2 897.2L1148.7 898.9L1150.3 902.3L1151.9 907.4L1153.5 907.4L1155.1 909.1L1156.6 907.4L1158.2 909.1L1159.8 904L1161.4 905.7L1163 909.1L1164.5 907.4L1166.1 907.4L1167.7 912.5L1169.3 914.2L1170.9 914.2L1172.4 909.1L1174 909.1L1175.6 904L1177.2 905.7L1178.7 905.7L1180.3 910.8L1181.9 910.8L1183.5 910.8L1185.1 914.2L1186.6 917.6L1188.2 917.6L1189.8 915.9L1191.4 917.6L1193 915.9L1194.5 914.2L1196.1 914.2L1197.7 910.8L1199.3 905.7L1200.8 912.5L1202.4 919.3L1204 915.9L1205.6 910.8L1207.2 910.8L1208.7 910.8L1210.3 909.1L1211.9 912.5L1213.5 914.2L1215.1 917.6L1216.6 914.2L1218.2 929.5L1219.8 939.7L1221.4 936.3L1223 938L1224.5 941.4L1226.1 946.5L1227.7 944.8L1229.3 941.4L1230.8 941.4L1232.4 939.7L1234 939.7L1235.6 941.4L1237.2 939.7L1238.7 934.6L1240.3 927.8L1241.9 924.4L1243.5 919.3L1245.1 915.9L1246.6 921L1248.2 919.3L1249.8 926.1L1251.4 921L1252.9 917.6L1254.5 917.6L1256.1 917.6L1257.7 912.5L1259.3 907.4L1260.8 907.4L1262.4 905.7L1264 912.5L1265.6 915.9L1267.2 912.5L1268.7 910.8L1270.3 905.7L1271.9 904L1273.5 905.7L1275.1 902.3L1276.6 893.8L1278.2 892.1L1279.8 895.5L1281.4 892.1L1282.9 895.5L1284.5 895.5L1286.1 895.5L1287.7 892.1L1289.3 885.3L1290.8 887L1292.4 890.4L1294 888.7L1295.6 885.3L1297.2 883.6L1298.7 883.6L1300.3 887L1301.9 888.7L1303.5 883.6L1305.1 883.6L1306.6 885.3L1308.2 887L1309.8 890.4L1311.4 888.7L1312.9 887L1314.5 883.6L1316.1 888.7L1317.7 890.4L1319.3 893.8L1320.8 904L1322.4 905.7L1324 907.4L1325.6 917.6L1327.2 912.5L1328.7 909.1L1330.3 902.3L1331.9 900.6L1333.5 909.1L1335 909.1L1336.6 904L1338.2 897.2L1339.8 890.4L1341.4 892.1L1342.9 892.1L1344.5 895.5L1346.1 897.2L1347.7 904L1349.3 912.5L1350.8 917.6L1352.4 919.3L1354 914.2L1355.6 912.5L1357.2 904L1358.7 910.8L1360.3 917.6L1361.9 919.3L1363.5 919.3L1365 915.9L1366.6 914.2L1368.2 914.2L1369.8 914.2L1371.4 919.3L1372.9 917.6L1374.5 927.8L1376.1 936.3L1377.7 939.7L1379.3 941.4L1380.8 939.7L1382.4 943.1L1384 941.4L1385.6 941.4L1387.1 948.2L1388.7 944.8L1390.3 936.3L1391.9 931.2L1393.5 939.7L1395 938L1396.6 936.3L1398.2 941.4L1399.8 941.4L1401.4 948.2L1402.9 953.3L1404.5 955L1406.1 955L1407.7 968.6L1409.3 972L1410.8 972L1412.4 975.4L1414 975.4L1415.6 977.1L1417.1 978.8L1418.7 982.2L1420.3 987.3L1421.9 999.2L1423.5 1011.1L1425 1009.4L1426.6 1011.1L1428.2 1002.6L1429.8 994.1L1431.4 995.8L1432.9 1006L1434.5 1011.1L1436.1 1016.2L1437.7 1017.9L1439.2 1014.5L1440.8 1016.2L1442.4 1017.9L1444 1019.6L1445.6 1017.9L1447.1 1019.6L1448.7 1014.5L1450.3 1021.3L1451.9 1017.9L1453.5 1016.2L1455 1016.2L1456.6 1011.1L1458.2 1011.1L1459.8 1014.5L1461.4 1017.9L1462.9 1019.6L1464.5 1012.8L1466.1 1023L1467.7 1028.1L1469.2 1031.5L1470.8 1026.4L1472.4 1019.6L1474 1012.8L1475.6 1009.4L1477.1 1004.3L1478.7 1004.3L1480.3 1004.3L1481.9 1009.4L1483.5 1016.2L1485 1017.9L1486.6 1017.9L1488.2 1014.5L1489.8 1009.4L1491.4 1009.4L1492.9 1011.1L1494.5 1011.1L1496.1 1012.8L1497.7 1012.8L1499.2 1014.5L1500.8 1016.2L1502.4 1014.5L1504 1014.5L1505.6 1011.1L1507.1 1009.4L1508.7 1012.8L1510.3 1014.5L1511.9 1011.1L1513.5 1007.7L1515 1012.8L1516.6 1006L1518.2 1006L1519.8 1006L1521.3 1009.4L1522.9 1011.1L1524.5 1009.4L1526.1 1012.8L1527.7 1011.1L1529.2 1009.4L1530.8 1007.7L1532.4 1004.3L1534 1002.6L1535.6 1004.3L1537.1 1006L1538.7 1004.3L1540.3 997.5L1541.9 995.8L1543.5 992.4L1545 995.8L1546.6 997.5L1548.2 1007.7L1549.8 1017.9L1551.3 1023L1552.9 1028.1L1554.5 1028.1L1556.1 1029.8L1557.7 1031.5L1559.2 1019.6L1560.8 1012.8L1562.4 1012.8L1564 1009.4L1565.6 1007.7L1567.1 1009.4L1568.7 1006L1570.3 1004.3L1571.9 1002.6L1573.4 997.5L1575 999.2L1576.6 1000.9L1578.2 1006L1579.8 1007.7L1581.3 1009.4L1582.9 1006L1584.5 1007.7L1586.1 1009.4L1587.7 1011.1L1589.2 1011.1L1590.8 1011.1L1592.4 1006L1594 1002.6L1595.6 1002.6L1597.1 1009.4L1598.7 1009.4L1600.3 1011.1L1601.9 1011.1L1603.4 1014.5L1605 1014.5L1606.6 1017.9L1608.2 1012.8L1609.8 1011.1L1611.3 1016.2L1612.9 1016.2L1614.5 1012.8L1616.1 1009.4L1617.7 1006L1619.2 1009.4L1620.8 1014.5L1622.4 1014.5L1624 1012.8L1625.5 1014.5L1627.1 1012.8L1628.7 1014.5L1630.3 1016.2L1631.9 1016.2L1633.4 1012.8L1635 1014.5L1636.6 1011.1L1638.2 1014.5L1639.8 1016.2L1641.3 1017.9L1642.9 1023L1644.5 1019.6L1646.1 1019.6L1647.7 1019.6L1649.2 1019.6L1650.8 1016.2L1652.4 1019.6L1654 1019.6L1655.5 1021.3L1657.1 1019.6L1658.7 1016.2L1660.3 1009.4L1661.9 1002.6L1663.4 997.5L1665 997.5L1666.6 1000.9L1668.2 1011.1L1669.8 1007.7L1671.3 1007.7L1672.9 1007.7L1674.5 1007.7L1676.1 1011.1L1677.7 1014.5L1679.2 1011.1L1680.8 1004.3L1682.4 1007.7L1684 1009.4L1685.5 1007.7L1687.1 1006L1688.7 1002.6L1690.3 997.5L1691.9 994.1L1693.4 995.8L1695 1000.9L1696.6 1002.6L1698.2 1002.6L1699.8 997.5L1701.3 995.8L1702.9 995.8L1704.5 999.2L1706.1 1000.9L1707.6 1006L1709.2 1006L1710.8 1004.3L1712.4 1006L1714 1002.6L1715.5 999.2L1717.1 997.5L1718.7 995.8L1720.3 994.1L1721.9 992.4L1723.4 995.8L1725 999.2L1726.6 1000.9L1728.2 997.5L1729.8 994.1L1731.3 990.7L1732.9 989L1734.5 992.4L1736.1 1004.3L1737.6 1004.3L1739.2 1009.4L1740.8 1012.8L1742.4 1009.4L1744 1004.3L1745.5 995.8L1747.1 997.5L1748.7 1002.6L1750.3 1004.3L1751.9 1004.3L1753.4 999.2L1755 1004.3L1756.6 1007.7L1758.2 1009.4L1759.7 1011.1L1761.3 1012.8L1762.9 1014.5L1764.5 1014.5L1766.1 1011.1L1767.6 1012.8L1769.2 1019.6L1770.8 1012.8L1772.4 1009.4L1774 1004.3L1775.5 1007.7L1777.1 1006L1778.7 999.2L1780.3 987.3L1781.9 978.8L1783.4 985.6L1785 989L1786.6 987.3L1788.2 975.4L1789.7 970.3L1791.3 965.2L1792.9 960.1L1794.5 949.9L1796.1 948.2L1797.6 961.8L1799.2 961.8L1800.8 966.9L1802.4 965.2L1804 965.2L1805.5 963.5L1807.1 973.7L1808.7 975.4L1810.3 968.6L1811.8 965.2L1813.4 961.8L1815 960.1L1816.6 963.5L1818.2 973.7L1819.7 965.2L1821.3 955L1822.9 955L1824.5 955L1826.1 953.3L1827.6 951.6L1829.2 958.4L1830.8 966.9L1832.4 972L1834 968.6L1835.5 966.9L1837.1 963.5L1838.7 963.5L1840.3 960.1L1841.8 958.4L1843.4 966.9L1845 973.7L1846.6 965.2L1848.2 960.1L1849.7 960.1L1851.3 963.5L1852.9 970.3L1854.5 963.5L1856.1 963.5L1857.6 961.8L1859.2 958.4L1860.8 955L1862.4 953.3L1864 955L1865.5 953.3L1867.1 953.3L1868.7 953.3L1870.3 953.3L1871.8 951.6L1873.4 948.2L1875 946.5L1876.6 944.8L1878.2 946.5L1879.7 946.5L1881.3 946.5L1882.9 953.3L1884.5 955L1886.1 958.4L1887.6 965.2L1889.2 963.5L1890.8 965.2L1892.4 963.5L1893.9 970.3L1895.5 965.2L1897.1 961.8L1898.7 960.1L1900.3 965.2L1901.8 965.2L1903.4 966.9L1905 960.1" stroke="#ff0000" stroke-width="3.6" fill="none" stroke-linejoin="round"/><text fill="#c4c4c4"><tspan x="11" y="782.5" font-size="20" textLength="9.6" lengthAdjust="spacingAndGlyphs">[</tspan><tspan x="20.6" y="782" font-size="19.2" textLength="19.2" lengthAdjust="spacingAndGlyphs">金</tspan> <tspan x="49.6" y="782.5" font-size="20" textLength="48.2" lengthAdjust="spacingAndGlyphs">25/12</tspan> <tspan x="107.4" y="782.5" font-size="20" textLength="57.8" lengthAdjust="spacingAndGlyphs">13,845</tspan><tspan x="167.4" y="784" font-size="26">×</tspan><tspan x="184.5" y="782.5" font-size="20" textLength="48.2" lengthAdjust="spacingAndGlyphs">1.00]</tspan><tspan x="232.7" y="782" font-size="19.2" textLength="19.2" lengthAdjust="spacingAndGlyphs">－</tspan><tspan x="252" y="782.5" font-size="20" textLength="9.6" lengthAdjust="spacingAndGlyphs">[</tspan><tspan x="261.6" y="782" font-size="19.2" textLength="38.4" lengthAdjust="spacingAndGlyphs">白金</tspan> <tspan x="309.8" y="782.5" font-size="20" textLength="48.2" lengthAdjust="spacingAndGlyphs">25/12</tspan> <tspan x="367.7" y="782.5" font-size="20" textLength="48.2" lengthAdjust="spacingAndGlyphs">4,722</tspan><tspan x="418.1" y="784" font-size="26">×</tspan><tspan x="435.2" y="782.5" font-size="20" textLength="48.2" lengthAdjust="spacingAndGlyphs">1.00]</tspan> <tspan x="493" y="782" font-size="19.2" textLength="38.4" lengthAdjust="spacingAndGlyphs">終値</tspan> <tspan x="541.2" y="782" font-size="19.2" textLength="38.4" lengthAdjust="spacingAndGlyphs">時刻</tspan><tspan x="579.8" y="782.5" font-size="20" textLength="57.8" lengthAdjust="spacingAndGlyphs">:06:00</tspan> <tspan x="647.2" y="782.5" font-size="20" textLength="48.2" lengthAdjust="spacingAndGlyphs">9,123</tspan></text><text x="1909" y="824.4" font-size="20.6" fill="#c4c4c4" textLength="48.2" lengthAdjust="spacingAndGlyphs">9,200</text><text x="1909" y="909.4" font-size="20.6" fill="#c4c4c4" textLength="48.2" lengthAdjust="spacingAndGlyphs">9,150</text><text x="1909" y="994.6" font-size="20.6" fill="#c4c4c4" textLength="48.2" lengthAdjust="spacingAndGlyphs">9,100</text><text x="1909" y="1079.6" font-size="20.6" fill="#c4c4c4" textLength="48.2" lengthAdjust="spacingAndGlyphs">9,050</text><text x="30.3" y="1067.6" font-size="20" fill="#c4c4c4" textLength="19.3" lengthAdjust="spacingAndGlyphs">05</text><text x="122" y="1067.6" font-size="20" fill="#c4c4c4" textLength="19.3" lengthAdjust="spacingAndGlyphs">09</text><text x="215.7" y="1067.6" font-size="20" fill="#c4c4c4" textLength="19.3" lengthAdjust="spacingAndGlyphs">10</text><text x="306.6" y="1067.6" font-size="20" fill="#c4c4c4" textLength="19.3" lengthAdjust="spacingAndGlyphs">11</text><text x="392.6" y="1067.6" font-size="20" fill="#c4c4c4" textLength="19.3" lengthAdjust="spacingAndGlyphs">12</text><text x="487.8" y="1067.6" font-size="20" fill="#c4c4c4" textLength="19.3" lengthAdjust="spacingAndGlyphs">13</text><text x="583.2" y="1067.6" font-size="20" fill="#c4c4c4" textLength="19.3" lengthAdjust="spacingAndGlyphs">14</text><text x="676.7" y="1067.6" font-size="20" fill="#c4c4c4" textLength="19.3" lengthAdjust="spacingAndGlyphs">15</text><text x="740.8" y="1067.6" font-size="20" fill="#c4c4c4" textLength="19.3" lengthAdjust="spacingAndGlyphs">17</text><text x="834.4" y="1067.6" font-size="20" fill="#c4c4c4" textLength="19.3" lengthAdjust="spacingAndGlyphs">18</text><text x="928.2" y="1067.6" font-size="20" fill="#c4c4c4" textLength="19.3" lengthAdjust="spacingAndGlyphs">19</text><text x="1015.6" y="1067.6" font-size="20" fill="#c4c4c4" textLength="19.3" lengthAdjust="spacingAndGlyphs">20</text><text x="1108" y="1067.6" font-size="20" fill="#c4c4c4" textLength="19.3" lengthAdjust="spacingAndGlyphs">21</text><text x="1189.2" y="1067.6" font-size="20" fill="#c4c4c4" textLength="19.3" lengthAdjust="spacingAndGlyphs">22</text><text x="1282.8" y="1067.6" font-size="20" fill="#c4c4c4" textLength="19.3" lengthAdjust="spacingAndGlyphs">23</text><text x="1378" y="1067.6" font-size="20" fill="#c4c4c4" textLength="19.3" lengthAdjust="spacingAndGlyphs">00</text><text x="1471.8" y="1067.6" font-size="20" fill="#c4c4c4" textLength="19.3" lengthAdjust="spacingAndGlyphs">01</text><text x="1565.3" y="1067.6" font-size="20" fill="#c4c4c4" textLength="19.3" lengthAdjust="spacingAndGlyphs">02</text><text x="1648.1" y="1067.6" font-size="20" fill="#c4c4c4" textLength="19.3" lengthAdjust="spacingAndGlyphs">03</text><text x="1734.4" y="1067.6" font-size="20" fill="#c4c4c4" textLength="19.3" lengthAdjust="spacingAndGlyphs">04</text><text x="1823.3" y="1067.6" font-size="20" fill="#c4c4c4" textLength="19.3" lengthAdjust="spacingAndGlyphs">05</text><text x="71" y="1067.6" font-size="20" font-weight="bold" fill="#e8e8e8" textLength="19.3" lengthAdjust="spacingAndGlyphs">06</text><text x="1879.5" y="1067.6" font-size="20" fill="#c4c4c4" textLength="19.3" lengthAdjust="spacingAndGlyphs">06</text><text x="1378" y="1044.5" font-size="20" fill="#c4c4c4" textLength="19.3" lengthAdjust="spacingAndGlyphs">30</text><rect x="1906.5" y="942.6" width="93" height="34.5" fill="#d2d2d2"/><rect x="1906.5" y="942.6" width="93" height="1.5" fill="#ededed"/><rect x="1906.5" y="975.6" width="93" height="1.5" fill="#ededed"/><text x="1927.7" y="965.8" font-size="20.5" font-weight="bold" fill="#000" textLength="48.2" lengthAdjust="spacingAndGlyphs">9,123</text></svg></div><div class="abs gap" style="top:398.5px;height:8.3px;background:linear-gradient(#d9d9d9 0,#fafafa 2px,#fafafa 6px,#cfcfcf 8.3px)"></div><div class="abs gap" style="top:754.5px;height:8px;background:linear-gradient(#d9d9d9 0,#fafafa 2px,#fafafa 6px,#cfcfcf 8px)"></div><div class="abs" style="left:8px;top:1076.5px;width:1992px;height:5px;background:#d6d6d6"></div><div class="abs" style="left:1999.5px;top:43px;width:4px;height:1038px;background:linear-gradient(90deg,#b0b0b0,#cfcfcf)"></div><div class="abs" style="left:3.5px;top:43px;width:4.5px;height:1038px;background:linear-gradient(90deg,#d2d2d2,#ececec)"></div></body></html>
